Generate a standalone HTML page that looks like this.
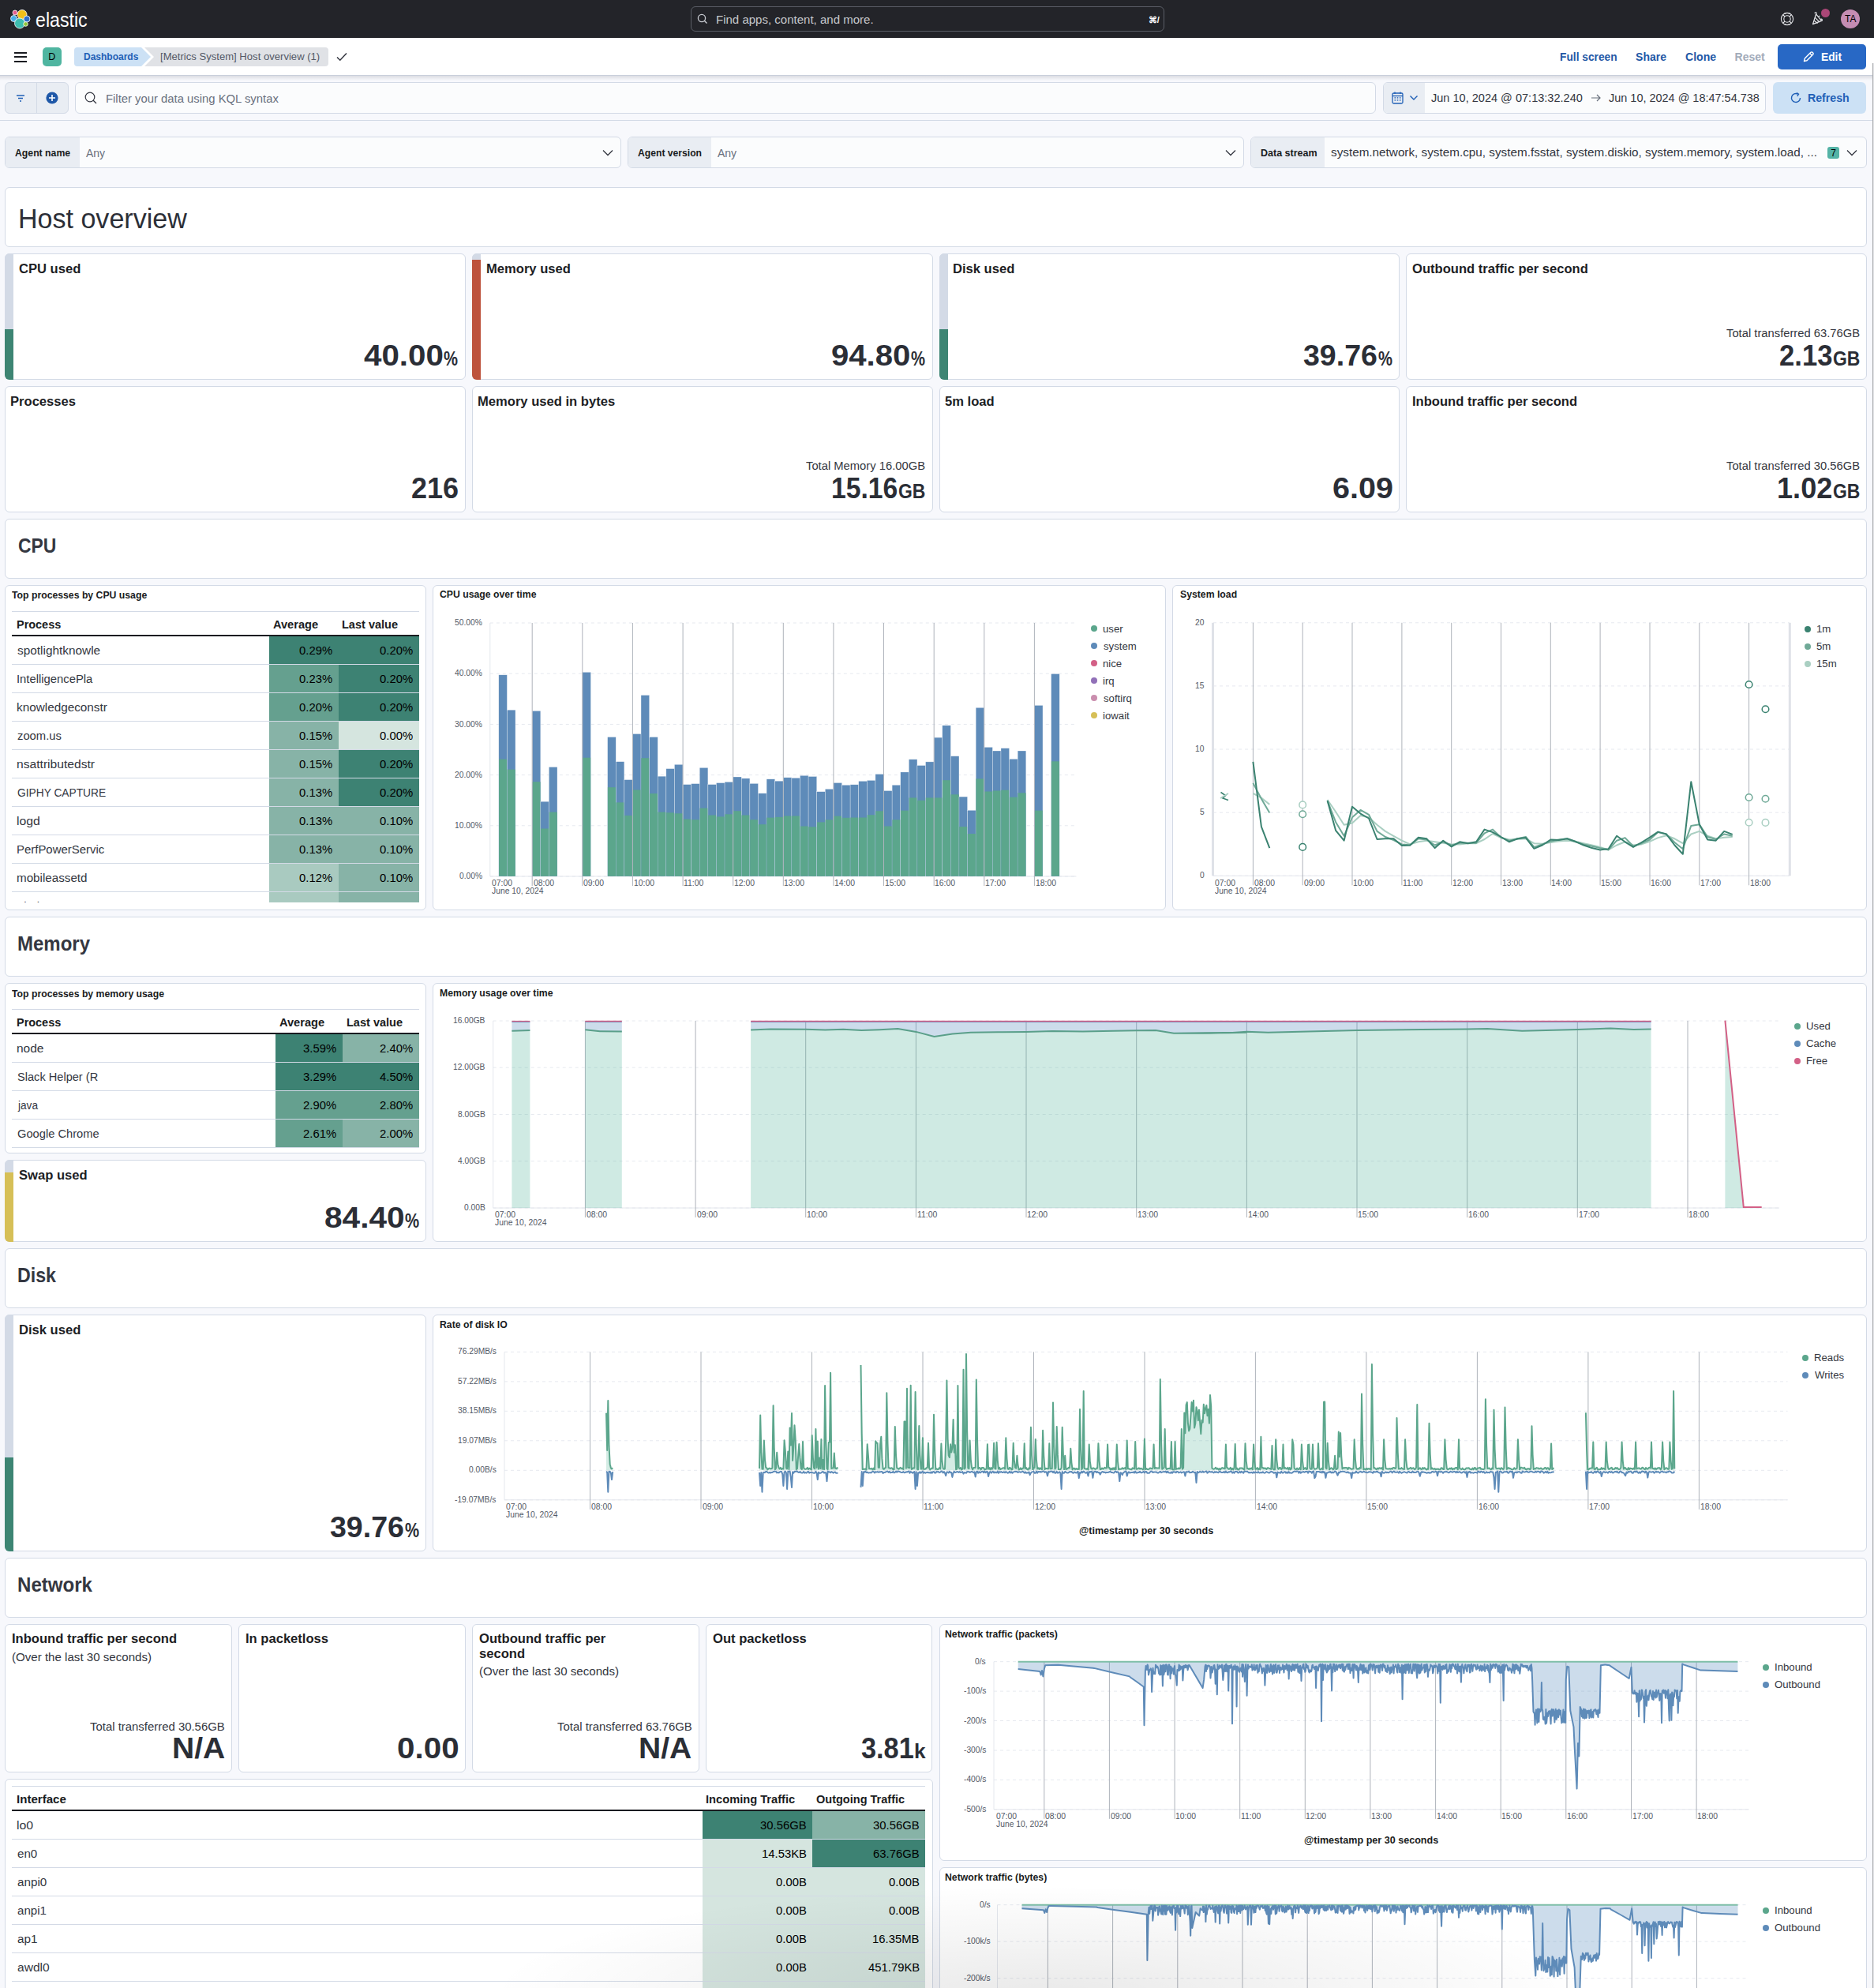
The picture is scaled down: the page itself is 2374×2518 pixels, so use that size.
<!DOCTYPE html><html><head><meta charset="utf-8"><style>
*{margin:0;padding:0}
html,body{width:2374px;height:2518px;overflow:hidden;background:#f7f8fc;font-family:"Liberation Sans",sans-serif;}
.a{position:absolute}
.t{position:absolute;white-space:nowrap;line-height:1;}
svg{overflow:visible}
</style></head><body><div class="a" style="left:0.00px;top:0.00px;width:2374.00px;height:48.00px;background:#232429;"></div>
<svg class="a" style="left:13px;top:11px" width="26" height="26" viewBox="0 0 26 26">
<circle cx="15" cy="7.5" r="6" fill="#f0bf1a" stroke="#fff" stroke-width="0.8"/>
<circle cx="6" cy="5" r="3" fill="#e45e8d" stroke="#fff" stroke-width="0.8"/>
<circle cx="4.5" cy="12.5" r="4" fill="#48b0ea" stroke="#fff" stroke-width="0.8"/>
<circle cx="21" cy="13" r="4" fill="#2e6ec9" stroke="#fff" stroke-width="0.8"/>
<circle cx="12" cy="18.5" r="6.5" fill="#3ebeb0" stroke="#fff" stroke-width="0.8"/>
<circle cx="19.5" cy="19.5" r="2.8" fill="#90c43c" stroke="#fff" stroke-width="0.8"/>
</svg>
<div class="t" style="left:44.98px;top:12.75px;font-size:25px;color:#ffffff;transform:scaleX(0.9262);transform-origin:0 0;">elastic</div>
<div class="a" style="left:875.00px;top:8.00px;width:600.00px;height:32.00px;border:1px solid #5a5d66;border-radius:6px;background:#232429;box-sizing:border-box;"></div>
<svg class="a" style="left:883px;top:17px" width="14" height="14" viewBox="0 0 14 14"><circle cx="6" cy="6" r="4.6" fill="none" stroke="#c9ccd2" stroke-width="1.3"/><path d="M9.3 9.3 L12.5 12.5" stroke="#c9ccd2" stroke-width="1.4"/></svg>
<div class="t" style="left:907.22px;top:18.10px;font-size:14px;color:#c6c8cc;transform:scaleX(1.0730);transform-origin:0 0;">Find apps, content, and more.</div>
<div class="t" style="left:1454.80px;top:19.65px;font-size:11px;font-weight:700;color:#ffffff;">⌘/</div>
<svg class="a" style="left:2255px;top:15px" width="18" height="18" viewBox="0 0 18 18"><g fill="none" stroke="#e8e9ec" stroke-width="1.1"><circle cx="9" cy="9" r="7.6"/><circle cx="9" cy="9" r="4.2"/><path d="M3.6 3.6 L6 6 M14.4 3.6 L12 6 M3.6 14.4 L6 12 M14.4 14.4 L12 12"/><path d="M5.6 2.3 A7.6 7.6 0 0 1 12.4 2.3 M5.6 15.7 A7.6 7.6 0 0 0 12.4 15.7"/></g></svg>
<svg class="a" style="left:2294px;top:14px" width="20" height="20" viewBox="0 0 20 20"><g fill="none" stroke="#e8e9ec" stroke-width="1.2" stroke-linejoin="round"><path d="M2.5 16.6 L6.6 3.8 L13.6 12.4 Z"/><path d="M5.2 8.2 L11 14 M4 12 L8.6 15.5"/><path d="M4.6 2.6 Q6.5 1 7.6 3.2"/><path d="M12.6 10.2 Q15 9.8 14.2 12.6"/><path d="M9.6 7.4 L11.2 5.8"/></g></svg>
<div class="a" style="left:2307px;top:10.5px;width:11px;height:11px;border-radius:50%;background:#ab4777;"></div>
<div class="a" style="left:2331.8px;top:11.8px;width:24.4px;height:24.4px;border-radius:50%;background:#c58db3;"></div>
<div class="t" style="left:2336.71px;top:18.18px;font-size:12.5px;color:#000000;transform:scaleX(0.9524);transform-origin:0 0;">TA</div>
<div class="a" style="left:0.00px;top:48.00px;width:2374.00px;height:48.00px;background:#fff;border-bottom:1px solid #c9cfdb;box-sizing:border-box;"></div>
<div class="a" style="left:18.00px;top:65.50px;width:16.00px;height:2.00px;background:#1a1c21;"></div>
<div class="a" style="left:18.00px;top:71.00px;width:16.00px;height:2.00px;background:#1a1c21;"></div>
<div class="a" style="left:18.00px;top:76.50px;width:16.00px;height:2.00px;background:#1a1c21;"></div>
<div class="a" style="left:54.00px;top:60.00px;width:24.00px;height:24.00px;background:#4fb5a0;border-radius:5px;"></div>
<div class="t" style="left:61.30px;top:66.38px;font-size:12.5px;color:#000;">D</div>
<svg class="a" style="left:94px;top:60px" width="330" height="24" viewBox="0 0 330 24">
<path d="M4 0 H85 L97 12 L85 24 H4 A4 4 0 0 1 0 20 V4 A4 4 0 0 1 4 0Z" fill="#cce1f5"/>
<path d="M89 0 H318 A4 4 0 0 1 322 4 V20 A4 4 0 0 1 318 24 H89 L101 12 Z" fill="#e0e2e6"/>
</svg>
<div class="t" style="left:105.67px;top:65.45px;font-size:13px;font-weight:700;color:#1f5fb6;transform:scaleX(0.9227);transform-origin:0 0;">Dashboards</div>
<div class="t" style="left:202.59px;top:65.45px;font-size:13px;color:#535966;transform:scaleX(1.0070);transform-origin:0 0;">[Metrics System] Host overview (1)</div>
<svg class="a" style="left:426px;top:66px" width="14" height="12" viewBox="0 0 14 12"><path d="M1 6.5 L4.8 10.2 L13 1.5" fill="none" stroke="#343741" stroke-width="1.5"/></svg>
<div class="t" style="left:1975.61px;top:65.10px;font-size:14px;font-weight:700;color:#1f58a6;transform:scaleX(0.9834);transform-origin:0 0;">Full screen</div>
<div class="t" style="left:2072.10px;top:65.10px;font-size:14px;font-weight:700;color:#1f58a6;">Share</div>
<div class="t" style="left:2134.90px;top:65.10px;font-size:14px;font-weight:700;color:#1f58a6;transform:scaleX(1.0053);transform-origin:0 0;">Clone</div>
<div class="t" style="left:2197.60px;top:65.10px;font-size:14px;font-weight:700;color:#a2abba;">Reset</div>
<div class="a" style="left:2252.00px;top:56.00px;width:112.00px;height:32.00px;background:#2868c5;border-radius:5px;"></div>
<svg class="a" style="left:2283px;top:64px" width="16" height="16" viewBox="0 0 16 16"><path d="M2.5 13.5 L3.3 10 L11 2.3 A1.4 1.4 0 0 1 13 2.3 L13.7 3 A1.4 1.4 0 0 1 13.7 5 L6 12.7 Z M9.8 3.5 L12.5 6.2" fill="none" stroke="#fff" stroke-width="1.4" stroke-linejoin="round"/></svg>
<div class="t" style="left:2306.61px;top:65.10px;font-size:14px;font-weight:700;color:#ffffff;transform:scaleX(0.9843);transform-origin:0 0;">Edit</div>
<div class="a" style="left:0.00px;top:96.00px;width:2374.00px;height:57.00px;background:#f7f8fc;border-bottom:1px solid #d3dae6;box-sizing:border-box;"></div>
<div class="a" style="left:0.00px;top:96.00px;width:2374.00px;height:6.00px;background:linear-gradient(rgba(40,45,60,0.13),rgba(40,45,60,0.0));"></div>
<div class="a" style="left:6.00px;top:104.00px;width:81.00px;height:40.00px;background:#e9edf3;border:1px solid #d3dae6;border-radius:6px;box-sizing:border-box;"></div>
<div class="a" style="left:46.00px;top:104.00px;width:1.00px;height:40.00px;background:#d3dae6;"></div>
<svg class="a" style="left:20px;top:119px" width="12" height="11" viewBox="0 0 12 11"><path d="M1 2 H11 M3 5.5 H9 M5 9 H7" stroke="#1f5fb6" stroke-width="1.3"/></svg>
<svg class="a" style="left:58px;top:116px" width="16" height="16" viewBox="0 0 16 16"><circle cx="8" cy="8" r="7.6" fill="#1f58a8"/><path d="M8 4 V12 M4 8 H12" stroke="#fff" stroke-width="1.6"/></svg>
<div class="a" style="left:95.00px;top:104.00px;width:1648.00px;height:40.00px;background:#fbfcfd;border:1px solid #d3dae6;border-radius:6px;box-sizing:border-box;"></div>
<svg class="a" style="left:107px;top:116px" width="17" height="17" viewBox="0 0 17 17"><circle cx="7" cy="7" r="5.8" fill="none" stroke="#343741" stroke-width="1.2"/><path d="M11 11 L15 15" stroke="#343741" stroke-width="1.3"/></svg>
<div class="t" style="left:134.33px;top:117.70px;font-size:14px;color:#69707d;transform:scaleX(1.0599);transform-origin:0 0;">Filter your data using KQL syntax</div>
<div class="a" style="left:1752.00px;top:104.00px;width:485.00px;height:40.00px;background:#fbfcfd;border:1px solid #d3dae6;border-radius:6px;box-sizing:border-box;"></div>
<div class="a" style="left:1753.00px;top:105.00px;width:52.00px;height:38.00px;background:#e9edf3;border-radius:5px 0 0 5px;"></div>
<svg class="a" style="left:1762px;top:115px" width="18" height="18" viewBox="0 0 18 18"><rect x="2" y="3" width="13" height="13" rx="1.5" fill="none" stroke="#1f5fb6" stroke-width="1.3"/><path d="M2 6.5 H15" stroke="#1f5fb6" stroke-width="1.3"/><path d="M5 1.5 V4 M12 1.5 V4" stroke="#1f5fb6" stroke-width="1.3"/><g fill="#1f5fb6"><rect x="4.5" y="8.2" width="1.6" height="1.4"/><rect x="7.7" y="8.2" width="1.6" height="1.4"/><rect x="10.9" y="8.2" width="1.6" height="1.4"/><rect x="4.5" y="11.2" width="1.6" height="1.4"/><rect x="7.7" y="11.2" width="1.6" height="1.4"/><rect x="10.9" y="11.2" width="1.6" height="1.4"/></g></svg>
<svg class="a" style="left:1785px;top:120px" width="12" height="8" viewBox="0 0 12 8"><path d="M1.5 1.5 L6 6 L10.5 1.5" fill="none" stroke="#1f5fb6" stroke-width="1.4"/></svg>
<div class="t" style="left:1813.29px;top:117.10px;font-size:14px;color:#343741;transform:scaleX(1.0386);transform-origin:0 0;">Jun 10, 2024 @ 07:13:32.240</div>
<svg class="a" style="left:2015px;top:117px" width="14" height="14" viewBox="0 0 14 14"><path d="M1 7 H12 M8 3 L12 7 L8 11" fill="none" stroke="#69707d" stroke-width="1.2"/></svg>
<div class="t" style="left:2037.79px;top:117.10px;font-size:14px;color:#343741;transform:scaleX(1.0332);transform-origin:0 0;">Jun 10, 2024 @ 18:47:54.738</div>
<div class="a" style="left:2246.00px;top:104.00px;width:118.00px;height:40.00px;background:#cce1f5;border-radius:6px;"></div>
<svg class="a" style="left:2267px;top:116px" width="16" height="16" viewBox="0 0 16 16"><path d="M13.5 8 A5.5 5.5 0 1 1 10.5 3.1" fill="none" stroke="#1f5fb6" stroke-width="1.4"/><path d="M9 1.5 L11.5 3.2 L9.8 5.8" fill="none" stroke="#1f5fb6" stroke-width="1.4"/></svg>
<div class="t" style="left:2289.59px;top:117.10px;font-size:14px;font-weight:700;color:#1f5fb6;transform:scaleX(1.0119);transform-origin:0 0;">Refresh</div>
<div class="a" style="left:6.00px;top:173.00px;width:781.00px;height:40.00px;background:#fbfcfd;border:1px solid #d3dae6;border-radius:6px;box-sizing:border-box;"></div>
<div class="a" style="left:7.00px;top:174.00px;width:94.00px;height:38.00px;background:#e9edf3;border-radius:5px 0 0 5px;"></div>
<div class="t" style="left:19.19px;top:188.30px;font-size:12px;font-weight:700;color:#1a1c21;transform:scaleX(1.0206);transform-origin:0 0;">Agent name</div>
<div class="t" style="left:109.00px;top:187.10px;font-size:14px;color:#69707d;">Any</div>
<svg class="a" style="left:763.0px;top:189px" width="14" height="9" viewBox="0 0 14 9"><path d="M1 1.5 L7 7.5 L13 1.5" fill="none" stroke="#343741" stroke-width="1.3"/></svg>
<div class="a" style="left:795.00px;top:173.00px;width:781.00px;height:40.00px;background:#fbfcfd;border:1px solid #d3dae6;border-radius:6px;box-sizing:border-box;"></div>
<div class="a" style="left:796.00px;top:174.00px;width:105.00px;height:38.00px;background:#e9edf3;border-radius:5px 0 0 5px;"></div>
<div class="t" style="left:808.20px;top:188.30px;font-size:12px;font-weight:700;color:#1a1c21;transform:scaleX(1.0127);transform-origin:0 0;">Agent version</div>
<div class="t" style="left:909.00px;top:187.10px;font-size:14px;color:#69707d;">Any</div>
<svg class="a" style="left:1552.0px;top:189px" width="14" height="9" viewBox="0 0 14 9"><path d="M1 1.5 L7 7.5 L13 1.5" fill="none" stroke="#343741" stroke-width="1.3"/></svg>
<div class="a" style="left:1584.00px;top:173.00px;width:781.00px;height:40.00px;background:#fbfcfd;border:1px solid #d3dae6;border-radius:6px;box-sizing:border-box;"></div>
<div class="a" style="left:1585.00px;top:174.00px;width:93.00px;height:38.00px;background:#e9edf3;border-radius:5px 0 0 5px;"></div>
<div class="t" style="left:1596.67px;top:188.30px;font-size:12px;font-weight:700;color:#1a1c21;transform:scaleX(1.0432);transform-origin:0 0;">Data stream</div>
<div class="t" style="left:1685.56px;top:186.10px;font-size:14px;color:#343741;transform:scaleX(1.0910);transform-origin:0 0;">system.network, system.cpu, system.fsstat, system.diskio, system.memory, system.load, ...</div>
<div class="a" style="left:2315.00px;top:186.00px;width:15.00px;height:15.00px;background:#54b3a6;border-radius:3px;"></div>
<div class="t" style="left:2319.15px;top:187.80px;font-size:12px;color:#000;">7</div>
<svg class="a" style="left:2339px;top:189px" width="14" height="9" viewBox="0 0 14 9"><path d="M1 1.5 L7 7.5 L13 1.5" fill="none" stroke="#343741" stroke-width="1.3"/></svg>
<div class="a" style="left:6.00px;top:237.00px;width:2359.00px;height:76.00px;background:#fff;border:1px solid #d3dae6;border-radius:6px;box-sizing:border-box;"></div>
<div class="t" style="left:22.72px;top:260.32px;font-size:35.5px;color:#2c2f37;transform:scaleX(0.9587);transform-origin:0 0;">Host overview</div>
<div class="a" style="left:6.00px;top:321.00px;width:583.75px;height:160.00px;background:#fff;border:1px solid #d3dae6;border-radius:6px;box-sizing:border-box;"></div>
<div class="a" style="left:6.00px;top:321.00px;width:11px;height:160.00px;border-radius:6px 0 0 6px;overflow:hidden;background:#d3dae6;"><div style="position:absolute;left:0;right:0;bottom:0;height:64.00px;background:#3d8573;"></div></div>
<div class="t" style="left:24.38px;top:333.20px;font-size:16px;font-weight:700;color:#1d1e24;transform:scaleX(1.0360);transform-origin:0 0;">CPU used</div>
<div class="t" style="left:562.26px;top:441.75px;font-size:25px;font-weight:700;color:#2b2e36;transform:scaleX(0.8095);transform-origin:0 0;">%</div>
<div class="t" style="left:461.01px;top:431.55px;font-size:37px;font-weight:700;color:#2b2e36;transform:scaleX(1.0894);transform-origin:0 0;">40.00</div>
<div class="a" style="left:597.75px;top:321.00px;width:583.75px;height:160.00px;background:#fff;border:1px solid #d3dae6;border-radius:6px;box-sizing:border-box;"></div>
<div class="a" style="left:597.75px;top:321.00px;width:11px;height:160.00px;border-radius:6px 0 0 6px;overflow:hidden;background:#d3dae6;"><div style="position:absolute;left:0;right:0;bottom:0;height:151.68px;background:#bd533c;"></div></div>
<div class="t" style="left:615.61px;top:333.20px;font-size:16px;font-weight:700;color:#1d1e24;transform:scaleX(1.0360);transform-origin:0 0;">Memory used</div>
<div class="t" style="left:1154.01px;top:441.75px;font-size:25px;font-weight:700;color:#2b2e36;transform:scaleX(0.8095);transform-origin:0 0;">%</div>
<div class="t" style="left:1053.29px;top:431.55px;font-size:37px;font-weight:700;color:#2b2e36;transform:scaleX(1.0835);transform-origin:0 0;">94.80</div>
<div class="a" style="left:1189.50px;top:321.00px;width:583.75px;height:160.00px;background:#fff;border:1px solid #d3dae6;border-radius:6px;box-sizing:border-box;"></div>
<div class="a" style="left:1189.50px;top:321.00px;width:11px;height:160.00px;border-radius:6px 0 0 6px;overflow:hidden;background:#d3dae6;"><div style="position:absolute;left:0;right:0;bottom:0;height:63.62px;background:#3d8573;"></div></div>
<div class="t" style="left:1207.36px;top:333.20px;font-size:16px;font-weight:700;color:#1d1e24;transform:scaleX(1.0360);transform-origin:0 0;">Disk used</div>
<div class="t" style="left:1745.76px;top:441.75px;font-size:25px;font-weight:700;color:#2b2e36;transform:scaleX(0.8095);transform-origin:0 0;">%</div>
<div class="t" style="left:1651.14px;top:431.55px;font-size:37px;font-weight:700;color:#2b2e36;transform:scaleX(1.0144);transform-origin:0 0;">39.76</div>
<div class="a" style="left:1781.25px;top:321.00px;width:583.75px;height:160.00px;background:#fff;border:1px solid #d3dae6;border-radius:6px;box-sizing:border-box;"></div>
<div class="t" style="left:1789.13px;top:333.20px;font-size:16px;font-weight:700;color:#1d1e24;transform:scaleX(1.0360);transform-origin:0 0;">Outbound traffic per second</div>
<div class="t" style="left:2321.68px;top:441.75px;font-size:25px;font-weight:700;color:#2b2e36;transform:scaleX(0.9178);transform-origin:0 0;">GB</div>
<div class="t" style="left:2253.88px;top:431.55px;font-size:37px;font-weight:700;color:#2b2e36;transform:scaleX(0.9366);transform-origin:0 0;">2.13</div>
<div class="t" style="left:2186.62px;top:415.10px;font-size:14px;color:#343741;transform:scaleX(1.0550);transform-origin:0 0;">Total transferred 63.76GB</div>
<div class="a" style="left:6.00px;top:489.00px;width:583.75px;height:160.00px;background:#fff;border:1px solid #d3dae6;border-radius:6px;box-sizing:border-box;"></div>
<div class="t" style="left:13.36px;top:501.20px;font-size:16px;font-weight:700;color:#1d1e24;transform:scaleX(1.0360);transform-origin:0 0;">Processes</div>
<div class="t" style="left:520.89px;top:599.55px;font-size:37px;font-weight:700;color:#2b2e36;transform:scaleX(0.9730);transform-origin:0 0;">216</div>
<div class="a" style="left:597.75px;top:489.00px;width:583.75px;height:160.00px;background:#fff;border:1px solid #d3dae6;border-radius:6px;box-sizing:border-box;"></div>
<div class="t" style="left:605.11px;top:501.20px;font-size:16px;font-weight:700;color:#1d1e24;transform:scaleX(1.0360);transform-origin:0 0;">Memory used in bytes</div>
<div class="t" style="left:1138.18px;top:609.75px;font-size:25px;font-weight:700;color:#2b2e36;transform:scaleX(0.9178);transform-origin:0 0;">GB</div>
<div class="t" style="left:1053.40px;top:599.55px;font-size:37px;font-weight:700;color:#2b2e36;transform:scaleX(0.9112);transform-origin:0 0;">15.16</div>
<div class="t" style="left:1021.27px;top:583.10px;font-size:14px;color:#343741;transform:scaleX(1.0550);transform-origin:0 0;">Total Memory 16.00GB</div>
<div class="a" style="left:1189.50px;top:489.00px;width:583.75px;height:160.00px;background:#fff;border:1px solid #d3dae6;border-radius:6px;box-sizing:border-box;"></div>
<div class="t" style="left:1197.48px;top:501.20px;font-size:16px;font-weight:700;color:#1d1e24;transform:scaleX(1.0360);transform-origin:0 0;">5m load</div>
<div class="t" style="left:1687.86px;top:599.55px;font-size:37px;font-weight:700;color:#2b2e36;transform:scaleX(1.0678);transform-origin:0 0;">6.09</div>
<div class="a" style="left:1781.25px;top:489.00px;width:583.75px;height:160.00px;background:#fff;border:1px solid #d3dae6;border-radius:6px;box-sizing:border-box;"></div>
<div class="t" style="left:1788.61px;top:501.20px;font-size:16px;font-weight:700;color:#1d1e24;transform:scaleX(1.0360);transform-origin:0 0;">Inbound traffic per second</div>
<div class="t" style="left:2321.68px;top:609.75px;font-size:25px;font-weight:700;color:#2b2e36;transform:scaleX(0.9178);transform-origin:0 0;">GB</div>
<div class="t" style="left:2251.25px;top:599.55px;font-size:37px;font-weight:700;color:#2b2e36;transform:scaleX(0.9765);transform-origin:0 0;">1.02</div>
<div class="t" style="left:2186.62px;top:583.10px;font-size:14px;color:#343741;transform:scaleX(1.0550);transform-origin:0 0;">Total transferred 30.56GB</div>
<div class="a" style="left:6.00px;top:657.00px;width:2359.00px;height:76.00px;background:#fff;border:1px solid #d3dae6;border-radius:6px;box-sizing:border-box;"></div><div class="t" style="left:22.58px;top:679.25px;font-size:25px;font-weight:700;color:#343741;transform:scaleX(0.9163);transform-origin:0 0;">CPU</div>
<div class="a" style="left:6.00px;top:1161.00px;width:2359.00px;height:76.00px;background:#fff;border:1px solid #d3dae6;border-radius:6px;box-sizing:border-box;"></div><div class="t" style="left:21.87px;top:1183.25px;font-size:25px;font-weight:700;color:#343741;transform:scaleX(0.9596);transform-origin:0 0;">Memory</div>
<div class="a" style="left:6.00px;top:1581.00px;width:2359.00px;height:76.00px;background:#fff;border:1px solid #d3dae6;border-radius:6px;box-sizing:border-box;"></div><div class="t" style="left:21.92px;top:1603.25px;font-size:25px;font-weight:700;color:#343741;transform:scaleX(0.9276);transform-origin:0 0;">Disk</div>
<div class="a" style="left:6.00px;top:1973.00px;width:2359.00px;height:76.00px;background:#fff;border:1px solid #d3dae6;border-radius:6px;box-sizing:border-box;"></div><div class="t" style="left:21.86px;top:1995.25px;font-size:25px;font-weight:700;color:#343741;transform:scaleX(0.9628);transform-origin:0 0;">Network</div>
<div class="a" style="left:6.00px;top:741.00px;width:534.44px;height:412.00px;background:#fff;border:1px solid #d3dae6;border-radius:6px;box-sizing:border-box;"></div>
<div class="t" style="left:15.40px;top:747.80px;font-size:12px;font-weight:700;color:#1a1c21;transform:scaleX(1.0200);transform-origin:0 0;">Top processes by CPU usage</div>
<div class="a" style="left:15.00px;top:774.00px;width:516.00px;height:1.00px;background:#d3dae6;"></div>
<div class="t" style="left:20.57px;top:783.60px;font-size:14px;font-weight:700;color:#1a1c21;transform:scaleX(1.0321);transform-origin:0 0;">Process</div>
<div class="t" style="left:346.28px;top:783.60px;font-size:14px;font-weight:700;color:#1a1c21;transform:scaleX(1.0427);transform-origin:0 0;">Average</div>
<div class="t" style="left:433.27px;top:783.60px;font-size:14px;font-weight:700;color:#1a1c21;transform:scaleX(1.0373);transform-origin:0 0;">Last value</div>
<div class="a" style="left:15.00px;top:804.00px;width:516.00px;height:2.00px;background:#1a1c21;"></div>
<div class="a" style="left:0;top:0;width:2374px;height:1143px;overflow:hidden;"><div class="a" style="left:341.00px;top:806.00px;width:87.80px;height:35.00px;background:#3d8273;"></div>
<div class="t" style="left:379.25px;top:817.10px;font-size:14px;color:#000;transform:scaleX(1.0600);transform-origin:0 0;">0.29%</div>
<div class="a" style="left:428.80px;top:806.00px;width:102.20px;height:35.00px;background:#3d8273;"></div>
<div class="t" style="left:481.45px;top:817.10px;font-size:14px;color:#000;transform:scaleX(1.0600);transform-origin:0 0;">0.20%</div>
<div class="a" style="left:15.00px;top:841.00px;width:516.00px;height:1.00px;background:#d3dae6;"></div>
<div class="t" style="left:21.96px;top:817.10px;font-size:14px;color:#343741;transform:scaleX(1.0982);transform-origin:0 0;">spotlightknowle</div>
<div class="a" style="left:341.00px;top:842.00px;width:87.80px;height:35.00px;background:#65a08f;"></div>
<div class="t" style="left:379.25px;top:853.10px;font-size:14px;color:#000;transform:scaleX(1.0600);transform-origin:0 0;">0.23%</div>
<div class="a" style="left:428.80px;top:842.00px;width:102.20px;height:35.00px;background:#3d8273;"></div>
<div class="t" style="left:481.45px;top:853.10px;font-size:14px;color:#000;transform:scaleX(1.0600);transform-origin:0 0;">0.20%</div>
<div class="a" style="left:15.00px;top:877.00px;width:516.00px;height:1.00px;background:#d3dae6;"></div>
<div class="t" style="left:21.02px;top:853.10px;font-size:14px;color:#343741;transform:scaleX(1.0579);transform-origin:0 0;">IntelligencePla</div>
<div class="a" style="left:341.00px;top:878.00px;width:87.80px;height:35.00px;background:#65a08f;"></div>
<div class="t" style="left:379.25px;top:889.10px;font-size:14px;color:#000;transform:scaleX(1.0600);transform-origin:0 0;">0.20%</div>
<div class="a" style="left:428.80px;top:878.00px;width:102.20px;height:35.00px;background:#3d8273;"></div>
<div class="t" style="left:481.45px;top:889.10px;font-size:14px;color:#000;transform:scaleX(1.0600);transform-origin:0 0;">0.20%</div>
<div class="a" style="left:15.00px;top:913.00px;width:516.00px;height:1.00px;background:#d3dae6;"></div>
<div class="t" style="left:21.42px;top:889.10px;font-size:14px;color:#343741;transform:scaleX(1.0934);transform-origin:0 0;">knowledgeconstr</div>
<div class="a" style="left:341.00px;top:914.00px;width:87.80px;height:35.00px;background:#87b3a7;"></div>
<div class="t" style="left:379.25px;top:925.10px;font-size:14px;color:#000;transform:scaleX(1.0600);transform-origin:0 0;">0.15%</div>
<div class="a" style="left:428.80px;top:914.00px;width:102.20px;height:35.00px;background:#d5e5df;"></div>
<div class="t" style="left:481.45px;top:925.10px;font-size:14px;color:#000;transform:scaleX(1.0600);transform-origin:0 0;">0.00%</div>
<div class="a" style="left:15.00px;top:949.00px;width:516.00px;height:1.00px;background:#d3dae6;"></div>
<div class="t" style="left:21.77px;top:925.10px;font-size:14px;color:#343741;transform:scaleX(1.0560);transform-origin:0 0;">zoom.us</div>
<div class="a" style="left:341.00px;top:950.00px;width:87.80px;height:35.00px;background:#87b3a7;"></div>
<div class="t" style="left:379.25px;top:961.10px;font-size:14px;color:#000;transform:scaleX(1.0600);transform-origin:0 0;">0.15%</div>
<div class="a" style="left:428.80px;top:950.00px;width:102.20px;height:35.00px;background:#3d8273;"></div>
<div class="t" style="left:481.45px;top:961.10px;font-size:14px;color:#000;transform:scaleX(1.0600);transform-origin:0 0;">0.20%</div>
<div class="a" style="left:15.00px;top:985.00px;width:516.00px;height:1.00px;background:#d3dae6;"></div>
<div class="t" style="left:21.40px;top:961.10px;font-size:14px;color:#343741;transform:scaleX(1.1166);transform-origin:0 0;">nsattributedstr</div>
<div class="a" style="left:341.00px;top:986.00px;width:87.80px;height:35.00px;background:#87b3a7;"></div>
<div class="t" style="left:379.25px;top:997.10px;font-size:14px;color:#000;transform:scaleX(1.0600);transform-origin:0 0;">0.13%</div>
<div class="a" style="left:428.80px;top:986.00px;width:102.20px;height:35.00px;background:#3d8273;"></div>
<div class="t" style="left:481.45px;top:997.10px;font-size:14px;color:#000;transform:scaleX(1.0600);transform-origin:0 0;">0.20%</div>
<div class="a" style="left:15.00px;top:1021.00px;width:516.00px;height:1.00px;background:#d3dae6;"></div>
<div class="t" style="left:21.71px;top:997.10px;font-size:14px;color:#343741;transform:scaleX(0.9832);transform-origin:0 0;">GIPHY CAPTURE</div>
<div class="a" style="left:341.00px;top:1022.00px;width:87.80px;height:35.00px;background:#87b3a7;"></div>
<div class="t" style="left:379.25px;top:1033.10px;font-size:14px;color:#000;transform:scaleX(1.0600);transform-origin:0 0;">0.13%</div>
<div class="a" style="left:428.80px;top:1022.00px;width:102.20px;height:35.00px;background:#87b3a7;"></div>
<div class="t" style="left:481.45px;top:1033.10px;font-size:14px;color:#000;transform:scaleX(1.0600);transform-origin:0 0;">0.10%</div>
<div class="a" style="left:15.00px;top:1057.00px;width:516.00px;height:1.00px;background:#d3dae6;"></div>
<div class="t" style="left:21.39px;top:1033.10px;font-size:14px;color:#343741;transform:scaleX(1.1255);transform-origin:0 0;">logd</div>
<div class="a" style="left:341.00px;top:1058.00px;width:87.80px;height:35.00px;background:#87b3a7;"></div>
<div class="t" style="left:379.25px;top:1069.10px;font-size:14px;color:#000;transform:scaleX(1.0600);transform-origin:0 0;">0.13%</div>
<div class="a" style="left:428.80px;top:1058.00px;width:102.20px;height:35.00px;background:#87b3a7;"></div>
<div class="t" style="left:481.45px;top:1069.10px;font-size:14px;color:#000;transform:scaleX(1.0600);transform-origin:0 0;">0.10%</div>
<div class="a" style="left:15.00px;top:1093.00px;width:516.00px;height:1.00px;background:#d3dae6;"></div>
<div class="t" style="left:21.23px;top:1069.10px;font-size:14px;color:#343741;transform:scaleX(1.0671);transform-origin:0 0;">PerfPowerServic</div>
<div class="a" style="left:341.00px;top:1094.00px;width:87.80px;height:35.00px;background:#a9cac0;"></div>
<div class="t" style="left:379.25px;top:1105.10px;font-size:14px;color:#000;transform:scaleX(1.0600);transform-origin:0 0;">0.12%</div>
<div class="a" style="left:428.80px;top:1094.00px;width:102.20px;height:35.00px;background:#87b3a7;"></div>
<div class="t" style="left:481.45px;top:1105.10px;font-size:14px;color:#000;transform:scaleX(1.0600);transform-origin:0 0;">0.10%</div>
<div class="a" style="left:15.00px;top:1129.00px;width:516.00px;height:1.00px;background:#d3dae6;"></div>
<div class="t" style="left:21.42px;top:1105.10px;font-size:14px;color:#343741;transform:scaleX(1.0855);transform-origin:0 0;">mobileassetd</div>
<div class="a" style="left:341.00px;top:1130.00px;width:87.80px;height:35.00px;background:#a9cac0;"></div>
<div class="t" style="left:380.31px;top:1141.10px;font-size:14px;color:#000;transform:scaleX(1.0600);transform-origin:0 0;">0.11%</div>
<div class="a" style="left:428.80px;top:1130.00px;width:102.20px;height:35.00px;background:#87b3a7;"></div>
<div class="t" style="left:481.45px;top:1141.10px;font-size:14px;color:#000;transform:scaleX(1.0600);transform-origin:0 0;">0.10%</div>
<div class="a" style="left:15.00px;top:1165.00px;width:516.00px;height:1.00px;background:#d3dae6;"></div>
<div class="t" style="left:21.22px;top:1141.10px;font-size:14px;color:#343741;transform:scaleX(1.0700);transform-origin:0 0;">Finder</div></div>
<div class="a" style="left:6.00px;top:1245.00px;width:534.44px;height:216.00px;background:#fff;border:1px solid #d3dae6;border-radius:6px;box-sizing:border-box;"></div>
<div class="t" style="left:15.40px;top:1252.80px;font-size:12px;font-weight:700;color:#1a1c21;transform:scaleX(1.0200);transform-origin:0 0;">Top processes by memory usage</div>
<div class="a" style="left:15.00px;top:1278.00px;width:516.00px;height:1.00px;background:#d3dae6;"></div>
<div class="t" style="left:20.57px;top:1287.60px;font-size:14px;font-weight:700;color:#1a1c21;transform:scaleX(1.0321);transform-origin:0 0;">Process</div>
<div class="t" style="left:354.38px;top:1287.60px;font-size:14px;font-weight:700;color:#1a1c21;transform:scaleX(1.0427);transform-origin:0 0;">Average</div>
<div class="t" style="left:438.67px;top:1287.60px;font-size:14px;font-weight:700;color:#1a1c21;transform:scaleX(1.0373);transform-origin:0 0;">Last value</div>
<div class="a" style="left:15.00px;top:1308.00px;width:516.00px;height:2.00px;background:#1a1c21;"></div>
<div class="a" style="left:349.00px;top:1310.00px;width:84.60px;height:35.00px;background:#3d8273;"></div>
<div class="t" style="left:384.05px;top:1321.10px;font-size:14px;color:#000;transform:scaleX(1.0600);transform-origin:0 0;">3.59%</div>
<div class="a" style="left:433.60px;top:1310.00px;width:97.40px;height:35.00px;background:#87b3a7;"></div>
<div class="t" style="left:481.45px;top:1321.10px;font-size:14px;color:#000;transform:scaleX(1.0600);transform-origin:0 0;">2.40%</div>
<div class="a" style="left:15.00px;top:1345.00px;width:516.00px;height:1.00px;background:#d3dae6;"></div>
<div class="t" style="left:21.40px;top:1321.10px;font-size:14px;color:#343741;transform:scaleX(1.1077);transform-origin:0 0;">node</div>
<div class="a" style="left:349.00px;top:1346.00px;width:84.60px;height:35.00px;background:#3d8273;"></div>
<div class="t" style="left:384.05px;top:1357.10px;font-size:14px;color:#000;transform:scaleX(1.0600);transform-origin:0 0;">3.29%</div>
<div class="a" style="left:433.60px;top:1346.00px;width:97.40px;height:35.00px;background:#3d8273;"></div>
<div class="t" style="left:481.45px;top:1357.10px;font-size:14px;color:#000;transform:scaleX(1.0600);transform-origin:0 0;">4.50%</div>
<div class="a" style="left:15.00px;top:1381.00px;width:516.00px;height:1.00px;background:#d3dae6;"></div>
<div class="t" style="left:21.67px;top:1357.10px;font-size:14px;color:#343741;transform:scaleX(1.0424);transform-origin:0 0;">Slack Helper (R</div>
<div class="a" style="left:349.00px;top:1382.00px;width:84.60px;height:35.00px;background:#65a08f;"></div>
<div class="t" style="left:384.05px;top:1393.10px;font-size:14px;color:#000;transform:scaleX(1.0600);transform-origin:0 0;">2.90%</div>
<div class="a" style="left:433.60px;top:1382.00px;width:97.40px;height:35.00px;background:#65a08f;"></div>
<div class="t" style="left:481.45px;top:1393.10px;font-size:14px;color:#000;transform:scaleX(1.0600);transform-origin:0 0;">2.80%</div>
<div class="a" style="left:15.00px;top:1417.00px;width:516.00px;height:1.00px;background:#d3dae6;"></div>
<div class="t" style="left:22.79px;top:1393.10px;font-size:14px;color:#343741;transform:scaleX(0.9732);transform-origin:0 0;">java</div>
<div class="a" style="left:349.00px;top:1418.00px;width:84.60px;height:35.00px;background:#65a08f;"></div>
<div class="t" style="left:384.05px;top:1429.10px;font-size:14px;color:#000;transform:scaleX(1.0600);transform-origin:0 0;">2.61%</div>
<div class="a" style="left:433.60px;top:1418.00px;width:97.40px;height:35.00px;background:#87b3a7;"></div>
<div class="t" style="left:481.45px;top:1429.10px;font-size:14px;color:#000;transform:scaleX(1.0600);transform-origin:0 0;">2.00%</div>
<div class="a" style="left:15.00px;top:1453.00px;width:516.00px;height:1.00px;background:#d3dae6;"></div>
<div class="t" style="left:21.67px;top:1429.10px;font-size:14px;color:#343741;transform:scaleX(1.0482);transform-origin:0 0;">Google Chrome</div>
<div class="a" style="left:6.00px;top:1469.00px;width:534.44px;height:104.00px;background:#fff;border:1px solid #d3dae6;border-radius:6px;box-sizing:border-box;"></div>
<div class="a" style="left:6.00px;top:1469.00px;width:11px;height:104.00px;border-radius:6px 0 0 6px;overflow:hidden;background:#d3dae6;"><div style="position:absolute;left:0;right:0;bottom:0;height:87.78px;background:#d6bf57;"></div></div>
<div class="t" style="left:24.48px;top:1481.10px;font-size:16px;font-weight:700;color:#1d1e24;transform:scaleX(1.0360);transform-origin:0 0;">Swap used</div>
<div class="t" style="left:512.85px;top:1533.75px;font-size:25px;font-weight:700;color:#2b2e36;transform:scaleX(0.8143);transform-origin:0 0;">%</div>
<div class="t" style="left:410.92px;top:1523.55px;font-size:37px;font-weight:700;color:#2b2e36;transform:scaleX(1.0968);transform-origin:0 0;">84.40</div>
<div class="a" style="left:6.00px;top:1665.00px;width:534.44px;height:300.00px;background:#fff;border:1px solid #d3dae6;border-radius:6px;box-sizing:border-box;"></div>
<div class="a" style="left:6.00px;top:1665.00px;width:11px;height:300.00px;border-radius:6px 0 0 6px;overflow:hidden;background:#d3dae6;"><div style="position:absolute;left:0;right:0;bottom:0;height:119.28px;background:#3d8573;"></div></div>
<div class="t" style="left:23.86px;top:1676.90px;font-size:16px;font-weight:700;color:#1d1e24;transform:scaleX(1.0360);transform-origin:0 0;">Disk used</div>
<div class="t" style="left:512.85px;top:1925.75px;font-size:25px;font-weight:700;color:#2b2e36;transform:scaleX(0.8143);transform-origin:0 0;">%</div>
<div class="t" style="left:418.22px;top:1915.55px;font-size:37px;font-weight:700;color:#2b2e36;transform:scaleX(1.0144);transform-origin:0 0;">39.76</div>
<div class="a" style="left:6.00px;top:2057.00px;width:287.88px;height:188.00px;background:#fff;border:1px solid #d3dae6;border-radius:6px;box-sizing:border-box;"></div>
<div class="t" style="left:14.66px;top:2067.90px;font-size:16px;font-weight:700;color:#1d1e24;transform:scaleX(1.0360);transform-origin:0 0;">Inbound traffic per second</div>
<div class="t" style="left:14.83px;top:2091.60px;font-size:14px;color:#343741;transform:scaleX(1.0780);transform-origin:0 0;">(Over the last 30 seconds)</div>
<div class="t" style="left:114.40px;top:2179.60px;font-size:14px;color:#343741;transform:scaleX(1.0650);transform-origin:0 0;">Total transferred 30.56GB</div>
<div class="t" style="left:217.74px;top:2195.55px;font-size:37px;font-weight:700;color:#2b2e36;transform:scaleX(1.0548);transform-origin:0 0;">N/A</div>
<div class="a" style="left:301.88px;top:2057.00px;width:287.88px;height:188.00px;background:#fff;border:1px solid #d3dae6;border-radius:6px;box-sizing:border-box;"></div>
<div class="t" style="left:310.54px;top:2067.90px;font-size:16px;font-weight:700;color:#1d1e24;transform:scaleX(1.0360);transform-origin:0 0;">In packetloss</div>
<div class="t" style="left:502.81px;top:2195.55px;font-size:37px;font-weight:700;color:#2b2e36;transform:scaleX(1.0913);transform-origin:0 0;">0.00</div>
<div class="a" style="left:597.75px;top:2057.00px;width:287.88px;height:188.00px;background:#fff;border:1px solid #d3dae6;border-radius:6px;box-sizing:border-box;"></div>
<div class="t" style="left:606.93px;top:2067.90px;font-size:16px;font-weight:700;color:#1d1e24;transform:scaleX(1.0360);transform-origin:0 0;">Outbound traffic per</div>
<div class="t" style="left:606.93px;top:2086.90px;font-size:16px;font-weight:700;color:#1d1e24;transform:scaleX(1.0360);transform-origin:0 0;">second</div>
<div class="t" style="left:606.58px;top:2109.60px;font-size:14px;color:#343741;transform:scaleX(1.0780);transform-origin:0 0;">(Over the last 30 seconds)</div>
<div class="t" style="left:706.15px;top:2179.60px;font-size:14px;color:#343741;transform:scaleX(1.0650);transform-origin:0 0;">Total transferred 63.76GB</div>
<div class="t" style="left:809.49px;top:2195.55px;font-size:37px;font-weight:700;color:#2b2e36;transform:scaleX(1.0548);transform-origin:0 0;">N/A</div>
<div class="a" style="left:893.62px;top:2057.00px;width:287.88px;height:188.00px;background:#fff;border:1px solid #d3dae6;border-radius:6px;box-sizing:border-box;"></div>
<div class="t" style="left:902.80px;top:2067.90px;font-size:16px;font-weight:700;color:#1d1e24;transform:scaleX(1.0360);transform-origin:0 0;">Out packetloss</div>
<div class="t" style="left:1157.92px;top:2205.75px;font-size:25px;font-weight:700;color:#2b2e36;transform:scaleX(1.0492);transform-origin:0 0;">k</div>
<div class="t" style="left:1091.37px;top:2195.55px;font-size:37px;font-weight:700;color:#2b2e36;transform:scaleX(0.9272);transform-origin:0 0;">3.81</div>
<div class="a" style="left:6.00px;top:2253.00px;width:1175.50px;height:328.00px;background:#fff;border:1px solid #d3dae6;border-radius:6px;box-sizing:border-box;"></div>
<div class="a" style="left:15.00px;top:2262.00px;width:1157.00px;height:1.00px;background:#d3dae6;"></div>
<div class="t" style="left:20.63px;top:2271.60px;font-size:14px;font-weight:700;color:#1a1c21;transform:scaleX(1.0754);transform-origin:0 0;">Interface</div>
<div class="t" style="left:894.36px;top:2271.60px;font-size:14px;font-weight:700;color:#1a1c21;transform:scaleX(1.0468);transform-origin:0 0;">Incoming Traffic</div>
<div class="t" style="left:1034.38px;top:2271.60px;font-size:14px;font-weight:700;color:#1a1c21;transform:scaleX(1.0373);transform-origin:0 0;">Outgoing Traffic</div>
<div class="a" style="left:15.00px;top:2292.00px;width:1157.00px;height:2.00px;background:#1a1c21;"></div>
<div class="a" style="left:890.30px;top:2294.00px;width:138.40px;height:35.00px;background:#3d8273;"></div>
<div class="t" style="left:962.93px;top:2305.10px;font-size:14px;color:#000;transform:scaleX(1.0600);transform-origin:0 0;">30.56GB</div>
<div class="a" style="left:1028.70px;top:2294.00px;width:143.30px;height:35.00px;background:#87b3a7;"></div>
<div class="t" style="left:1106.23px;top:2305.10px;font-size:14px;color:#000;transform:scaleX(1.0600);transform-origin:0 0;">30.56GB</div>
<div class="a" style="left:15.00px;top:2329.00px;width:1157.00px;height:1.00px;background:#d3dae6;"></div>
<div class="t" style="left:21.38px;top:2305.10px;font-size:14px;color:#343741;transform:scaleX(1.1337);transform-origin:0 0;">lo0</div>
<div class="a" style="left:890.30px;top:2330.00px;width:138.40px;height:35.00px;background:#d5e5df;"></div>
<div class="t" style="left:964.52px;top:2341.10px;font-size:14px;color:#000;transform:scaleX(1.0600);transform-origin:0 0;">14.53KB</div>
<div class="a" style="left:1028.70px;top:2330.00px;width:143.30px;height:35.00px;background:#3d8273;"></div>
<div class="t" style="left:1106.23px;top:2341.10px;font-size:14px;color:#000;transform:scaleX(1.0600);transform-origin:0 0;">63.76GB</div>
<div class="a" style="left:15.00px;top:2365.00px;width:1157.00px;height:1.00px;background:#d3dae6;"></div>
<div class="t" style="left:21.75px;top:2341.10px;font-size:14px;color:#343741;transform:scaleX(1.0811);transform-origin:0 0;">en0</div>
<div class="a" style="left:890.30px;top:2366.00px;width:138.40px;height:35.00px;background:#d5e5df;"></div>
<div class="t" style="left:982.75px;top:2377.10px;font-size:14px;color:#000;transform:scaleX(1.0600);transform-origin:0 0;">0.00B</div>
<div class="a" style="left:1028.70px;top:2366.00px;width:143.30px;height:35.00px;background:#d5e5df;"></div>
<div class="t" style="left:1126.05px;top:2377.10px;font-size:14px;color:#000;transform:scaleX(1.0600);transform-origin:0 0;">0.00B</div>
<div class="a" style="left:15.00px;top:2401.00px;width:1157.00px;height:1.00px;background:#d3dae6;"></div>
<div class="t" style="left:21.75px;top:2377.10px;font-size:14px;color:#343741;transform:scaleX(1.0876);transform-origin:0 0;">anpi0</div>
<div class="a" style="left:890.30px;top:2402.00px;width:138.40px;height:35.00px;background:#d5e5df;"></div>
<div class="t" style="left:982.75px;top:2413.10px;font-size:14px;color:#000;transform:scaleX(1.0600);transform-origin:0 0;">0.00B</div>
<div class="a" style="left:1028.70px;top:2402.00px;width:143.30px;height:35.00px;background:#d5e5df;"></div>
<div class="t" style="left:1126.05px;top:2413.10px;font-size:14px;color:#000;transform:scaleX(1.0600);transform-origin:0 0;">0.00B</div>
<div class="a" style="left:15.00px;top:2437.00px;width:1157.00px;height:1.00px;background:#d3dae6;"></div>
<div class="t" style="left:21.75px;top:2413.10px;font-size:14px;color:#343741;transform:scaleX(1.0788);transform-origin:0 0;">anpi1</div>
<div class="a" style="left:890.30px;top:2438.00px;width:138.40px;height:35.00px;background:#d5e5df;"></div>
<div class="t" style="left:982.75px;top:2449.10px;font-size:14px;color:#000;transform:scaleX(1.0600);transform-origin:0 0;">0.00B</div>
<div class="a" style="left:1028.70px;top:2438.00px;width:143.30px;height:35.00px;background:#d5e5df;"></div>
<div class="t" style="left:1105.38px;top:2449.10px;font-size:14px;color:#000;transform:scaleX(1.0600);transform-origin:0 0;">16.35MB</div>
<div class="a" style="left:15.00px;top:2473.00px;width:1157.00px;height:1.00px;background:#d3dae6;"></div>
<div class="t" style="left:21.75px;top:2449.10px;font-size:14px;color:#343741;transform:scaleX(1.0905);transform-origin:0 0;">ap1</div>
<div class="a" style="left:890.30px;top:2474.00px;width:138.40px;height:35.00px;background:#d5e5df;"></div>
<div class="t" style="left:982.75px;top:2485.10px;font-size:14px;color:#000;transform:scaleX(1.0600);transform-origin:0 0;">0.00B</div>
<div class="a" style="left:1028.70px;top:2474.00px;width:143.30px;height:35.00px;background:#d5e5df;"></div>
<div class="t" style="left:1099.55px;top:2485.10px;font-size:14px;color:#000;transform:scaleX(1.0600);transform-origin:0 0;">451.79KB</div>
<div class="a" style="left:15.00px;top:2509.00px;width:1157.00px;height:1.00px;background:#d3dae6;"></div>
<div class="t" style="left:21.73px;top:2485.10px;font-size:14px;color:#343741;transform:scaleX(1.1130);transform-origin:0 0;">awdl0</div>
<div class="a" style="left:890.30px;top:2510.00px;width:138.40px;height:35.00px;background:#d5e5df;"></div>
<div class="t" style="left:982.75px;top:2521.10px;font-size:14px;color:#000;transform:scaleX(1.0600);transform-origin:0 0;">0.00B</div>
<div class="a" style="left:1028.70px;top:2510.00px;width:143.30px;height:35.00px;background:#d5e5df;"></div>
<div class="t" style="left:1126.05px;top:2521.10px;font-size:14px;color:#000;transform:scaleX(1.0600);transform-origin:0 0;">0.00B</div>
<div class="a" style="left:15.00px;top:2545.00px;width:1157.00px;height:1.00px;background:#d3dae6;"></div>
<div class="t" style="left:21.76px;top:2521.10px;font-size:14px;color:#343741;transform:scaleX(1.0700);transform-origin:0 0;">awdl1</div>
<div class="a" style="left:548.44px;top:741.00px;width:928.94px;height:412.00px;background:#fff;border:1px solid #d3dae6;border-radius:6px;box-sizing:border-box;"></div>
<div class="a" style="left:1485.38px;top:741.00px;width:879.62px;height:412.00px;background:#fff;border:1px solid #d3dae6;border-radius:6px;box-sizing:border-box;"></div>
<div class="a" style="left:548.44px;top:1245.00px;width:1816.56px;height:328.00px;background:#fff;border:1px solid #d3dae6;border-radius:6px;box-sizing:border-box;"></div>
<div class="a" style="left:548.44px;top:1665.00px;width:1816.56px;height:300.00px;background:#fff;border:1px solid #d3dae6;border-radius:6px;box-sizing:border-box;"></div>
<div class="a" style="left:1189.50px;top:2057.00px;width:1175.50px;height:300.00px;background:#fff;border:1px solid #d3dae6;border-radius:6px;box-sizing:border-box;"></div>
<div class="a" style="left:1189.50px;top:2365.00px;width:1175.50px;height:160.00px;background:#fff;border:1px solid #d3dae6;border-radius:6px;box-sizing:border-box;"></div><svg class="a" style="left:0;top:0" width="2374" height="2518" viewBox="0 0 2374 2518"><line x1="620.8" y1="1110.0" x2="1363.5" y2="1110.0" stroke="#e6e9ef" stroke-width="1" stroke-dasharray="4 4"/>
<line x1="620.8" y1="1045.8" x2="1363.5" y2="1045.8" stroke="#e6e9ef" stroke-width="1" stroke-dasharray="4 4"/>
<line x1="620.8" y1="981.6" x2="1363.5" y2="981.6" stroke="#e6e9ef" stroke-width="1" stroke-dasharray="4 4"/>
<line x1="620.8" y1="917.4" x2="1363.5" y2="917.4" stroke="#e6e9ef" stroke-width="1" stroke-dasharray="4 4"/>
<line x1="620.8" y1="853.2" x2="1363.5" y2="853.2" stroke="#e6e9ef" stroke-width="1" stroke-dasharray="4 4"/>
<line x1="620.8" y1="789.0" x2="1363.5" y2="789.0" stroke="#e6e9ef" stroke-width="1" stroke-dasharray="4 4"/>
<line x1="620.8" y1="789" x2="620.8" y2="1110" stroke="#e4e7ed" stroke-width="1"/>
<line x1="620.8" y1="1110" x2="1363.5" y2="1110" stroke="#e4e7ed" stroke-width="1"/>
<rect x="631.79" y="854.8" width="10.6" height="255.2" fill="#5e8bb9" stroke="rgba(255,255,255,0.6)" stroke-width="0.5"/>
<rect x="632.04" y="961.6" width="10.1" height="148.1" fill="#5ba68c"/>
<rect x="642.39" y="899.2" width="10.6" height="210.8" fill="#5e8bb9" stroke="rgba(255,255,255,0.6)" stroke-width="0.5"/>
<rect x="642.64" y="974.6" width="10.1" height="135.2" fill="#5ba68c"/>
<rect x="674.20" y="900.4" width="10.6" height="209.6" fill="#5e8bb9" stroke="rgba(255,255,255,0.6)" stroke-width="0.5"/>
<rect x="674.45" y="990.2" width="10.1" height="119.6" fill="#5ba68c"/>
<rect x="684.80" y="1015.2" width="10.6" height="94.8" fill="#5e8bb9" stroke="rgba(255,255,255,0.6)" stroke-width="0.5"/>
<rect x="685.05" y="1049.5" width="10.1" height="60.3" fill="#5ba68c"/>
<rect x="695.41" y="971.5" width="10.6" height="138.5" fill="#5e8bb9" stroke="rgba(255,255,255,0.6)" stroke-width="0.5"/>
<rect x="695.66" y="1028.6" width="10.1" height="81.1" fill="#5ba68c"/>
<rect x="737.82" y="851.4" width="10.6" height="258.6" fill="#5e8bb9" stroke="rgba(255,255,255,0.6)" stroke-width="0.5"/>
<rect x="738.07" y="959.7" width="10.1" height="150.0" fill="#5ba68c"/>
<rect x="769.63" y="933.5" width="10.6" height="176.5" fill="#5e8bb9" stroke="rgba(255,255,255,0.6)" stroke-width="0.5"/>
<rect x="769.88" y="997.2" width="10.1" height="112.6" fill="#5ba68c"/>
<rect x="780.23" y="964.7" width="10.6" height="145.3" fill="#5e8bb9" stroke="rgba(255,255,255,0.6)" stroke-width="0.5"/>
<rect x="780.48" y="1016.4" width="10.1" height="93.4" fill="#5ba68c"/>
<rect x="790.84" y="987.6" width="10.6" height="122.4" fill="#5e8bb9" stroke="rgba(255,255,255,0.6)" stroke-width="0.5"/>
<rect x="791.09" y="1032.9" width="10.1" height="76.8" fill="#5ba68c"/>
<rect x="801.44" y="929.5" width="10.6" height="180.5" fill="#5e8bb9" stroke="rgba(255,255,255,0.6)" stroke-width="0.5"/>
<rect x="801.69" y="1000.5" width="10.1" height="109.2" fill="#5ba68c"/>
<rect x="812.04" y="880.5" width="10.6" height="229.5" fill="#5e8bb9" stroke="rgba(255,255,255,0.6)" stroke-width="0.5"/>
<rect x="812.29" y="960.2" width="10.1" height="149.6" fill="#5ba68c"/>
<rect x="822.65" y="933.5" width="10.6" height="176.5" fill="#5e8bb9" stroke="rgba(255,255,255,0.6)" stroke-width="0.5"/>
<rect x="822.90" y="1005.1" width="10.1" height="104.7" fill="#5ba68c"/>
<rect x="833.25" y="983.2" width="10.6" height="126.8" fill="#5e8bb9" stroke="rgba(255,255,255,0.6)" stroke-width="0.5"/>
<rect x="833.50" y="1028.6" width="10.1" height="81.1" fill="#5ba68c"/>
<rect x="843.85" y="973.6" width="10.6" height="136.4" fill="#5e8bb9" stroke="rgba(255,255,255,0.6)" stroke-width="0.5"/>
<rect x="844.10" y="1029.3" width="10.1" height="80.4" fill="#5ba68c"/>
<rect x="854.46" y="968.3" width="10.6" height="141.7" fill="#5e8bb9" stroke="rgba(255,255,255,0.6)" stroke-width="0.5"/>
<rect x="854.71" y="1030.3" width="10.1" height="79.5" fill="#5ba68c"/>
<rect x="865.06" y="993.6" width="10.6" height="116.4" fill="#5e8bb9" stroke="rgba(255,255,255,0.6)" stroke-width="0.5"/>
<rect x="865.31" y="1037.5" width="10.1" height="72.3" fill="#5ba68c"/>
<rect x="875.66" y="992.6" width="10.6" height="117.4" fill="#5e8bb9" stroke="rgba(255,255,255,0.6)" stroke-width="0.5"/>
<rect x="875.91" y="1038.2" width="10.1" height="71.5" fill="#5ba68c"/>
<rect x="886.27" y="972.4" width="10.6" height="137.6" fill="#5e8bb9" stroke="rgba(255,255,255,0.6)" stroke-width="0.5"/>
<rect x="886.52" y="1023.6" width="10.1" height="86.2" fill="#5ba68c"/>
<rect x="896.87" y="993.6" width="10.6" height="116.4" fill="#5e8bb9" stroke="rgba(255,255,255,0.6)" stroke-width="0.5"/>
<rect x="897.12" y="1032.5" width="10.1" height="77.3" fill="#5ba68c"/>
<rect x="907.47" y="991.6" width="10.6" height="118.4" fill="#5e8bb9" stroke="rgba(255,255,255,0.6)" stroke-width="0.5"/>
<rect x="907.72" y="1034.4" width="10.1" height="75.4" fill="#5ba68c"/>
<rect x="918.08" y="990.4" width="10.6" height="119.6" fill="#5e8bb9" stroke="rgba(255,255,255,0.6)" stroke-width="0.5"/>
<rect x="918.33" y="1031.3" width="10.1" height="78.5" fill="#5ba68c"/>
<rect x="928.68" y="984.0" width="10.6" height="126.0" fill="#5e8bb9" stroke="rgba(255,255,255,0.6)" stroke-width="0.5"/>
<rect x="928.93" y="1027.2" width="10.1" height="82.6" fill="#5ba68c"/>
<rect x="939.28" y="985.9" width="10.6" height="124.1" fill="#5e8bb9" stroke="rgba(255,255,255,0.6)" stroke-width="0.5"/>
<rect x="939.53" y="1032.5" width="10.1" height="77.3" fill="#5ba68c"/>
<rect x="949.89" y="992.4" width="10.6" height="117.6" fill="#5e8bb9" stroke="rgba(255,255,255,0.6)" stroke-width="0.5"/>
<rect x="950.14" y="1038.2" width="10.1" height="71.5" fill="#5ba68c"/>
<rect x="960.49" y="1004.8" width="10.6" height="105.2" fill="#5e8bb9" stroke="rgba(255,255,255,0.6)" stroke-width="0.5"/>
<rect x="960.74" y="1044.2" width="10.1" height="65.5" fill="#5ba68c"/>
<rect x="971.09" y="986.8" width="10.6" height="123.2" fill="#5e8bb9" stroke="rgba(255,255,255,0.6)" stroke-width="0.5"/>
<rect x="971.34" y="1035.6" width="10.1" height="74.2" fill="#5ba68c"/>
<rect x="981.70" y="989.2" width="10.6" height="120.8" fill="#5e8bb9" stroke="rgba(255,255,255,0.6)" stroke-width="0.5"/>
<rect x="981.95" y="1034.9" width="10.1" height="74.9" fill="#5ba68c"/>
<rect x="992.30" y="984.8" width="10.6" height="125.2" fill="#5e8bb9" stroke="rgba(255,255,255,0.6)" stroke-width="0.5"/>
<rect x="992.55" y="1033.5" width="10.1" height="76.3" fill="#5ba68c"/>
<rect x="1002.90" y="985.3" width="10.6" height="124.7" fill="#5e8bb9" stroke="rgba(255,255,255,0.6)" stroke-width="0.5"/>
<rect x="1003.15" y="1033.5" width="10.1" height="76.3" fill="#5ba68c"/>
<rect x="1013.51" y="982.3" width="10.6" height="127.7" fill="#5e8bb9" stroke="rgba(255,255,255,0.6)" stroke-width="0.5"/>
<rect x="1013.76" y="1046.5" width="10.1" height="63.2" fill="#5ba68c"/>
<rect x="1024.11" y="983.5" width="10.6" height="126.5" fill="#5e8bb9" stroke="rgba(255,255,255,0.6)" stroke-width="0.5"/>
<rect x="1024.36" y="1047.3" width="10.1" height="62.5" fill="#5ba68c"/>
<rect x="1034.71" y="1002.7" width="10.6" height="107.3" fill="#5e8bb9" stroke="rgba(255,255,255,0.6)" stroke-width="0.5"/>
<rect x="1034.96" y="1041.4" width="10.1" height="68.4" fill="#5ba68c"/>
<rect x="1045.32" y="999.4" width="10.6" height="110.6" fill="#5e8bb9" stroke="rgba(255,255,255,0.6)" stroke-width="0.5"/>
<rect x="1045.57" y="1038.3" width="10.1" height="71.4" fill="#5ba68c"/>
<rect x="1055.92" y="991.5" width="10.6" height="118.5" fill="#5e8bb9" stroke="rgba(255,255,255,0.6)" stroke-width="0.5"/>
<rect x="1056.17" y="1033.7" width="10.1" height="76.0" fill="#5ba68c"/>
<rect x="1066.52" y="994.3" width="10.6" height="115.7" fill="#5e8bb9" stroke="rgba(255,255,255,0.6)" stroke-width="0.5"/>
<rect x="1066.77" y="1035.8" width="10.1" height="74.0" fill="#5ba68c"/>
<rect x="1077.13" y="993.8" width="10.6" height="116.2" fill="#5e8bb9" stroke="rgba(255,255,255,0.6)" stroke-width="0.5"/>
<rect x="1077.38" y="1035.5" width="10.1" height="74.2" fill="#5ba68c"/>
<rect x="1087.73" y="989.4" width="10.6" height="120.6" fill="#5e8bb9" stroke="rgba(255,255,255,0.6)" stroke-width="0.5"/>
<rect x="1087.98" y="1035.5" width="10.1" height="74.2" fill="#5ba68c"/>
<rect x="1098.33" y="988.4" width="10.6" height="121.6" fill="#5e8bb9" stroke="rgba(255,255,255,0.6)" stroke-width="0.5"/>
<rect x="1098.58" y="1032.2" width="10.1" height="77.6" fill="#5ba68c"/>
<rect x="1108.94" y="980.5" width="10.6" height="129.5" fill="#5e8bb9" stroke="rgba(255,255,255,0.6)" stroke-width="0.5"/>
<rect x="1109.19" y="1027.3" width="10.1" height="82.4" fill="#5ba68c"/>
<rect x="1119.54" y="1001.5" width="10.6" height="108.5" fill="#5e8bb9" stroke="rgba(255,255,255,0.6)" stroke-width="0.5"/>
<rect x="1119.79" y="1046.5" width="10.1" height="63.2" fill="#5ba68c"/>
<rect x="1130.14" y="994.3" width="10.6" height="115.7" fill="#5e8bb9" stroke="rgba(255,255,255,0.6)" stroke-width="0.5"/>
<rect x="1130.39" y="1038.3" width="10.1" height="71.4" fill="#5ba68c"/>
<rect x="1140.75" y="977.9" width="10.6" height="132.1" fill="#5e8bb9" stroke="rgba(255,255,255,0.6)" stroke-width="0.5"/>
<rect x="1141.00" y="1026.6" width="10.1" height="83.2" fill="#5ba68c"/>
<rect x="1151.35" y="961.8" width="10.6" height="148.2" fill="#5e8bb9" stroke="rgba(255,255,255,0.6)" stroke-width="0.5"/>
<rect x="1151.60" y="1010.4" width="10.1" height="99.3" fill="#5ba68c"/>
<rect x="1161.95" y="969.5" width="10.6" height="140.5" fill="#5e8bb9" stroke="rgba(255,255,255,0.6)" stroke-width="0.5"/>
<rect x="1162.20" y="1013.8" width="10.1" height="96.0" fill="#5ba68c"/>
<rect x="1172.56" y="964.9" width="10.6" height="145.1" fill="#5e8bb9" stroke="rgba(255,255,255,0.6)" stroke-width="0.5"/>
<rect x="1172.81" y="1010.4" width="10.1" height="99.3" fill="#5ba68c"/>
<rect x="1183.16" y="934.1" width="10.6" height="175.9" fill="#5e8bb9" stroke="rgba(255,255,255,0.6)" stroke-width="0.5"/>
<rect x="1183.41" y="1010.4" width="10.1" height="99.3" fill="#5ba68c"/>
<rect x="1193.76" y="918.8" width="10.6" height="191.2" fill="#5e8bb9" stroke="rgba(255,255,255,0.6)" stroke-width="0.5"/>
<rect x="1194.01" y="988.2" width="10.1" height="121.6" fill="#5ba68c"/>
<rect x="1204.37" y="957.7" width="10.6" height="152.3" fill="#5e8bb9" stroke="rgba(255,255,255,0.6)" stroke-width="0.5"/>
<rect x="1204.62" y="1006.3" width="10.1" height="103.4" fill="#5ba68c"/>
<rect x="1214.97" y="1009.1" width="10.6" height="100.9" fill="#5e8bb9" stroke="rgba(255,255,255,0.6)" stroke-width="0.5"/>
<rect x="1215.22" y="1047.0" width="10.1" height="62.7" fill="#5ba68c"/>
<rect x="1225.57" y="1026.3" width="10.6" height="83.7" fill="#5e8bb9" stroke="rgba(255,255,255,0.6)" stroke-width="0.5"/>
<rect x="1225.82" y="1056.0" width="10.1" height="53.8" fill="#5ba68c"/>
<rect x="1236.18" y="896.3" width="10.6" height="213.7" fill="#5e8bb9" stroke="rgba(255,255,255,0.6)" stroke-width="0.5"/>
<rect x="1236.43" y="986.4" width="10.1" height="123.4" fill="#5ba68c"/>
<rect x="1246.78" y="946.4" width="10.6" height="163.6" fill="#5e8bb9" stroke="rgba(255,255,255,0.6)" stroke-width="0.5"/>
<rect x="1247.03" y="1002.5" width="10.1" height="107.3" fill="#5ba68c"/>
<rect x="1257.38" y="951.0" width="10.6" height="159.0" fill="#5e8bb9" stroke="rgba(255,255,255,0.6)" stroke-width="0.5"/>
<rect x="1257.63" y="1001.5" width="10.1" height="108.3" fill="#5ba68c"/>
<rect x="1267.99" y="947.7" width="10.6" height="162.3" fill="#5e8bb9" stroke="rgba(255,255,255,0.6)" stroke-width="0.5"/>
<rect x="1268.24" y="1000.7" width="10.1" height="109.1" fill="#5ba68c"/>
<rect x="1278.59" y="961.3" width="10.6" height="148.7" fill="#5e8bb9" stroke="rgba(255,255,255,0.6)" stroke-width="0.5"/>
<rect x="1278.84" y="1009.7" width="10.1" height="100.1" fill="#5ba68c"/>
<rect x="1289.19" y="951.0" width="10.6" height="159.0" fill="#5e8bb9" stroke="rgba(255,255,255,0.6)" stroke-width="0.5"/>
<rect x="1289.44" y="1004.3" width="10.1" height="105.5" fill="#5ba68c"/>
<rect x="1310.40" y="893.4" width="10.6" height="216.6" fill="#5e8bb9" stroke="rgba(255,255,255,0.6)" stroke-width="0.5"/>
<rect x="1310.65" y="1026.6" width="10.1" height="83.2" fill="#5ba68c"/>
<rect x="1331.61" y="853.5" width="10.6" height="256.5" fill="#5e8bb9" stroke="rgba(255,255,255,0.6)" stroke-width="0.5"/>
<rect x="1331.86" y="964.3" width="10.1" height="145.4" fill="#5ba68c"/>
<line x1="674.2" y1="789.0" x2="674.2" y2="1122.0" stroke="#aeb3bb" stroke-width="1"/>
<line x1="737.8" y1="789.0" x2="737.8" y2="1122.0" stroke="#aeb3bb" stroke-width="1"/>
<line x1="801.4" y1="789.0" x2="801.4" y2="1122.0" stroke="#aeb3bb" stroke-width="1"/>
<line x1="865.1" y1="789.0" x2="865.1" y2="1122.0" stroke="#aeb3bb" stroke-width="1"/>
<line x1="928.7" y1="789.0" x2="928.7" y2="1122.0" stroke="#aeb3bb" stroke-width="1"/>
<line x1="992.3" y1="789.0" x2="992.3" y2="1122.0" stroke="#aeb3bb" stroke-width="1"/>
<line x1="1055.9" y1="789.0" x2="1055.9" y2="1122.0" stroke="#aeb3bb" stroke-width="1"/>
<line x1="1119.5" y1="789.0" x2="1119.5" y2="1122.0" stroke="#aeb3bb" stroke-width="1"/>
<line x1="1183.2" y1="789.0" x2="1183.2" y2="1122.0" stroke="#aeb3bb" stroke-width="1"/>
<line x1="1246.8" y1="789.0" x2="1246.8" y2="1122.0" stroke="#aeb3bb" stroke-width="1"/>
<line x1="1310.4" y1="789.0" x2="1310.4" y2="1122.0" stroke="#aeb3bb" stroke-width="1"/>
<line x1="1537.0" y1="1109.3" x2="2266.8" y2="1109.3" stroke="#e6e9ef" stroke-width="1" stroke-dasharray="4 4"/>
<line x1="1537.0" y1="1029.2" x2="2266.8" y2="1029.2" stroke="#e6e9ef" stroke-width="1" stroke-dasharray="4 4"/>
<line x1="1537.0" y1="949.0" x2="2266.8" y2="949.0" stroke="#e6e9ef" stroke-width="1" stroke-dasharray="4 4"/>
<line x1="1537.0" y1="868.9" x2="2266.8" y2="868.9" stroke="#e6e9ef" stroke-width="1" stroke-dasharray="4 4"/>
<line x1="1537.0" y1="788.8" x2="2266.8" y2="788.8" stroke="#e6e9ef" stroke-width="1" stroke-dasharray="4 4"/>
<rect x="1535" y="788.8" width="3" height="320.5" fill="#dfe2e8"/>
<rect x="2265.8" y="788.8" width="3" height="320.5" fill="#dfe2e8"/>
<line x1="1537" y1="1109.3" x2="2266.8" y2="1109.3" stroke="#e4e7ed" stroke-width="1"/>
<line x1="1587.4" y1="788.8" x2="1587.4" y2="1121.3" stroke="#aeb3bb" stroke-width="1"/>
<line x1="1650.2" y1="788.8" x2="1650.2" y2="1121.3" stroke="#aeb3bb" stroke-width="1"/>
<line x1="1713.0" y1="788.8" x2="1713.0" y2="1121.3" stroke="#aeb3bb" stroke-width="1"/>
<line x1="1775.9" y1="788.8" x2="1775.9" y2="1121.3" stroke="#aeb3bb" stroke-width="1"/>
<line x1="1838.7" y1="788.8" x2="1838.7" y2="1121.3" stroke="#aeb3bb" stroke-width="1"/>
<line x1="1901.5" y1="788.8" x2="1901.5" y2="1121.3" stroke="#aeb3bb" stroke-width="1"/>
<line x1="1964.3" y1="788.8" x2="1964.3" y2="1121.3" stroke="#aeb3bb" stroke-width="1"/>
<line x1="2027.1" y1="788.8" x2="2027.1" y2="1121.3" stroke="#aeb3bb" stroke-width="1"/>
<line x1="2090.0" y1="788.8" x2="2090.0" y2="1121.3" stroke="#aeb3bb" stroke-width="1"/>
<line x1="2152.8" y1="788.8" x2="2152.8" y2="1121.3" stroke="#aeb3bb" stroke-width="1"/>
<line x1="2215.6" y1="788.8" x2="2215.6" y2="1121.3" stroke="#aeb3bb" stroke-width="1"/>
<path d="M1681.6 1013.0 L1692.1 1028.3 L1702.6 1044.7 L1713.0 1042.4 L1723.5 1033.0 L1734.0 1035.3 L1744.5 1044.7 L1754.9 1052.9 L1765.4 1058.8 L1775.9 1064.7 L1786.3 1069.4 L1796.8 1066.3 L1807.3 1064.7 L1817.7 1066.3 L1828.2 1067.7 L1838.7 1069.4 L1849.2 1069.4 L1859.6 1068.2 L1870.1 1068.2 L1880.6 1063.0 L1891.0 1056.0 L1901.5 1061.1 L1912.0 1063.5 L1922.4 1063.0 L1932.9 1062.3 L1943.4 1068.2 L1953.8 1068.7 L1964.3 1067.0 L1974.8 1065.4 L1985.3 1064.7 L1995.7 1065.8 L2006.2 1068.2 L2016.7 1070.5 L2027.1 1072.9 L2037.6 1076.4 L2048.1 1070.5 L2058.6 1066.3 L2069.0 1070.5 L2079.5 1069.4 L2090.0 1065.8 L2100.4 1061.1 L2110.9 1058.3 L2121.4 1062.3 L2131.8 1068.2 L2142.3 1056.5 L2152.8 1052.9 L2163.2 1058.8 L2173.7 1062.3 L2184.2 1060.7 L2194.7 1060.0" fill="none" stroke="#aacfc2" stroke-width="2" stroke-linejoin="round"/>
<path d="M1681.6 1014.2 L1692.1 1041.2 L1702.6 1058.8 L1713.0 1035.3 L1723.5 1025.9 L1734.0 1031.8 L1744.5 1052.9 L1754.9 1060.0 L1765.4 1064.0 L1775.9 1069.4 L1786.3 1070.5 L1796.8 1062.3 L1807.3 1063.5 L1817.7 1070.5 L1828.2 1066.3 L1838.7 1070.5 L1849.2 1067.7 L1859.6 1067.7 L1870.1 1067.7 L1880.6 1055.3 L1891.0 1050.6 L1901.5 1060.7 L1912.0 1064.7 L1922.4 1062.3 L1932.9 1060.0 L1943.4 1072.9 L1953.8 1069.4 L1964.3 1065.8 L1974.8 1063.5 L1985.3 1062.3 L1995.7 1066.3 L2006.2 1069.4 L2016.7 1071.7 L2027.1 1074.1 L2037.6 1076.4 L2048.1 1064.7 L2058.6 1061.1 L2069.0 1071.7 L2079.5 1068.2 L2090.0 1063.5 L2100.4 1054.1 L2110.9 1056.5 L2121.4 1067.0 L2131.8 1075.2 L2142.3 1045.9 L2152.8 1044.2 L2163.2 1060.0 L2173.7 1063.0 L2184.2 1056.5 L2194.7 1058.8" fill="none" stroke="#6fa997" stroke-width="2" stroke-linejoin="round"/>
<path d="M1681.6 1014.2 L1692.1 1051.8 L1702.6 1064.7 L1713.0 1021.7 L1723.5 1030.6 L1734.0 1036.5 L1744.5 1063.0 L1754.9 1062.3 L1765.4 1062.3 L1775.9 1071.0 L1786.3 1070.5 L1796.8 1060.7 L1807.3 1062.3 L1817.7 1074.1 L1828.2 1064.7 L1838.7 1072.4 L1849.2 1066.3 L1859.6 1068.2 L1870.1 1066.3 L1880.6 1050.6 L1891.0 1054.1 L1901.5 1060.0 L1912.0 1066.3 L1922.4 1062.3 L1932.9 1061.1 L1943.4 1074.8 L1953.8 1070.5 L1964.3 1063.5 L1974.8 1064.0 L1985.3 1062.3 L1995.7 1065.8 L2006.2 1070.5 L2016.7 1074.1 L2027.1 1076.4 L2037.6 1075.2 L2048.1 1058.8 L2058.6 1066.3 L2069.0 1072.9 L2079.5 1067.0 L2090.0 1060.7 L2100.4 1053.6 L2110.9 1056.5 L2121.4 1070.5 L2131.8 1081.8 L2142.3 990.2 L2152.8 1044.2 L2163.2 1063.5 L2173.7 1064.7 L2184.2 1052.9 L2194.7 1056.9" fill="none" stroke="#3a8270" stroke-width="2" stroke-linejoin="round"/>
<path d="M1587.4 1004.8 L1597.9 1010.7 L1608.3 1018.9" fill="none" stroke="#aacfc2" stroke-width="2"/>
<path d="M1587.4 991.9 L1597.9 1011.8 L1608.3 1029.5" fill="none" stroke="#6fa997" stroke-width="2"/>
<path d="M1587.4 964.9 L1597.9 1047.1 L1608.3 1074.1" fill="none" stroke="#3a8270" stroke-width="2"/>
<path d="M1546.5 1003.5 L1552.5 1007.5 L1549 1011 L1556 1013.5" fill="none" stroke="#3a8270" stroke-width="1.6"/>
<path d="M1546 1011 L1556 1005" fill="none" stroke="#aacfc2" stroke-width="1.6"/>
<circle cx="1650.2" cy="1019.4" r="4.3" fill="#fff" stroke="#aacfc2" stroke-width="1.5"/>
<circle cx="1650.2" cy="1031.3" r="4.3" fill="#fff" stroke="#6fa997" stroke-width="1.5"/>
<circle cx="1650.2" cy="1072.9" r="4.3" fill="#fff" stroke="#3a8270" stroke-width="1.5"/>
<circle cx="2215.6" cy="867.0" r="4.3" fill="#fff" stroke="#3a8270" stroke-width="1.5"/>
<circle cx="2215.6" cy="1010.0" r="4.3" fill="#fff" stroke="#6fa997" stroke-width="1.5"/>
<circle cx="2215.6" cy="1041.7" r="4.3" fill="#fff" stroke="#aacfc2" stroke-width="1.5"/>
<circle cx="2236.5" cy="898.2" r="4.3" fill="#fff" stroke="#3a8270" stroke-width="1.5"/>
<circle cx="2236.5" cy="1011.8" r="4.3" fill="#fff" stroke="#6fa997" stroke-width="1.5"/>
<circle cx="2236.5" cy="1041.9" r="4.3" fill="#fff" stroke="#aacfc2" stroke-width="1.5"/>
<line x1="624.7" y1="1530.0" x2="2254.0" y2="1530.0" stroke="#e6e9ef" stroke-width="1" stroke-dasharray="4 4"/>
<line x1="624.7" y1="1470.8" x2="2254.0" y2="1470.8" stroke="#e6e9ef" stroke-width="1" stroke-dasharray="4 4"/>
<line x1="624.7" y1="1411.5" x2="2254.0" y2="1411.5" stroke="#e6e9ef" stroke-width="1" stroke-dasharray="4 4"/>
<line x1="624.7" y1="1352.2" x2="2254.0" y2="1352.2" stroke="#e6e9ef" stroke-width="1" stroke-dasharray="4 4"/>
<line x1="624.7" y1="1293.0" x2="2254.0" y2="1293.0" stroke="#e6e9ef" stroke-width="1" stroke-dasharray="4 4"/>
<line x1="624.7" y1="1293" x2="624.7" y2="1530" stroke="#e4e7ed"/>
<line x1="624.7" y1="1530" x2="2254" y2="1530" stroke="#e4e7ed"/>
<line x1="741.4" y1="1293.0" x2="741.4" y2="1542.0" stroke="#aeb3bb" stroke-width="1"/>
<line x1="881.1" y1="1293.0" x2="881.1" y2="1542.0" stroke="#aeb3bb" stroke-width="1"/>
<line x1="1020.7" y1="1293.0" x2="1020.7" y2="1542.0" stroke="#aeb3bb" stroke-width="1"/>
<line x1="1160.4" y1="1293.0" x2="1160.4" y2="1542.0" stroke="#aeb3bb" stroke-width="1"/>
<line x1="1300.0" y1="1293.0" x2="1300.0" y2="1542.0" stroke="#aeb3bb" stroke-width="1"/>
<line x1="1439.7" y1="1293.0" x2="1439.7" y2="1542.0" stroke="#aeb3bb" stroke-width="1"/>
<line x1="1579.4" y1="1293.0" x2="1579.4" y2="1542.0" stroke="#aeb3bb" stroke-width="1"/>
<line x1="1719.0" y1="1293.0" x2="1719.0" y2="1542.0" stroke="#aeb3bb" stroke-width="1"/>
<line x1="1858.7" y1="1293.0" x2="1858.7" y2="1542.0" stroke="#aeb3bb" stroke-width="1"/>
<line x1="1998.3" y1="1293.0" x2="1998.3" y2="1542.0" stroke="#aeb3bb" stroke-width="1"/>
<line x1="2138.0" y1="1293.0" x2="2138.0" y2="1542.0" stroke="#aeb3bb" stroke-width="1"/>
<path d="M648.4 1293.5 L671.4 1293.5 L671.4 1305.0 L671.4 1305.0 L648.4 1305.8 Z" fill="rgba(96,146,192,0.32)"/>
<path d="M648.4 1530 L648.4 1305.8 L671.4 1305.0 L671.4 1530 Z" fill="rgba(84,179,153,0.28)"/>
<path d="M648.4 1305.8 L671.4 1305.0" fill="none" stroke="#5a9f8a" stroke-width="2"/>
<line x1="648.4" y1="1294.5" x2="671.4" y2="1294.5" stroke="#6d97c4" stroke-width="1"/>
<line x1="648.4" y1="1293.5" x2="671.4" y2="1293.5" stroke="#d36086" stroke-width="1.3"/>
<path d="M741.4 1293.5 L787.8 1293.5 L787.8 1306.6 L787.8 1306.6 L760.0 1306.3 L741.4 1304.3 Z" fill="rgba(96,146,192,0.32)"/>
<path d="M741.4 1530 L741.4 1304.3 L760.0 1306.3 L787.8 1306.6 L787.8 1530 Z" fill="rgba(84,179,153,0.28)"/>
<path d="M741.4 1304.3 L760.0 1306.3 L787.8 1306.6" fill="none" stroke="#5a9f8a" stroke-width="2"/>
<line x1="741.4" y1="1294.5" x2="787.8" y2="1294.5" stroke="#6d97c4" stroke-width="1"/>
<line x1="741.4" y1="1293.5" x2="787.8" y2="1293.5" stroke="#d36086" stroke-width="1.3"/>
<path d="M951.1 1293.5 L2091.6 1293.5 L2091.6 1303.4 L2091.6 1303.4 L2069.7 1303.9 L2040.4 1302.4 L1998.5 1303.9 L1928.2 1305.8 L1884.3 1302.9 L1859.0 1303.4 L1801.4 1303.9 L1719.0 1304.9 L1606.3 1307.8 L1579.5 1306.8 L1557.5 1308.3 L1486.8 1308.8 L1579.2 1307.7 L1533.1 1308.8 L1487.0 1308.8 L1464.0 1305.0 L1439.8 1305.3 L1410.2 1305.7 L1371.8 1306.5 L1333.4 1306.1 L1299.9 1306.9 L1264.2 1307.3 L1229.6 1307.7 L1206.6 1309.6 L1183.5 1313.0 L1160.5 1306.9 L1137.4 1303.0 L1114.4 1304.2 L1091.3 1305.0 L1068.3 1303.8 L1045.2 1304.6 L1020.6 1303.8 L976.1 1303.4 L951.1 1304.6 Z" fill="rgba(96,146,192,0.32)"/>
<path d="M951.1 1530 L951.1 1304.6 L976.1 1303.4 L1020.6 1303.8 L1045.2 1304.6 L1068.3 1303.8 L1091.3 1305.0 L1114.4 1304.2 L1137.4 1303.0 L1160.5 1306.9 L1183.5 1313.0 L1206.6 1309.6 L1229.6 1307.7 L1264.2 1307.3 L1299.9 1306.9 L1333.4 1306.1 L1371.8 1306.5 L1410.2 1305.7 L1439.8 1305.3 L1464.0 1305.0 L1487.0 1308.8 L1533.1 1308.8 L1579.2 1307.7 L1486.8 1308.8 L1557.5 1308.3 L1579.5 1306.8 L1606.3 1307.8 L1719.0 1304.9 L1801.4 1303.9 L1859.0 1303.4 L1884.3 1302.9 L1928.2 1305.8 L1998.5 1303.9 L2040.4 1302.4 L2069.7 1303.9 L2091.6 1303.4 L2091.6 1530 Z" fill="rgba(84,179,153,0.28)"/>
<path d="M951.1 1304.6 L976.1 1303.4 L1020.6 1303.8 L1045.2 1304.6 L1068.3 1303.8 L1091.3 1305.0 L1114.4 1304.2 L1137.4 1303.0 L1160.5 1306.9 L1183.5 1313.0 L1206.6 1309.6 L1229.6 1307.7 L1264.2 1307.3 L1299.9 1306.9 L1333.4 1306.1 L1371.8 1306.5 L1410.2 1305.7 L1439.8 1305.3 L1464.0 1305.0 L1487.0 1308.8 L1533.1 1308.8 L1579.2 1307.7 L1486.8 1308.8 L1557.5 1308.3 L1579.5 1306.8 L1606.3 1307.8 L1719.0 1304.9 L1801.4 1303.9 L1859.0 1303.4 L1884.3 1302.9 L1928.2 1305.8 L1998.5 1303.9 L2040.4 1302.4 L2069.7 1303.9 L2091.6 1303.4" fill="none" stroke="#5a9f8a" stroke-width="2"/>
<line x1="951.1" y1="1294.5" x2="2091.6" y2="1294.5" stroke="#6d97c4" stroke-width="1"/>
<line x1="951.1" y1="1293.5" x2="2091.6" y2="1293.5" stroke="#d36086" stroke-width="1.3"/>
<path d="M2185.4 1293 L2208.8 1530 L2185.4 1530 Z" fill="rgba(84,179,153,0.28)"/>
<path d="M2185.4 1292.7 L2208.8 1529 L2231.7 1529" fill="none" stroke="#d36086" stroke-width="2"/>
<line x1="639.0" y1="1712.4" x2="2264.5" y2="1712.4" stroke="#e6e9ef" stroke-width="1" stroke-dasharray="4 4"/>
<line x1="639.0" y1="1749.9" x2="2264.5" y2="1749.9" stroke="#e6e9ef" stroke-width="1" stroke-dasharray="4 4"/>
<line x1="639.0" y1="1787.3" x2="2264.5" y2="1787.3" stroke="#e6e9ef" stroke-width="1" stroke-dasharray="4 4"/>
<line x1="639.0" y1="1824.8" x2="2264.5" y2="1824.8" stroke="#e6e9ef" stroke-width="1" stroke-dasharray="4 4"/>
<line x1="639.0" y1="1862.3" x2="2264.5" y2="1862.3" stroke="#e6e9ef" stroke-width="1" stroke-dasharray="4 4"/>
<line x1="639.0" y1="1899.8" x2="2264.5" y2="1899.8" stroke="#e6e9ef" stroke-width="1" stroke-dasharray="4 4"/>
<line x1="639" y1="1712.39015" x2="639" y2="1899.77255" stroke="#e4e7ed"/>
<line x1="639" y1="1899.77255" x2="2264.5" y2="1899.77255" stroke="#e4e7ed"/>
<line x1="747.5" y1="1712.4" x2="747.5" y2="1911.8" stroke="#aeb3bb" stroke-width="1"/>
<line x1="888.0" y1="1712.4" x2="888.0" y2="1911.8" stroke="#aeb3bb" stroke-width="1"/>
<line x1="1028.5" y1="1712.4" x2="1028.5" y2="1911.8" stroke="#aeb3bb" stroke-width="1"/>
<line x1="1169.0" y1="1712.4" x2="1169.0" y2="1911.8" stroke="#aeb3bb" stroke-width="1"/>
<line x1="1309.5" y1="1712.4" x2="1309.5" y2="1911.8" stroke="#aeb3bb" stroke-width="1"/>
<line x1="1450.0" y1="1712.4" x2="1450.0" y2="1911.8" stroke="#aeb3bb" stroke-width="1"/>
<line x1="1590.4" y1="1712.4" x2="1590.4" y2="1911.8" stroke="#aeb3bb" stroke-width="1"/>
<line x1="1730.9" y1="1712.4" x2="1730.9" y2="1911.8" stroke="#aeb3bb" stroke-width="1"/>
<line x1="1871.4" y1="1712.4" x2="1871.4" y2="1911.8" stroke="#aeb3bb" stroke-width="1"/>
<line x1="2011.9" y1="1712.4" x2="2011.9" y2="1911.8" stroke="#aeb3bb" stroke-width="1"/>
<line x1="2152.4" y1="1712.4" x2="2152.4" y2="1911.8" stroke="#aeb3bb" stroke-width="1"/>
<path d="M768.0 1862.3 L768.0 1789.6 L769.2 1836.9 L770.3 1773.9 L771.5 1831.4 L772.7 1854.4 L773.9 1859.5 L775.0 1860.4 L776.2 1859.2 L776.2 1862.3 Z" fill="rgba(84,179,153,0.25)"/>
<path d="M962.0 1862.3 L962.0 1859.9 L963.2 1792.5 L964.3 1837.9 L965.5 1860.6 L966.7 1860.7 L967.9 1824.5 L969.0 1849.1 L970.2 1858.8 L971.4 1859.4 L972.5 1861.4 L973.7 1859.9 L974.9 1859.6 L976.0 1860.3 L977.2 1860.2 L978.4 1859.6 L979.6 1780.3 L980.7 1833.6 L981.9 1861.1 L983.1 1859.4 L984.2 1839.8 L985.4 1854.4 L986.6 1859.3 L987.8 1860.4 L988.9 1858.9 L990.1 1860.9 L991.3 1859.9 L992.4 1860.5 L993.6 1824.3 L994.8 1837.1 L996.0 1859.4 L997.1 1860.4 L998.3 1838.6 L999.5 1860.9 L1000.6 1808.5 L1001.8 1830.6 L1003.0 1789.9 L1004.1 1850.0 L1005.3 1833.3 L1006.5 1805.3 L1007.7 1823.4 L1008.8 1861.1 L1010.0 1860.1 L1011.2 1843.2 L1012.3 1829.1 L1013.5 1846.9 L1014.7 1860.0 L1015.9 1860.9 L1017.0 1826.1 L1018.2 1859.5 L1019.4 1860.5 L1020.5 1860.8 L1021.7 1860.3 L1022.9 1858.9 L1024.0 1860.9 L1025.2 1859.8 L1026.4 1860.2 L1027.6 1861.3 L1028.7 1818.1 L1029.9 1846.8 L1031.1 1859.3 L1032.2 1860.4 L1033.4 1810.1 L1034.6 1859.0 L1035.8 1825.4 L1036.9 1860.6 L1038.1 1846.4 L1039.3 1860.1 L1040.4 1822.9 L1041.6 1860.8 L1042.8 1848.9 L1044.0 1861.2 L1045.1 1755.0 L1046.3 1824.7 L1047.5 1860.1 L1048.6 1861.0 L1049.8 1827.0 L1051.0 1826.8 L1052.1 1738.7 L1053.3 1860.0 L1054.5 1859.4 L1055.7 1859.4 L1056.8 1840.5 L1058.0 1859.6 L1059.2 1860.2 L1060.3 1859.1 L1061.5 1860.0 L1061.5 1862.3 Z" fill="rgba(84,179,153,0.25)"/>
<path d="M1090.5 1862.3 L1090.5 1729.1 L1091.7 1815.7 L1092.8 1861.1 L1094.0 1860.7 L1095.2 1860.7 L1096.4 1860.6 L1097.5 1861.5 L1098.7 1829.3 L1099.9 1843.7 L1101.0 1860.2 L1102.2 1860.1 L1103.4 1860.6 L1104.5 1859.8 L1105.7 1861.4 L1106.9 1859.5 L1108.1 1861.3 L1109.2 1825.2 L1110.4 1827.7 L1111.6 1827.7 L1112.7 1858.8 L1113.9 1858.9 L1115.1 1829.2 L1116.3 1819.7 L1117.4 1847.4 L1118.6 1860.4 L1119.8 1860.9 L1120.9 1859.4 L1122.1 1859.1 L1123.3 1764.3 L1124.5 1828.0 L1125.6 1859.1 L1126.8 1859.3 L1128.0 1860.1 L1129.1 1859.2 L1130.3 1859.6 L1131.5 1861.4 L1132.6 1861.2 L1133.8 1806.9 L1135.0 1842.9 L1136.2 1859.5 L1137.3 1859.7 L1138.5 1860.8 L1139.7 1859.5 L1140.8 1858.8 L1142.0 1860.2 L1143.2 1859.8 L1144.4 1861.1 L1145.5 1800.5 L1146.7 1800.5 L1147.9 1859.7 L1149.0 1758.8 L1150.2 1859.1 L1151.4 1858.9 L1152.5 1859.3 L1153.7 1754.7 L1154.9 1860.9 L1156.1 1860.1 L1157.2 1859.3 L1158.4 1859.6 L1159.6 1763.0 L1160.7 1827.5 L1161.9 1860.6 L1163.1 1861.5 L1164.3 1805.9 L1165.4 1842.6 L1166.6 1860.4 L1167.8 1860.5 L1168.9 1821.3 L1170.1 1860.7 L1171.3 1860.8 L1172.5 1860.5 L1173.6 1859.3 L1174.8 1858.9 L1176.0 1827.7 L1177.1 1859.4 L1178.3 1861.4 L1179.5 1860.2 L1180.6 1859.5 L1181.8 1859.7 L1183.0 1791.8 L1184.2 1837.6 L1185.3 1860.9 L1186.5 1860.3 L1187.7 1861.3 L1188.8 1860.9 L1190.0 1859.1 L1191.2 1860.4 L1192.4 1828.6 L1193.5 1850.5 L1194.7 1859.8 L1195.9 1860.8 L1197.0 1860.3 L1198.2 1826.6 L1199.4 1748.6 L1200.6 1822.5 L1201.7 1843.4 L1202.9 1846.0 L1204.1 1829.3 L1205.2 1839.5 L1206.4 1833.9 L1207.6 1797.9 L1208.7 1839.8 L1209.9 1830.3 L1211.1 1861.3 L1212.3 1860.4 L1213.4 1755.0 L1214.6 1858.9 L1215.8 1860.2 L1216.9 1858.9 L1218.1 1861.5 L1219.3 1860.4 L1220.5 1734.8 L1221.6 1860.4 L1222.8 1859.3 L1224.0 1715.0 L1225.1 1810.7 L1226.3 1859.4 L1227.5 1860.2 L1228.6 1824.5 L1229.8 1849.1 L1231.0 1858.8 L1232.2 1861.3 L1233.3 1859.1 L1234.5 1859.0 L1235.7 1858.9 L1236.8 1747.6 L1238.0 1822.2 L1239.2 1860.5 L1240.4 1858.9 L1241.5 1859.3 L1242.7 1861.4 L1243.9 1859.0 L1245.0 1859.0 L1246.2 1859.3 L1247.4 1861.4 L1248.6 1860.8 L1249.7 1860.6 L1250.9 1829.3 L1252.1 1860.6 L1253.2 1859.0 L1254.4 1861.4 L1255.6 1858.9 L1256.7 1860.8 L1257.9 1859.0 L1259.1 1827.7 L1260.3 1859.8 L1261.4 1860.5 L1262.6 1826.7 L1263.8 1849.8 L1264.9 1860.6 L1266.1 1858.8 L1267.3 1861.2 L1268.5 1860.3 L1269.6 1859.8 L1270.8 1859.2 L1272.0 1859.2 L1273.1 1860.5 L1274.3 1821.3 L1275.5 1847.9 L1276.6 1860.4 L1277.8 1860.9 L1279.0 1858.8 L1280.2 1859.3 L1281.3 1861.4 L1282.5 1861.0 L1283.7 1827.7 L1284.8 1850.2 L1286.0 1858.9 L1287.2 1859.8 L1288.4 1843.7 L1289.5 1855.8 L1290.7 1861.5 L1291.9 1861.0 L1293.0 1859.3 L1294.2 1861.2 L1295.4 1859.8 L1296.6 1859.6 L1297.7 1828.3 L1298.9 1860.0 L1300.1 1859.1 L1301.2 1861.0 L1302.4 1861.5 L1303.6 1859.3 L1304.7 1860.2 L1305.9 1807.8 L1307.1 1843.2 L1308.3 1861.1 L1309.4 1859.0 L1310.6 1859.3 L1311.8 1822.9 L1312.9 1848.5 L1314.1 1860.4 L1315.3 1859.2 L1316.5 1860.9 L1317.6 1859.2 L1318.8 1860.4 L1320.0 1861.2 L1321.1 1811.7 L1322.3 1844.6 L1323.5 1861.2 L1324.6 1859.8 L1325.8 1859.9 L1327.0 1860.3 L1328.2 1860.2 L1329.3 1828.3 L1330.5 1860.2 L1331.7 1860.3 L1332.8 1860.1 L1334.0 1776.4 L1335.2 1832.3 L1336.4 1860.5 L1337.5 1859.2 L1338.7 1806.9 L1339.9 1842.9 L1341.0 1861.1 L1342.2 1861.3 L1343.4 1861.1 L1344.6 1859.3 L1345.7 1807.8 L1346.9 1843.2 L1348.1 1861.1 L1349.2 1843.7 L1350.4 1861.2 L1351.6 1860.5 L1352.7 1859.9 L1353.9 1858.8 L1355.1 1859.3 L1356.3 1834.7 L1357.4 1852.6 L1358.6 1861.4 L1359.8 1859.8 L1360.9 1859.7 L1362.1 1861.1 L1363.3 1860.1 L1364.5 1860.9 L1365.6 1860.5 L1366.8 1860.9 L1368.0 1785.1 L1369.1 1835.3 L1370.3 1861.1 L1371.5 1859.1 L1372.7 1762.0 L1373.8 1860.0 L1375.0 1860.3 L1376.2 1860.8 L1377.3 1860.1 L1378.5 1861.4 L1379.7 1829.6 L1380.8 1850.9 L1382.0 1859.3 L1383.2 1860.7 L1384.4 1859.4 L1385.5 1859.5 L1386.7 1860.3 L1387.9 1860.9 L1389.0 1859.5 L1390.2 1859.6 L1391.4 1828.3 L1392.6 1850.4 L1393.7 1860.9 L1394.9 1860.9 L1396.1 1859.5 L1397.2 1860.6 L1398.4 1859.8 L1399.6 1858.8 L1400.7 1859.6 L1401.9 1859.5 L1403.1 1829.6 L1404.3 1859.0 L1405.4 1859.0 L1406.6 1861.4 L1407.8 1859.8 L1408.9 1861.3 L1410.1 1859.3 L1411.3 1861.3 L1412.5 1858.9 L1413.6 1861.2 L1414.8 1829.6 L1416.0 1850.9 L1417.1 1861.2 L1418.3 1860.6 L1419.5 1860.7 L1420.7 1860.6 L1421.8 1859.2 L1423.0 1860.3 L1424.2 1859.6 L1425.3 1859.1 L1426.5 1861.0 L1427.7 1824.5 L1428.8 1860.2 L1430.0 1860.2 L1431.2 1860.8 L1432.4 1860.9 L1433.5 1861.2 L1434.7 1859.3 L1435.9 1859.8 L1437.0 1860.4 L1438.2 1826.1 L1439.4 1860.8 L1440.6 1860.5 L1441.7 1860.2 L1442.9 1859.4 L1444.1 1860.6 L1445.2 1859.7 L1446.4 1860.3 L1447.6 1861.2 L1448.7 1860.9 L1449.9 1822.6 L1451.1 1861.1 L1452.3 1860.1 L1453.4 1861.0 L1454.6 1861.2 L1455.8 1860.5 L1456.9 1859.5 L1458.1 1859.8 L1459.3 1860.4 L1460.5 1859.3 L1461.6 1829.6 L1462.8 1859.9 L1464.0 1859.0 L1465.1 1859.5 L1466.3 1859.5 L1467.5 1859.6 L1468.7 1859.7 L1469.8 1747.0 L1471.0 1821.9 L1472.2 1860.8 L1473.3 1859.8 L1474.5 1859.0 L1475.7 1810.1 L1476.8 1858.8 L1478.0 1861.1 L1479.2 1860.1 L1480.4 1860.0 L1481.5 1859.8 L1482.7 1860.4 L1483.9 1826.1 L1485.0 1861.2 L1486.2 1861.4 L1487.4 1861.5 L1488.6 1826.1 L1489.7 1860.9 L1490.9 1860.1 L1492.1 1860.4 L1493.2 1859.4 L1494.4 1860.2 L1495.6 1858.9 L1496.8 1810.1 L1497.9 1860.7 L1499.1 1859.2 L1500.3 1789.5 L1501.4 1815.2 L1502.6 1779.3 L1503.8 1776.1 L1504.9 1802.3 L1506.1 1812.4 L1507.3 1809.8 L1508.5 1792.7 L1509.6 1776.1 L1510.8 1787.6 L1512.0 1773.7 L1513.1 1808.6 L1514.3 1803.0 L1515.5 1782.3 L1516.7 1787.2 L1517.8 1799.2 L1519.0 1785.7 L1520.2 1802.5 L1521.3 1816.2 L1522.5 1798.7 L1523.7 1801.6 L1524.8 1778.7 L1526.0 1790.2 L1527.2 1783.9 L1528.4 1779.9 L1529.5 1793.2 L1530.7 1785.1 L1531.9 1802.8 L1533.0 1767.0 L1534.2 1781.2 L1535.4 1859.4 L1536.6 1860.4 L1537.7 1860.7 L1538.9 1860.1 L1540.1 1858.8 L1541.2 1860.6 L1542.4 1859.9 L1543.6 1861.4 L1544.8 1860.0 L1545.9 1861.5 L1547.1 1859.8 L1548.3 1859.0 L1549.4 1859.8 L1550.6 1859.6 L1551.8 1860.3 L1552.9 1829.6 L1554.1 1859.0 L1555.3 1859.3 L1556.5 1860.8 L1557.6 1860.6 L1558.8 1858.9 L1560.0 1861.4 L1561.1 1859.9 L1562.3 1861.5 L1563.5 1858.9 L1564.7 1829.0 L1565.8 1860.9 L1567.0 1859.6 L1568.2 1861.3 L1569.3 1861.5 L1570.5 1859.5 L1571.7 1859.4 L1572.8 1859.5 L1574.0 1859.6 L1575.2 1860.8 L1576.4 1861.5 L1577.5 1828.3 L1578.7 1850.4 L1579.9 1860.2 L1581.0 1859.9 L1582.2 1861.1 L1583.4 1859.7 L1584.6 1860.5 L1585.7 1859.4 L1586.9 1861.3 L1588.1 1829.6 L1589.2 1850.9 L1590.4 1860.7 L1591.6 1860.5 L1592.8 1859.0 L1593.9 1861.5 L1595.1 1859.9 L1596.3 1861.4 L1597.4 1819.7 L1598.6 1859.2 L1599.8 1859.0 L1600.9 1860.0 L1602.1 1859.5 L1603.3 1859.8 L1604.5 1860.9 L1605.6 1859.3 L1606.8 1859.3 L1608.0 1859.9 L1609.1 1860.1 L1610.3 1861.0 L1611.5 1830.9 L1612.7 1860.4 L1613.8 1861.4 L1615.0 1861.2 L1616.2 1823.2 L1617.3 1848.6 L1618.5 1859.1 L1619.7 1860.8 L1620.8 1858.9 L1622.0 1858.9 L1623.2 1861.0 L1624.4 1860.0 L1625.5 1829.6 L1626.7 1859.9 L1627.9 1858.9 L1629.0 1859.8 L1630.2 1860.4 L1631.4 1858.9 L1632.6 1861.4 L1633.7 1859.0 L1634.9 1861.4 L1636.1 1859.7 L1637.2 1823.2 L1638.4 1829.6 L1639.6 1859.4 L1640.8 1860.8 L1641.9 1861.1 L1643.1 1859.6 L1644.3 1861.0 L1645.4 1860.9 L1646.6 1859.1 L1647.8 1861.2 L1648.9 1829.6 L1650.1 1850.9 L1651.3 1861.1 L1652.5 1859.6 L1653.6 1859.1 L1654.8 1861.1 L1656.0 1860.6 L1657.1 1830.0 L1658.3 1829.6 L1659.5 1859.7 L1660.7 1860.7 L1661.8 1860.5 L1663.0 1829.6 L1664.2 1859.0 L1665.3 1860.7 L1666.5 1860.6 L1667.7 1860.1 L1668.9 1859.0 L1670.0 1828.3 L1671.2 1859.6 L1672.4 1861.3 L1673.5 1860.8 L1674.7 1859.6 L1675.9 1861.0 L1677.0 1775.8 L1678.2 1775.6 L1679.4 1859.1 L1680.6 1860.2 L1681.7 1827.7 L1682.9 1850.2 L1684.1 1861.5 L1685.2 1860.1 L1686.4 1859.3 L1687.6 1859.6 L1688.8 1861.3 L1689.9 1860.2 L1691.1 1843.7 L1692.3 1860.9 L1693.4 1860.8 L1694.6 1859.6 L1695.8 1813.6 L1696.9 1845.3 L1698.1 1815.0 L1699.3 1845.7 L1700.5 1860.4 L1701.6 1859.1 L1702.8 1859.5 L1704.0 1858.9 L1705.1 1859.2 L1706.3 1858.9 L1707.5 1860.9 L1708.7 1858.8 L1709.8 1859.3 L1711.0 1860.1 L1712.2 1860.8 L1713.3 1860.5 L1714.5 1860.3 L1715.7 1823.2 L1716.9 1848.6 L1718.0 1859.1 L1719.2 1860.8 L1720.4 1860.0 L1721.5 1860.8 L1722.7 1858.9 L1723.9 1859.7 L1725.0 1765.4 L1726.2 1828.4 L1727.4 1861.2 L1728.6 1860.4 L1729.7 1861.3 L1730.9 1859.8 L1732.1 1861.0 L1733.2 1860.0 L1734.4 1860.7 L1735.6 1860.1 L1736.8 1861.5 L1737.9 1728.0 L1739.1 1815.3 L1740.3 1859.4 L1741.4 1859.1 L1742.6 1860.4 L1743.8 1861.2 L1744.9 1859.5 L1746.1 1860.5 L1747.3 1859.2 L1748.5 1859.5 L1749.6 1860.2 L1750.8 1859.0 L1752.0 1861.5 L1753.1 1823.2 L1754.3 1848.6 L1755.5 1859.8 L1756.7 1860.3 L1757.8 1860.4 L1759.0 1860.6 L1760.2 1860.1 L1761.3 1860.7 L1762.5 1859.9 L1763.7 1860.6 L1764.9 1858.9 L1766.0 1859.0 L1767.2 1860.0 L1768.4 1859.4 L1769.5 1796.0 L1770.7 1839.1 L1771.9 1860.5 L1773.0 1860.1 L1774.2 1860.4 L1775.4 1859.1 L1776.6 1860.3 L1777.7 1860.6 L1778.9 1861.0 L1780.1 1823.2 L1781.2 1848.6 L1782.4 1858.8 L1783.6 1861.1 L1784.8 1860.1 L1785.9 1859.8 L1787.1 1858.8 L1788.3 1860.4 L1789.4 1859.6 L1790.6 1859.2 L1791.8 1861.0 L1792.9 1860.8 L1794.1 1858.8 L1795.3 1779.0 L1796.5 1861.2 L1797.6 1860.1 L1798.8 1859.3 L1800.0 1860.6 L1801.1 1861.0 L1802.3 1859.0 L1803.5 1860.3 L1804.7 1859.1 L1805.8 1860.3 L1807.0 1861.4 L1808.2 1860.6 L1809.3 1860.7 L1810.5 1802.8 L1811.7 1841.5 L1812.9 1860.7 L1814.0 1859.3 L1815.2 1860.5 L1816.4 1860.7 L1817.5 1860.0 L1818.7 1861.3 L1819.9 1860.5 L1821.0 1860.7 L1822.2 1860.6 L1823.4 1861.3 L1824.6 1861.2 L1825.7 1859.3 L1826.9 1859.5 L1828.1 1860.9 L1829.2 1860.9 L1830.4 1823.2 L1831.6 1848.6 L1832.8 1859.8 L1833.9 1861.2 L1835.1 1860.8 L1836.3 1859.7 L1837.4 1860.4 L1838.6 1859.2 L1839.8 1861.2 L1841.0 1860.1 L1842.1 1860.7 L1843.3 1859.5 L1844.5 1859.0 L1845.6 1859.1 L1846.8 1861.4 L1848.0 1823.2 L1849.1 1859.6 L1850.3 1860.5 L1851.5 1861.2 L1852.7 1859.6 L1853.8 1861.0 L1855.0 1861.4 L1856.2 1861.0 L1857.3 1859.5 L1858.5 1859.6 L1859.7 1859.4 L1860.9 1859.2 L1862.0 1860.8 L1863.2 1860.9 L1864.4 1861.3 L1865.5 1859.5 L1866.7 1861.3 L1867.9 1859.0 L1869.0 1859.2 L1870.2 1861.4 L1871.4 1860.1 L1872.6 1859.4 L1873.7 1859.3 L1874.9 1858.8 L1876.1 1860.8 L1877.2 1860.4 L1878.4 1861.1 L1879.6 1860.9 L1880.8 1860.3 L1881.9 1772.2 L1883.1 1830.8 L1884.3 1860.0 L1885.4 1859.7 L1886.6 1859.4 L1887.8 1860.7 L1889.0 1861.3 L1890.1 1859.6 L1891.3 1860.6 L1892.5 1785.8 L1893.6 1835.5 L1894.8 1858.8 L1896.0 1860.2 L1897.1 1860.0 L1898.3 1859.7 L1899.5 1859.7 L1900.7 1861.1 L1901.8 1859.2 L1903.0 1859.8 L1904.2 1861.1 L1905.3 1859.5 L1906.5 1782.4 L1907.7 1834.3 L1908.9 1860.9 L1910.0 1859.8 L1911.2 1859.0 L1912.4 1860.1 L1913.5 1859.9 L1914.7 1861.1 L1915.9 1861.3 L1917.0 1861.0 L1918.2 1859.2 L1919.4 1860.7 L1920.6 1860.4 L1921.7 1859.7 L1922.9 1823.2 L1924.1 1848.6 L1925.2 1861.3 L1926.4 1858.8 L1927.6 1858.8 L1928.8 1859.3 L1929.9 1859.8 L1931.1 1858.9 L1932.3 1860.7 L1933.4 1861.4 L1934.6 1860.3 L1935.8 1860.5 L1937.0 1860.1 L1938.1 1861.2 L1939.3 1860.0 L1940.5 1806.2 L1941.6 1842.7 L1942.8 1860.9 L1944.0 1860.1 L1945.1 1860.4 L1946.3 1859.1 L1947.5 1859.4 L1948.7 1859.5 L1949.8 1860.4 L1951.0 1860.0 L1952.2 1859.4 L1953.3 1860.5 L1954.5 1860.9 L1955.7 1860.3 L1956.9 1859.1 L1958.0 1859.1 L1959.2 1860.6 L1960.4 1859.2 L1961.5 1859.5 L1962.7 1861.4 L1963.9 1860.0 L1965.1 1828.6 L1966.2 1861.0 L1967.4 1859.9 L1968.6 1859.3 L1968.6 1862.3 Z" fill="rgba(84,179,153,0.25)"/>
<path d="M2008.9 1862.3 L2008.9 1789.2 L2010.1 1836.7 L2011.2 1861.1 L2012.4 1861.3 L2013.6 1860.0 L2014.8 1859.7 L2015.9 1859.5 L2017.1 1859.4 L2018.3 1826.6 L2019.4 1860.7 L2020.6 1861.2 L2021.8 1859.7 L2022.9 1858.8 L2024.1 1861.3 L2025.3 1861.3 L2026.5 1861.0 L2027.6 1861.1 L2028.8 1859.0 L2030.0 1860.8 L2031.1 1859.8 L2032.3 1860.2 L2033.5 1861.2 L2034.7 1826.6 L2035.8 1849.8 L2037.0 1859.0 L2038.2 1860.9 L2039.3 1860.3 L2040.5 1859.4 L2041.7 1858.8 L2042.9 1861.1 L2044.0 1860.8 L2045.2 1860.7 L2046.4 1859.1 L2047.5 1859.9 L2048.7 1859.1 L2049.9 1860.5 L2051.0 1861.0 L2052.2 1860.7 L2053.4 1858.8 L2054.6 1826.6 L2055.7 1849.8 L2056.9 1860.6 L2058.1 1859.1 L2059.2 1859.3 L2060.4 1860.9 L2061.6 1861.5 L2062.8 1859.1 L2063.9 1861.1 L2065.1 1859.6 L2066.3 1860.1 L2067.4 1860.1 L2068.6 1860.9 L2069.8 1859.5 L2070.9 1860.8 L2072.1 1826.6 L2073.3 1860.5 L2074.5 1859.7 L2075.6 1859.6 L2076.8 1859.5 L2078.0 1860.4 L2079.1 1860.5 L2080.3 1858.8 L2081.5 1859.0 L2082.7 1860.5 L2083.8 1861.2 L2085.0 1859.0 L2086.2 1860.6 L2087.3 1860.6 L2088.5 1859.2 L2089.7 1858.8 L2090.9 1859.5 L2092.0 1826.6 L2093.2 1859.7 L2094.4 1860.0 L2095.5 1860.8 L2096.7 1859.5 L2097.9 1860.9 L2099.0 1860.1 L2100.2 1859.3 L2101.4 1859.3 L2102.6 1859.2 L2103.7 1861.4 L2104.9 1859.3 L2106.1 1826.6 L2107.2 1849.8 L2108.4 1861.3 L2109.6 1859.6 L2110.8 1859.3 L2111.9 1859.6 L2113.1 1860.9 L2114.3 1860.5 L2115.4 1826.6 L2116.6 1849.8 L2117.8 1860.8 L2119.0 1859.8 L2120.1 1762.0 L2121.3 1860.5 L2121.3 1862.3 Z" fill="rgba(84,179,153,0.25)"/>
<path d="M768.0 1863.8 L769.2 1864.7 L770.3 1889.8 L771.5 1863.7 L772.7 1863.8 L773.9 1865.7 L775.0 1874.1 L776.2 1864.2" fill="none" stroke="#5e8bb9" stroke-width="2" stroke-linejoin="round"/>
<path d="M962.0 1865.0 L963.2 1882.0 L964.3 1865.1 L965.5 1889.8 L966.7 1865.4 L967.9 1864.8 L969.0 1865.2 L970.2 1863.8 L971.4 1863.8 L972.5 1865.1 L973.7 1865.5 L974.9 1864.9 L976.0 1865.5 L977.2 1865.0 L978.4 1865.0 L979.6 1864.2 L980.7 1863.5 L981.9 1863.8 L983.1 1863.8 L984.2 1865.5 L985.4 1864.8 L986.6 1865.5 L987.8 1864.3 L988.9 1863.8 L990.1 1864.0 L991.3 1867.4 L992.4 1882.0 L993.6 1864.7 L994.8 1863.6 L996.0 1865.5 L997.1 1885.9 L998.3 1863.6 L999.5 1863.9 L1000.6 1863.5 L1001.8 1871.2 L1003.0 1883.9 L1004.1 1864.3 L1005.3 1865.8 L1006.5 1863.7 L1007.7 1864.1 L1008.8 1863.5 L1010.0 1863.8 L1011.2 1864.7 L1012.3 1865.1 L1013.5 1863.9 L1014.7 1865.3 L1015.9 1865.4 L1017.0 1865.4 L1018.2 1864.0 L1019.4 1865.7 L1020.5 1865.1 L1021.7 1865.7 L1022.9 1864.3 L1024.0 1863.9 L1025.2 1865.6 L1026.4 1865.0 L1027.6 1865.0 L1028.7 1865.2 L1029.9 1865.3 L1031.1 1865.8 L1032.2 1865.7 L1033.4 1863.8 L1034.6 1865.4 L1035.8 1874.1 L1036.9 1864.8 L1038.1 1865.8 L1039.3 1865.7 L1040.4 1865.4 L1041.6 1864.2 L1042.8 1864.1 L1044.0 1865.6 L1045.1 1864.9 L1046.3 1865.6 L1047.5 1876.1 L1048.6 1863.5 L1049.8 1864.6 L1051.0 1864.2 L1052.1 1865.3 L1053.3 1864.1 L1054.5 1864.7 L1055.7 1865.6 L1056.8 1864.7 L1058.0 1864.5 L1059.2 1865.7 L1060.3 1865.7 L1061.5 1865.7" fill="none" stroke="#5e8bb9" stroke-width="2" stroke-linejoin="round"/>
<path d="M1090.5 1883.9 L1091.7 1864.0 L1092.8 1882.0 L1094.0 1864.2 L1095.2 1864.7 L1096.4 1863.5 L1097.5 1865.2 L1098.7 1864.6 L1099.9 1865.4 L1101.0 1865.4 L1102.2 1865.1 L1103.4 1865.4 L1104.5 1864.4 L1105.7 1863.8 L1106.9 1864.1 L1108.1 1865.5 L1109.2 1864.1 L1110.4 1864.6 L1111.6 1864.1 L1112.7 1864.8 L1113.9 1864.2 L1115.1 1864.4 L1116.3 1864.0 L1117.4 1864.1 L1118.6 1866.0 L1119.8 1864.9 L1120.9 1865.0 L1122.1 1864.4 L1123.3 1863.8 L1124.5 1863.6 L1125.6 1865.0 L1126.8 1863.8 L1128.0 1865.4 L1129.1 1864.9 L1130.3 1865.1 L1131.5 1863.8 L1132.6 1865.4 L1133.8 1865.0 L1135.0 1863.5 L1136.2 1864.7 L1137.3 1863.6 L1138.5 1863.7 L1139.7 1864.0 L1140.8 1864.6 L1142.0 1865.1 L1143.2 1865.0 L1144.4 1864.1 L1145.5 1865.3 L1146.7 1865.1 L1147.9 1864.2 L1149.0 1864.6 L1150.2 1863.9 L1151.4 1863.5 L1152.5 1865.8 L1153.7 1864.0 L1154.9 1864.9 L1156.1 1865.7 L1157.2 1864.7 L1158.4 1864.0 L1159.6 1885.9 L1160.7 1864.2 L1161.9 1882.0 L1163.1 1865.2 L1164.3 1865.7 L1165.4 1864.2 L1166.6 1865.8 L1167.8 1864.5 L1168.9 1863.7 L1170.1 1865.7 L1171.3 1864.7 L1172.5 1865.7 L1173.6 1865.0 L1174.8 1864.8 L1176.0 1865.2 L1177.1 1865.0 L1178.3 1865.7 L1179.5 1864.3 L1180.6 1865.8 L1181.8 1864.2 L1183.0 1863.9 L1184.2 1865.6 L1185.3 1865.6 L1186.5 1863.8 L1187.7 1864.3 L1188.8 1864.1 L1190.0 1865.2 L1191.2 1864.7 L1192.4 1863.6 L1193.5 1863.8 L1194.7 1865.5 L1195.9 1864.1 L1197.0 1865.7 L1198.2 1869.1 L1199.4 1864.6 L1200.6 1864.4 L1201.7 1865.5 L1202.9 1863.7 L1204.1 1865.1 L1205.2 1865.0 L1206.4 1870.9 L1207.6 1865.6 L1208.7 1863.8 L1209.9 1865.1 L1211.1 1864.7 L1212.3 1864.0 L1213.4 1864.2 L1214.6 1865.0 L1215.8 1864.0 L1216.9 1865.1 L1218.1 1864.7 L1219.3 1864.1 L1220.5 1866.7 L1221.6 1865.1 L1222.8 1865.2 L1224.0 1865.8 L1225.1 1864.0 L1226.3 1864.2 L1227.5 1863.9 L1228.6 1865.0 L1229.8 1864.4 L1231.0 1863.8 L1232.2 1864.4 L1233.3 1865.2 L1234.5 1864.3 L1235.7 1870.5 L1236.8 1864.4 L1238.0 1863.5 L1239.2 1865.7 L1240.4 1864.0 L1241.5 1865.4 L1242.7 1864.6 L1243.9 1863.9 L1245.0 1863.6 L1246.2 1865.3 L1247.4 1863.6 L1248.6 1865.2 L1249.7 1864.1 L1250.9 1864.1 L1252.1 1870.1 L1253.2 1865.0 L1254.4 1864.0 L1255.6 1865.7 L1256.7 1864.5 L1257.9 1863.9 L1259.1 1865.4 L1260.3 1864.3 L1261.4 1865.3 L1262.6 1865.3 L1263.8 1863.6 L1264.9 1865.8 L1266.1 1864.1 L1267.3 1864.7 L1268.5 1864.0 L1269.6 1865.1 L1270.8 1865.0 L1272.0 1864.2 L1273.1 1865.2 L1274.3 1864.1 L1275.5 1864.8 L1276.6 1865.8 L1277.8 1865.4 L1279.0 1863.7 L1280.2 1865.5 L1281.3 1864.2 L1282.5 1865.8 L1283.7 1864.4 L1284.8 1864.1 L1286.0 1863.7 L1287.2 1864.0 L1288.4 1864.0 L1289.5 1865.0 L1290.7 1864.3 L1291.9 1864.2 L1293.0 1864.8 L1294.2 1864.4 L1295.4 1863.7 L1296.6 1864.4 L1297.7 1865.7 L1298.9 1864.3 L1300.1 1865.8 L1301.2 1865.2 L1302.4 1865.6 L1303.6 1864.4 L1304.7 1868.2 L1305.9 1865.6 L1307.1 1864.4 L1308.3 1864.1 L1309.4 1863.7 L1310.6 1865.8 L1311.8 1865.7 L1312.9 1863.6 L1314.1 1865.6 L1315.3 1863.9 L1316.5 1864.4 L1317.6 1863.9 L1318.8 1864.7 L1320.0 1864.1 L1321.1 1863.6 L1322.3 1863.6 L1323.5 1864.9 L1324.6 1864.2 L1325.8 1864.5 L1327.0 1869.4 L1328.2 1864.0 L1329.3 1864.6 L1330.5 1863.7 L1331.7 1863.7 L1332.8 1863.6 L1334.0 1865.2 L1335.2 1863.6 L1336.4 1865.7 L1337.5 1865.8 L1338.7 1863.9 L1339.9 1865.7 L1341.0 1865.3 L1342.2 1864.3 L1343.4 1865.6 L1344.6 1885.9 L1345.7 1864.0 L1346.9 1865.7 L1348.1 1865.7 L1349.2 1863.9 L1350.4 1864.7 L1351.6 1865.5 L1352.7 1865.6 L1353.9 1865.0 L1355.1 1864.1 L1356.3 1864.3 L1357.4 1863.9 L1358.6 1865.4 L1359.8 1865.8 L1360.9 1864.5 L1362.1 1864.9 L1363.3 1865.6 L1364.5 1865.0 L1365.6 1863.7 L1366.8 1872.1 L1368.0 1865.0 L1369.1 1865.7 L1370.3 1863.7 L1371.5 1865.3 L1372.7 1863.5 L1373.8 1864.3 L1375.0 1865.7 L1376.2 1865.6 L1377.3 1864.4 L1378.5 1869.6 L1379.7 1863.8 L1380.8 1864.7 L1382.0 1863.9 L1383.2 1863.6 L1384.4 1871.8 L1385.5 1864.6 L1386.7 1864.0 L1387.9 1863.6 L1389.0 1865.1 L1390.2 1864.1 L1391.4 1865.3 L1392.6 1865.0 L1393.7 1867.6 L1394.9 1865.2 L1396.1 1864.2 L1397.2 1864.0 L1398.4 1865.1 L1399.6 1864.6 L1400.7 1865.5 L1401.9 1864.8 L1403.1 1864.9 L1404.3 1864.7 L1405.4 1864.3 L1406.6 1863.6 L1407.8 1865.1 L1408.9 1864.9 L1410.1 1865.4 L1411.3 1865.5 L1412.5 1863.7 L1413.6 1863.6 L1414.8 1865.0 L1416.0 1864.2 L1417.1 1865.3 L1418.3 1876.1 L1419.5 1865.2 L1420.7 1865.8 L1421.8 1868.2 L1423.0 1865.3 L1424.2 1864.7 L1425.3 1863.7 L1426.5 1863.5 L1427.7 1869.6 L1428.8 1865.4 L1430.0 1864.3 L1431.2 1865.7 L1432.4 1865.1 L1433.5 1865.0 L1434.7 1865.1 L1435.9 1864.3 L1437.0 1865.6 L1438.2 1863.5 L1439.4 1865.6 L1440.6 1865.6 L1441.7 1864.7 L1442.9 1865.0 L1444.1 1863.8 L1445.2 1865.2 L1446.4 1865.3 L1447.6 1864.6 L1448.7 1863.9 L1449.9 1865.5 L1451.1 1864.1 L1452.3 1863.9 L1453.4 1865.8 L1454.6 1865.7 L1455.8 1865.8 L1456.9 1864.5 L1458.1 1863.7 L1459.3 1863.6 L1460.5 1865.1 L1461.6 1864.6 L1462.8 1864.4 L1464.0 1864.5 L1465.1 1864.5 L1466.3 1865.6 L1467.5 1865.5 L1468.7 1864.5 L1469.8 1863.7 L1471.0 1865.2 L1472.2 1864.5 L1473.3 1864.4 L1474.5 1863.9 L1475.7 1864.4 L1476.8 1863.6 L1478.0 1865.3 L1479.2 1863.7 L1480.4 1865.2 L1481.5 1865.4 L1482.7 1865.7 L1483.9 1864.4 L1485.0 1865.8 L1486.2 1864.1 L1487.4 1864.5 L1488.6 1864.3 L1489.7 1865.2 L1490.9 1864.0 L1492.1 1864.0 L1493.2 1865.4 L1494.4 1864.8 L1495.6 1864.3 L1496.8 1865.4 L1497.9 1864.8 L1499.1 1864.3 L1500.3 1864.4 L1501.4 1869.6 L1502.6 1864.1 L1503.8 1864.5 L1504.9 1864.3 L1506.1 1863.6 L1507.3 1865.3 L1508.5 1865.1 L1509.6 1865.0 L1510.8 1863.8 L1512.0 1864.3 L1513.1 1865.3 L1514.3 1864.9 L1515.5 1878.0 L1516.7 1863.9 L1517.8 1865.2 L1519.0 1864.8 L1520.2 1863.8 L1521.3 1864.6 L1522.5 1864.7 L1523.7 1863.5 L1524.8 1864.8 L1526.0 1864.4 L1527.2 1863.7 L1528.4 1863.5 L1529.5 1865.7 L1530.7 1864.7 L1531.9 1863.6 L1533.0 1864.3 L1534.2 1864.6 L1535.4 1864.0 L1536.6 1864.8 L1537.7 1865.4 L1538.9 1864.1 L1540.1 1865.0 L1541.2 1864.2 L1542.4 1865.0 L1543.6 1865.2 L1544.8 1863.6 L1545.9 1863.9 L1547.1 1865.0 L1548.3 1864.9 L1549.4 1865.1 L1550.6 1864.0 L1551.8 1865.3 L1552.9 1863.6 L1554.1 1865.0 L1555.3 1865.3 L1556.5 1864.2 L1557.6 1864.5 L1558.8 1863.6 L1560.0 1863.8 L1561.1 1865.6 L1562.3 1864.4 L1563.5 1865.8 L1564.7 1863.7 L1565.8 1863.9 L1567.0 1863.8 L1568.2 1865.5 L1569.3 1865.2 L1570.5 1863.9 L1571.7 1865.2 L1572.8 1863.7 L1574.0 1864.6 L1575.2 1865.8 L1576.4 1863.5 L1577.5 1863.7 L1578.7 1863.9 L1579.9 1863.6 L1581.0 1864.5 L1582.2 1865.4 L1583.4 1865.0 L1584.6 1865.3 L1585.7 1864.8 L1586.9 1865.8 L1588.1 1864.3 L1589.2 1865.4 L1590.4 1864.5 L1591.6 1865.1 L1592.8 1865.4 L1593.9 1864.1 L1595.1 1865.4 L1596.3 1865.4 L1597.4 1864.8 L1598.6 1865.4 L1599.8 1864.3 L1600.9 1865.4 L1602.1 1865.7 L1603.3 1865.1 L1604.5 1864.1 L1605.6 1864.6 L1606.8 1865.3 L1608.0 1865.6 L1609.1 1864.6 L1610.3 1863.9 L1611.5 1864.3 L1612.7 1864.7 L1613.8 1865.8 L1615.0 1865.0 L1616.2 1864.9 L1617.3 1871.3 L1618.5 1864.6 L1619.7 1865.3 L1620.8 1865.3 L1622.0 1865.7 L1623.2 1863.7 L1624.4 1865.5 L1625.5 1865.6 L1626.7 1864.4 L1627.9 1864.1 L1629.0 1865.7 L1630.2 1864.5 L1631.4 1865.8 L1632.6 1864.1 L1633.7 1865.6 L1634.9 1865.3 L1636.1 1865.8 L1637.2 1865.3 L1638.4 1864.2 L1639.6 1863.7 L1640.8 1863.8 L1641.9 1864.0 L1643.1 1863.5 L1644.3 1863.6 L1645.4 1865.7 L1646.6 1863.8 L1647.8 1865.7 L1648.9 1864.5 L1650.1 1864.6 L1651.3 1864.0 L1652.5 1864.8 L1653.6 1864.1 L1654.8 1864.1 L1656.0 1863.9 L1657.1 1865.6 L1658.3 1863.6 L1659.5 1864.0 L1660.7 1864.1 L1661.8 1865.8 L1663.0 1863.7 L1664.2 1863.6 L1665.3 1872.1 L1666.5 1870.4 L1667.7 1863.9 L1668.9 1864.0 L1670.0 1863.9 L1671.2 1863.9 L1672.4 1864.9 L1673.5 1864.0 L1674.7 1865.4 L1675.9 1863.6 L1677.0 1865.2 L1678.2 1864.3 L1679.4 1871.8 L1680.6 1865.5 L1681.7 1865.4 L1682.9 1864.4 L1684.1 1864.7 L1685.2 1863.8 L1686.4 1865.5 L1687.6 1864.4 L1688.8 1865.5 L1689.9 1864.7 L1691.1 1863.5 L1692.3 1863.9 L1693.4 1866.2 L1694.6 1868.7 L1695.8 1864.7 L1696.9 1865.5 L1698.1 1863.8 L1699.3 1864.1 L1700.5 1863.8 L1701.6 1863.8 L1702.8 1863.9 L1704.0 1864.4 L1705.1 1864.7 L1706.3 1865.3 L1707.5 1864.3 L1708.7 1865.4 L1709.8 1865.5 L1711.0 1865.7 L1712.2 1872.1 L1713.3 1864.7 L1714.5 1865.8 L1715.7 1865.3 L1716.9 1865.4 L1718.0 1863.6 L1719.2 1865.1 L1720.4 1865.7 L1721.5 1864.7 L1722.7 1864.2 L1723.9 1863.8 L1725.0 1864.7 L1726.2 1864.7 L1727.4 1863.8 L1728.6 1864.2 L1729.7 1864.8 L1730.9 1864.8 L1732.1 1865.2 L1733.2 1864.9 L1734.4 1864.1 L1735.6 1864.4 L1736.8 1864.3 L1737.9 1864.8 L1739.1 1865.8 L1740.3 1863.9 L1741.4 1864.5 L1742.6 1864.5 L1743.8 1864.0 L1744.9 1863.8 L1746.1 1865.1 L1747.3 1865.4 L1748.5 1865.2 L1749.6 1870.2 L1750.8 1863.8 L1752.0 1865.3 L1753.1 1865.7 L1754.3 1865.3 L1755.5 1864.4 L1756.7 1865.2 L1757.8 1864.8 L1759.0 1865.3 L1760.2 1864.5 L1761.3 1863.8 L1762.5 1863.7 L1763.7 1865.5 L1764.9 1864.0 L1766.0 1863.5 L1767.2 1864.7 L1768.4 1864.7 L1769.5 1864.7 L1770.7 1864.3 L1771.9 1865.7 L1773.0 1863.7 L1774.2 1864.8 L1775.4 1865.8 L1776.6 1865.0 L1777.7 1864.7 L1778.9 1864.2 L1780.1 1864.7 L1781.2 1865.1 L1782.4 1865.6 L1783.6 1864.2 L1784.8 1863.9 L1785.9 1864.9 L1787.1 1865.0 L1788.3 1865.3 L1789.4 1863.5 L1790.6 1864.9 L1791.8 1864.7 L1792.9 1865.0 L1794.1 1864.8 L1795.3 1863.8 L1796.5 1863.7 L1797.6 1865.4 L1798.8 1869.7 L1800.0 1865.2 L1801.1 1864.1 L1802.3 1864.9 L1803.5 1864.4 L1804.7 1864.9 L1805.8 1864.9 L1807.0 1865.7 L1808.2 1865.6 L1809.3 1864.9 L1810.5 1865.7 L1811.7 1865.2 L1812.9 1865.5 L1814.0 1864.1 L1815.2 1863.9 L1816.4 1864.8 L1817.5 1864.4 L1818.7 1863.8 L1819.9 1864.1 L1821.0 1869.3 L1822.2 1863.8 L1823.4 1864.1 L1824.6 1864.5 L1825.7 1863.9 L1826.9 1864.4 L1828.1 1865.7 L1829.2 1864.5 L1830.4 1864.1 L1831.6 1864.3 L1832.8 1864.0 L1833.9 1864.7 L1835.1 1865.3 L1836.3 1864.8 L1837.4 1863.7 L1838.6 1864.2 L1839.8 1864.8 L1841.0 1864.2 L1842.1 1864.0 L1843.3 1864.1 L1844.5 1865.3 L1845.6 1863.8 L1846.8 1865.1 L1848.0 1864.5 L1849.1 1864.1 L1850.3 1865.0 L1851.5 1865.6 L1852.7 1864.8 L1853.8 1864.2 L1855.0 1864.2 L1856.2 1865.5 L1857.3 1864.1 L1858.5 1870.9 L1859.7 1864.2 L1860.9 1864.9 L1862.0 1863.7 L1863.2 1865.6 L1864.4 1865.1 L1865.5 1865.4 L1866.7 1865.7 L1867.9 1865.1 L1869.0 1865.0 L1870.2 1865.1 L1871.4 1865.7 L1872.6 1863.6 L1873.7 1864.1 L1874.9 1865.0 L1876.1 1863.6 L1877.2 1864.0 L1878.4 1865.1 L1879.6 1864.0 L1880.8 1865.7 L1881.9 1865.6 L1883.1 1864.3 L1884.3 1865.3 L1885.4 1864.9 L1886.6 1865.4 L1887.8 1864.3 L1889.0 1864.1 L1890.1 1864.5 L1891.3 1864.6 L1892.5 1871.4 L1893.6 1885.9 L1894.8 1864.8 L1896.0 1864.5 L1897.1 1863.5 L1898.3 1889.8 L1899.5 1864.1 L1900.7 1863.5 L1901.8 1864.2 L1903.0 1865.5 L1904.2 1865.3 L1905.3 1864.2 L1906.5 1864.2 L1907.7 1864.3 L1908.9 1863.6 L1910.0 1865.4 L1911.2 1865.7 L1912.4 1863.9 L1913.5 1863.7 L1914.7 1864.5 L1915.9 1863.6 L1917.0 1871.8 L1918.2 1865.3 L1919.4 1865.0 L1920.6 1864.3 L1921.7 1865.4 L1922.9 1864.2 L1924.1 1864.3 L1925.2 1864.2 L1926.4 1865.6 L1927.6 1865.7 L1928.8 1863.6 L1929.9 1864.2 L1931.1 1864.6 L1932.3 1864.3 L1933.4 1863.9 L1934.6 1863.7 L1935.8 1864.8 L1937.0 1864.8 L1938.1 1863.9 L1939.3 1863.7 L1940.5 1863.7 L1941.6 1864.6 L1942.8 1864.8 L1944.0 1864.9 L1945.1 1863.7 L1946.3 1864.8 L1947.5 1863.7 L1948.7 1863.7 L1949.8 1863.9 L1951.0 1865.3 L1952.2 1863.6 L1953.3 1863.5 L1954.5 1864.2 L1955.7 1865.6 L1956.9 1864.8 L1958.0 1863.9 L1959.2 1865.3 L1960.4 1863.8 L1961.5 1865.7 L1962.7 1864.9 L1963.9 1865.4 L1965.1 1865.1 L1966.2 1864.5 L1967.4 1864.6 L1968.6 1863.9" fill="none" stroke="#5e8bb9" stroke-width="2" stroke-linejoin="round"/>
<path d="M2008.9 1863.6 L2010.1 1885.9 L2011.2 1863.8 L2012.4 1865.4 L2013.6 1864.9 L2014.8 1864.9 L2015.9 1864.1 L2017.1 1865.3 L2018.3 1865.8 L2019.4 1864.7 L2020.6 1863.5 L2021.8 1865.3 L2022.9 1864.0 L2024.1 1863.5 L2025.3 1864.7 L2026.5 1865.7 L2027.6 1863.9 L2028.8 1870.0 L2030.0 1865.8 L2031.1 1864.3 L2032.3 1864.2 L2033.5 1865.2 L2034.7 1864.4 L2035.8 1864.8 L2037.0 1865.7 L2038.2 1864.1 L2039.3 1864.0 L2040.5 1865.0 L2041.7 1864.0 L2042.9 1865.5 L2044.0 1865.3 L2045.2 1864.3 L2046.4 1863.9 L2047.5 1864.5 L2048.7 1864.0 L2049.9 1865.3 L2051.0 1865.5 L2052.2 1863.5 L2053.4 1863.5 L2054.6 1865.2 L2055.7 1865.1 L2056.9 1865.6 L2058.1 1867.6 L2059.2 1869.1 L2060.4 1864.5 L2061.6 1865.8 L2062.8 1863.8 L2063.9 1864.5 L2065.1 1863.8 L2066.3 1863.7 L2067.4 1865.6 L2068.6 1865.8 L2069.8 1864.1 L2070.9 1863.6 L2072.1 1864.4 L2073.3 1863.5 L2074.5 1864.8 L2075.6 1865.8 L2076.8 1864.4 L2078.0 1865.8 L2079.1 1864.4 L2080.3 1863.5 L2081.5 1864.1 L2082.7 1864.0 L2083.8 1865.5 L2085.0 1863.6 L2086.2 1865.0 L2087.3 1871.6 L2088.5 1864.7 L2089.7 1864.0 L2090.9 1864.4 L2092.0 1864.7 L2093.2 1864.2 L2094.4 1864.0 L2095.5 1865.6 L2096.7 1864.7 L2097.9 1863.8 L2099.0 1864.7 L2100.2 1864.0 L2101.4 1864.6 L2102.6 1865.6 L2103.7 1864.4 L2104.9 1863.8 L2106.1 1863.7 L2107.2 1864.7 L2108.4 1864.4 L2109.6 1864.5 L2110.8 1865.3 L2111.9 1864.3 L2113.1 1864.4 L2114.3 1863.5 L2115.4 1863.6 L2116.6 1864.1 L2117.8 1865.4 L2119.0 1865.5 L2120.1 1865.3 L2121.3 1863.6" fill="none" stroke="#5e8bb9" stroke-width="2" stroke-linejoin="round"/>
<path d="M768.0 1789.6 L769.2 1836.9 L770.3 1773.9 L771.5 1831.4 L772.7 1854.4 L773.9 1859.5 L775.0 1860.4 L776.2 1859.2" fill="none" stroke="#5ba68c" stroke-width="2" stroke-linejoin="round"/>
<path d="M962.0 1859.9 L963.2 1792.5 L964.3 1837.9 L965.5 1860.6 L966.7 1860.7 L967.9 1824.5 L969.0 1849.1 L970.2 1858.8 L971.4 1859.4 L972.5 1861.4 L973.7 1859.9 L974.9 1859.6 L976.0 1860.3 L977.2 1860.2 L978.4 1859.6 L979.6 1780.3 L980.7 1833.6 L981.9 1861.1 L983.1 1859.4 L984.2 1839.8 L985.4 1854.4 L986.6 1859.3 L987.8 1860.4 L988.9 1858.9 L990.1 1860.9 L991.3 1859.9 L992.4 1860.5 L993.6 1824.3 L994.8 1837.1 L996.0 1859.4 L997.1 1860.4 L998.3 1838.6 L999.5 1860.9 L1000.6 1808.5 L1001.8 1830.6 L1003.0 1789.9 L1004.1 1850.0 L1005.3 1833.3 L1006.5 1805.3 L1007.7 1823.4 L1008.8 1861.1 L1010.0 1860.1 L1011.2 1843.2 L1012.3 1829.1 L1013.5 1846.9 L1014.7 1860.0 L1015.9 1860.9 L1017.0 1826.1 L1018.2 1859.5 L1019.4 1860.5 L1020.5 1860.8 L1021.7 1860.3 L1022.9 1858.9 L1024.0 1860.9 L1025.2 1859.8 L1026.4 1860.2 L1027.6 1861.3 L1028.7 1818.1 L1029.9 1846.8 L1031.1 1859.3 L1032.2 1860.4 L1033.4 1810.1 L1034.6 1859.0 L1035.8 1825.4 L1036.9 1860.6 L1038.1 1846.4 L1039.3 1860.1 L1040.4 1822.9 L1041.6 1860.8 L1042.8 1848.9 L1044.0 1861.2 L1045.1 1755.0 L1046.3 1824.7 L1047.5 1860.1 L1048.6 1861.0 L1049.8 1827.0 L1051.0 1826.8 L1052.1 1738.7 L1053.3 1860.0 L1054.5 1859.4 L1055.7 1859.4 L1056.8 1840.5 L1058.0 1859.6 L1059.2 1860.2 L1060.3 1859.1 L1061.5 1860.0" fill="none" stroke="#5ba68c" stroke-width="2" stroke-linejoin="round"/>
<path d="M1090.5 1729.1 L1091.7 1815.7 L1092.8 1861.1 L1094.0 1860.7 L1095.2 1860.7 L1096.4 1860.6 L1097.5 1861.5 L1098.7 1829.3 L1099.9 1843.7 L1101.0 1860.2 L1102.2 1860.1 L1103.4 1860.6 L1104.5 1859.8 L1105.7 1861.4 L1106.9 1859.5 L1108.1 1861.3 L1109.2 1825.2 L1110.4 1827.7 L1111.6 1827.7 L1112.7 1858.8 L1113.9 1858.9 L1115.1 1829.2 L1116.3 1819.7 L1117.4 1847.4 L1118.6 1860.4 L1119.8 1860.9 L1120.9 1859.4 L1122.1 1859.1 L1123.3 1764.3 L1124.5 1828.0 L1125.6 1859.1 L1126.8 1859.3 L1128.0 1860.1 L1129.1 1859.2 L1130.3 1859.6 L1131.5 1861.4 L1132.6 1861.2 L1133.8 1806.9 L1135.0 1842.9 L1136.2 1859.5 L1137.3 1859.7 L1138.5 1860.8 L1139.7 1859.5 L1140.8 1858.8 L1142.0 1860.2 L1143.2 1859.8 L1144.4 1861.1 L1145.5 1800.5 L1146.7 1800.5 L1147.9 1859.7 L1149.0 1758.8 L1150.2 1859.1 L1151.4 1858.9 L1152.5 1859.3 L1153.7 1754.7 L1154.9 1860.9 L1156.1 1860.1 L1157.2 1859.3 L1158.4 1859.6 L1159.6 1763.0 L1160.7 1827.5 L1161.9 1860.6 L1163.1 1861.5 L1164.3 1805.9 L1165.4 1842.6 L1166.6 1860.4 L1167.8 1860.5 L1168.9 1821.3 L1170.1 1860.7 L1171.3 1860.8 L1172.5 1860.5 L1173.6 1859.3 L1174.8 1858.9 L1176.0 1827.7 L1177.1 1859.4 L1178.3 1861.4 L1179.5 1860.2 L1180.6 1859.5 L1181.8 1859.7 L1183.0 1791.8 L1184.2 1837.6 L1185.3 1860.9 L1186.5 1860.3 L1187.7 1861.3 L1188.8 1860.9 L1190.0 1859.1 L1191.2 1860.4 L1192.4 1828.6 L1193.5 1850.5 L1194.7 1859.8 L1195.9 1860.8 L1197.0 1860.3 L1198.2 1826.6 L1199.4 1748.6 L1200.6 1822.5 L1201.7 1843.4 L1202.9 1846.0 L1204.1 1829.3 L1205.2 1839.5 L1206.4 1833.9 L1207.6 1797.9 L1208.7 1839.8 L1209.9 1830.3 L1211.1 1861.3 L1212.3 1860.4 L1213.4 1755.0 L1214.6 1858.9 L1215.8 1860.2 L1216.9 1858.9 L1218.1 1861.5 L1219.3 1860.4 L1220.5 1734.8 L1221.6 1860.4 L1222.8 1859.3 L1224.0 1715.0 L1225.1 1810.7 L1226.3 1859.4 L1227.5 1860.2 L1228.6 1824.5 L1229.8 1849.1 L1231.0 1858.8 L1232.2 1861.3 L1233.3 1859.1 L1234.5 1859.0 L1235.7 1858.9 L1236.8 1747.6 L1238.0 1822.2 L1239.2 1860.5 L1240.4 1858.9 L1241.5 1859.3 L1242.7 1861.4 L1243.9 1859.0 L1245.0 1859.0 L1246.2 1859.3 L1247.4 1861.4 L1248.6 1860.8 L1249.7 1860.6 L1250.9 1829.3 L1252.1 1860.6 L1253.2 1859.0 L1254.4 1861.4 L1255.6 1858.9 L1256.7 1860.8 L1257.9 1859.0 L1259.1 1827.7 L1260.3 1859.8 L1261.4 1860.5 L1262.6 1826.7 L1263.8 1849.8 L1264.9 1860.6 L1266.1 1858.8 L1267.3 1861.2 L1268.5 1860.3 L1269.6 1859.8 L1270.8 1859.2 L1272.0 1859.2 L1273.1 1860.5 L1274.3 1821.3 L1275.5 1847.9 L1276.6 1860.4 L1277.8 1860.9 L1279.0 1858.8 L1280.2 1859.3 L1281.3 1861.4 L1282.5 1861.0 L1283.7 1827.7 L1284.8 1850.2 L1286.0 1858.9 L1287.2 1859.8 L1288.4 1843.7 L1289.5 1855.8 L1290.7 1861.5 L1291.9 1861.0 L1293.0 1859.3 L1294.2 1861.2 L1295.4 1859.8 L1296.6 1859.6 L1297.7 1828.3 L1298.9 1860.0 L1300.1 1859.1 L1301.2 1861.0 L1302.4 1861.5 L1303.6 1859.3 L1304.7 1860.2 L1305.9 1807.8 L1307.1 1843.2 L1308.3 1861.1 L1309.4 1859.0 L1310.6 1859.3 L1311.8 1822.9 L1312.9 1848.5 L1314.1 1860.4 L1315.3 1859.2 L1316.5 1860.9 L1317.6 1859.2 L1318.8 1860.4 L1320.0 1861.2 L1321.1 1811.7 L1322.3 1844.6 L1323.5 1861.2 L1324.6 1859.8 L1325.8 1859.9 L1327.0 1860.3 L1328.2 1860.2 L1329.3 1828.3 L1330.5 1860.2 L1331.7 1860.3 L1332.8 1860.1 L1334.0 1776.4 L1335.2 1832.3 L1336.4 1860.5 L1337.5 1859.2 L1338.7 1806.9 L1339.9 1842.9 L1341.0 1861.1 L1342.2 1861.3 L1343.4 1861.1 L1344.6 1859.3 L1345.7 1807.8 L1346.9 1843.2 L1348.1 1861.1 L1349.2 1843.7 L1350.4 1861.2 L1351.6 1860.5 L1352.7 1859.9 L1353.9 1858.8 L1355.1 1859.3 L1356.3 1834.7 L1357.4 1852.6 L1358.6 1861.4 L1359.8 1859.8 L1360.9 1859.7 L1362.1 1861.1 L1363.3 1860.1 L1364.5 1860.9 L1365.6 1860.5 L1366.8 1860.9 L1368.0 1785.1 L1369.1 1835.3 L1370.3 1861.1 L1371.5 1859.1 L1372.7 1762.0 L1373.8 1860.0 L1375.0 1860.3 L1376.2 1860.8 L1377.3 1860.1 L1378.5 1861.4 L1379.7 1829.6 L1380.8 1850.9 L1382.0 1859.3 L1383.2 1860.7 L1384.4 1859.4 L1385.5 1859.5 L1386.7 1860.3 L1387.9 1860.9 L1389.0 1859.5 L1390.2 1859.6 L1391.4 1828.3 L1392.6 1850.4 L1393.7 1860.9 L1394.9 1860.9 L1396.1 1859.5 L1397.2 1860.6 L1398.4 1859.8 L1399.6 1858.8 L1400.7 1859.6 L1401.9 1859.5 L1403.1 1829.6 L1404.3 1859.0 L1405.4 1859.0 L1406.6 1861.4 L1407.8 1859.8 L1408.9 1861.3 L1410.1 1859.3 L1411.3 1861.3 L1412.5 1858.9 L1413.6 1861.2 L1414.8 1829.6 L1416.0 1850.9 L1417.1 1861.2 L1418.3 1860.6 L1419.5 1860.7 L1420.7 1860.6 L1421.8 1859.2 L1423.0 1860.3 L1424.2 1859.6 L1425.3 1859.1 L1426.5 1861.0 L1427.7 1824.5 L1428.8 1860.2 L1430.0 1860.2 L1431.2 1860.8 L1432.4 1860.9 L1433.5 1861.2 L1434.7 1859.3 L1435.9 1859.8 L1437.0 1860.4 L1438.2 1826.1 L1439.4 1860.8 L1440.6 1860.5 L1441.7 1860.2 L1442.9 1859.4 L1444.1 1860.6 L1445.2 1859.7 L1446.4 1860.3 L1447.6 1861.2 L1448.7 1860.9 L1449.9 1822.6 L1451.1 1861.1 L1452.3 1860.1 L1453.4 1861.0 L1454.6 1861.2 L1455.8 1860.5 L1456.9 1859.5 L1458.1 1859.8 L1459.3 1860.4 L1460.5 1859.3 L1461.6 1829.6 L1462.8 1859.9 L1464.0 1859.0 L1465.1 1859.5 L1466.3 1859.5 L1467.5 1859.6 L1468.7 1859.7 L1469.8 1747.0 L1471.0 1821.9 L1472.2 1860.8 L1473.3 1859.8 L1474.5 1859.0 L1475.7 1810.1 L1476.8 1858.8 L1478.0 1861.1 L1479.2 1860.1 L1480.4 1860.0 L1481.5 1859.8 L1482.7 1860.4 L1483.9 1826.1 L1485.0 1861.2 L1486.2 1861.4 L1487.4 1861.5 L1488.6 1826.1 L1489.7 1860.9 L1490.9 1860.1 L1492.1 1860.4 L1493.2 1859.4 L1494.4 1860.2 L1495.6 1858.9 L1496.8 1810.1 L1497.9 1860.7 L1499.1 1859.2 L1500.3 1789.5 L1501.4 1815.2 L1502.6 1779.3 L1503.8 1776.1 L1504.9 1802.3 L1506.1 1812.4 L1507.3 1809.8 L1508.5 1792.7 L1509.6 1776.1 L1510.8 1787.6 L1512.0 1773.7 L1513.1 1808.6 L1514.3 1803.0 L1515.5 1782.3 L1516.7 1787.2 L1517.8 1799.2 L1519.0 1785.7 L1520.2 1802.5 L1521.3 1816.2 L1522.5 1798.7 L1523.7 1801.6 L1524.8 1778.7 L1526.0 1790.2 L1527.2 1783.9 L1528.4 1779.9 L1529.5 1793.2 L1530.7 1785.1 L1531.9 1802.8 L1533.0 1767.0 L1534.2 1781.2 L1535.4 1859.4 L1536.6 1860.4 L1537.7 1860.7 L1538.9 1860.1 L1540.1 1858.8 L1541.2 1860.6 L1542.4 1859.9 L1543.6 1861.4 L1544.8 1860.0 L1545.9 1861.5 L1547.1 1859.8 L1548.3 1859.0 L1549.4 1859.8 L1550.6 1859.6 L1551.8 1860.3 L1552.9 1829.6 L1554.1 1859.0 L1555.3 1859.3 L1556.5 1860.8 L1557.6 1860.6 L1558.8 1858.9 L1560.0 1861.4 L1561.1 1859.9 L1562.3 1861.5 L1563.5 1858.9 L1564.7 1829.0 L1565.8 1860.9 L1567.0 1859.6 L1568.2 1861.3 L1569.3 1861.5 L1570.5 1859.5 L1571.7 1859.4 L1572.8 1859.5 L1574.0 1859.6 L1575.2 1860.8 L1576.4 1861.5 L1577.5 1828.3 L1578.7 1850.4 L1579.9 1860.2 L1581.0 1859.9 L1582.2 1861.1 L1583.4 1859.7 L1584.6 1860.5 L1585.7 1859.4 L1586.9 1861.3 L1588.1 1829.6 L1589.2 1850.9 L1590.4 1860.7 L1591.6 1860.5 L1592.8 1859.0 L1593.9 1861.5 L1595.1 1859.9 L1596.3 1861.4 L1597.4 1819.7 L1598.6 1859.2 L1599.8 1859.0 L1600.9 1860.0 L1602.1 1859.5 L1603.3 1859.8 L1604.5 1860.9 L1605.6 1859.3 L1606.8 1859.3 L1608.0 1859.9 L1609.1 1860.1 L1610.3 1861.0 L1611.5 1830.9 L1612.7 1860.4 L1613.8 1861.4 L1615.0 1861.2 L1616.2 1823.2 L1617.3 1848.6 L1618.5 1859.1 L1619.7 1860.8 L1620.8 1858.9 L1622.0 1858.9 L1623.2 1861.0 L1624.4 1860.0 L1625.5 1829.6 L1626.7 1859.9 L1627.9 1858.9 L1629.0 1859.8 L1630.2 1860.4 L1631.4 1858.9 L1632.6 1861.4 L1633.7 1859.0 L1634.9 1861.4 L1636.1 1859.7 L1637.2 1823.2 L1638.4 1829.6 L1639.6 1859.4 L1640.8 1860.8 L1641.9 1861.1 L1643.1 1859.6 L1644.3 1861.0 L1645.4 1860.9 L1646.6 1859.1 L1647.8 1861.2 L1648.9 1829.6 L1650.1 1850.9 L1651.3 1861.1 L1652.5 1859.6 L1653.6 1859.1 L1654.8 1861.1 L1656.0 1860.6 L1657.1 1830.0 L1658.3 1829.6 L1659.5 1859.7 L1660.7 1860.7 L1661.8 1860.5 L1663.0 1829.6 L1664.2 1859.0 L1665.3 1860.7 L1666.5 1860.6 L1667.7 1860.1 L1668.9 1859.0 L1670.0 1828.3 L1671.2 1859.6 L1672.4 1861.3 L1673.5 1860.8 L1674.7 1859.6 L1675.9 1861.0 L1677.0 1775.8 L1678.2 1775.6 L1679.4 1859.1 L1680.6 1860.2 L1681.7 1827.7 L1682.9 1850.2 L1684.1 1861.5 L1685.2 1860.1 L1686.4 1859.3 L1687.6 1859.6 L1688.8 1861.3 L1689.9 1860.2 L1691.1 1843.7 L1692.3 1860.9 L1693.4 1860.8 L1694.6 1859.6 L1695.8 1813.6 L1696.9 1845.3 L1698.1 1815.0 L1699.3 1845.7 L1700.5 1860.4 L1701.6 1859.1 L1702.8 1859.5 L1704.0 1858.9 L1705.1 1859.2 L1706.3 1858.9 L1707.5 1860.9 L1708.7 1858.8 L1709.8 1859.3 L1711.0 1860.1 L1712.2 1860.8 L1713.3 1860.5 L1714.5 1860.3 L1715.7 1823.2 L1716.9 1848.6 L1718.0 1859.1 L1719.2 1860.8 L1720.4 1860.0 L1721.5 1860.8 L1722.7 1858.9 L1723.9 1859.7 L1725.0 1765.4 L1726.2 1828.4 L1727.4 1861.2 L1728.6 1860.4 L1729.7 1861.3 L1730.9 1859.8 L1732.1 1861.0 L1733.2 1860.0 L1734.4 1860.7 L1735.6 1860.1 L1736.8 1861.5 L1737.9 1728.0 L1739.1 1815.3 L1740.3 1859.4 L1741.4 1859.1 L1742.6 1860.4 L1743.8 1861.2 L1744.9 1859.5 L1746.1 1860.5 L1747.3 1859.2 L1748.5 1859.5 L1749.6 1860.2 L1750.8 1859.0 L1752.0 1861.5 L1753.1 1823.2 L1754.3 1848.6 L1755.5 1859.8 L1756.7 1860.3 L1757.8 1860.4 L1759.0 1860.6 L1760.2 1860.1 L1761.3 1860.7 L1762.5 1859.9 L1763.7 1860.6 L1764.9 1858.9 L1766.0 1859.0 L1767.2 1860.0 L1768.4 1859.4 L1769.5 1796.0 L1770.7 1839.1 L1771.9 1860.5 L1773.0 1860.1 L1774.2 1860.4 L1775.4 1859.1 L1776.6 1860.3 L1777.7 1860.6 L1778.9 1861.0 L1780.1 1823.2 L1781.2 1848.6 L1782.4 1858.8 L1783.6 1861.1 L1784.8 1860.1 L1785.9 1859.8 L1787.1 1858.8 L1788.3 1860.4 L1789.4 1859.6 L1790.6 1859.2 L1791.8 1861.0 L1792.9 1860.8 L1794.1 1858.8 L1795.3 1779.0 L1796.5 1861.2 L1797.6 1860.1 L1798.8 1859.3 L1800.0 1860.6 L1801.1 1861.0 L1802.3 1859.0 L1803.5 1860.3 L1804.7 1859.1 L1805.8 1860.3 L1807.0 1861.4 L1808.2 1860.6 L1809.3 1860.7 L1810.5 1802.8 L1811.7 1841.5 L1812.9 1860.7 L1814.0 1859.3 L1815.2 1860.5 L1816.4 1860.7 L1817.5 1860.0 L1818.7 1861.3 L1819.9 1860.5 L1821.0 1860.7 L1822.2 1860.6 L1823.4 1861.3 L1824.6 1861.2 L1825.7 1859.3 L1826.9 1859.5 L1828.1 1860.9 L1829.2 1860.9 L1830.4 1823.2 L1831.6 1848.6 L1832.8 1859.8 L1833.9 1861.2 L1835.1 1860.8 L1836.3 1859.7 L1837.4 1860.4 L1838.6 1859.2 L1839.8 1861.2 L1841.0 1860.1 L1842.1 1860.7 L1843.3 1859.5 L1844.5 1859.0 L1845.6 1859.1 L1846.8 1861.4 L1848.0 1823.2 L1849.1 1859.6 L1850.3 1860.5 L1851.5 1861.2 L1852.7 1859.6 L1853.8 1861.0 L1855.0 1861.4 L1856.2 1861.0 L1857.3 1859.5 L1858.5 1859.6 L1859.7 1859.4 L1860.9 1859.2 L1862.0 1860.8 L1863.2 1860.9 L1864.4 1861.3 L1865.5 1859.5 L1866.7 1861.3 L1867.9 1859.0 L1869.0 1859.2 L1870.2 1861.4 L1871.4 1860.1 L1872.6 1859.4 L1873.7 1859.3 L1874.9 1858.8 L1876.1 1860.8 L1877.2 1860.4 L1878.4 1861.1 L1879.6 1860.9 L1880.8 1860.3 L1881.9 1772.2 L1883.1 1830.8 L1884.3 1860.0 L1885.4 1859.7 L1886.6 1859.4 L1887.8 1860.7 L1889.0 1861.3 L1890.1 1859.6 L1891.3 1860.6 L1892.5 1785.8 L1893.6 1835.5 L1894.8 1858.8 L1896.0 1860.2 L1897.1 1860.0 L1898.3 1859.7 L1899.5 1859.7 L1900.7 1861.1 L1901.8 1859.2 L1903.0 1859.8 L1904.2 1861.1 L1905.3 1859.5 L1906.5 1782.4 L1907.7 1834.3 L1908.9 1860.9 L1910.0 1859.8 L1911.2 1859.0 L1912.4 1860.1 L1913.5 1859.9 L1914.7 1861.1 L1915.9 1861.3 L1917.0 1861.0 L1918.2 1859.2 L1919.4 1860.7 L1920.6 1860.4 L1921.7 1859.7 L1922.9 1823.2 L1924.1 1848.6 L1925.2 1861.3 L1926.4 1858.8 L1927.6 1858.8 L1928.8 1859.3 L1929.9 1859.8 L1931.1 1858.9 L1932.3 1860.7 L1933.4 1861.4 L1934.6 1860.3 L1935.8 1860.5 L1937.0 1860.1 L1938.1 1861.2 L1939.3 1860.0 L1940.5 1806.2 L1941.6 1842.7 L1942.8 1860.9 L1944.0 1860.1 L1945.1 1860.4 L1946.3 1859.1 L1947.5 1859.4 L1948.7 1859.5 L1949.8 1860.4 L1951.0 1860.0 L1952.2 1859.4 L1953.3 1860.5 L1954.5 1860.9 L1955.7 1860.3 L1956.9 1859.1 L1958.0 1859.1 L1959.2 1860.6 L1960.4 1859.2 L1961.5 1859.5 L1962.7 1861.4 L1963.9 1860.0 L1965.1 1828.6 L1966.2 1861.0 L1967.4 1859.9 L1968.6 1859.3" fill="none" stroke="#5ba68c" stroke-width="2" stroke-linejoin="round"/>
<path d="M2008.9 1789.2 L2010.1 1836.7 L2011.2 1861.1 L2012.4 1861.3 L2013.6 1860.0 L2014.8 1859.7 L2015.9 1859.5 L2017.1 1859.4 L2018.3 1826.6 L2019.4 1860.7 L2020.6 1861.2 L2021.8 1859.7 L2022.9 1858.8 L2024.1 1861.3 L2025.3 1861.3 L2026.5 1861.0 L2027.6 1861.1 L2028.8 1859.0 L2030.0 1860.8 L2031.1 1859.8 L2032.3 1860.2 L2033.5 1861.2 L2034.7 1826.6 L2035.8 1849.8 L2037.0 1859.0 L2038.2 1860.9 L2039.3 1860.3 L2040.5 1859.4 L2041.7 1858.8 L2042.9 1861.1 L2044.0 1860.8 L2045.2 1860.7 L2046.4 1859.1 L2047.5 1859.9 L2048.7 1859.1 L2049.9 1860.5 L2051.0 1861.0 L2052.2 1860.7 L2053.4 1858.8 L2054.6 1826.6 L2055.7 1849.8 L2056.9 1860.6 L2058.1 1859.1 L2059.2 1859.3 L2060.4 1860.9 L2061.6 1861.5 L2062.8 1859.1 L2063.9 1861.1 L2065.1 1859.6 L2066.3 1860.1 L2067.4 1860.1 L2068.6 1860.9 L2069.8 1859.5 L2070.9 1860.8 L2072.1 1826.6 L2073.3 1860.5 L2074.5 1859.7 L2075.6 1859.6 L2076.8 1859.5 L2078.0 1860.4 L2079.1 1860.5 L2080.3 1858.8 L2081.5 1859.0 L2082.7 1860.5 L2083.8 1861.2 L2085.0 1859.0 L2086.2 1860.6 L2087.3 1860.6 L2088.5 1859.2 L2089.7 1858.8 L2090.9 1859.5 L2092.0 1826.6 L2093.2 1859.7 L2094.4 1860.0 L2095.5 1860.8 L2096.7 1859.5 L2097.9 1860.9 L2099.0 1860.1 L2100.2 1859.3 L2101.4 1859.3 L2102.6 1859.2 L2103.7 1861.4 L2104.9 1859.3 L2106.1 1826.6 L2107.2 1849.8 L2108.4 1861.3 L2109.6 1859.6 L2110.8 1859.3 L2111.9 1859.6 L2113.1 1860.9 L2114.3 1860.5 L2115.4 1826.6 L2116.6 1849.8 L2117.8 1860.8 L2119.0 1859.8 L2120.1 1762.0 L2121.3 1860.5" fill="none" stroke="#5ba68c" stroke-width="2" stroke-linejoin="round"/>
<line x1="1259.0" y1="2104.7" x2="2215.5" y2="2104.7" stroke="#e6e9ef" stroke-width="1" stroke-dasharray="4 4"/>
<line x1="1259.0" y1="2142.1" x2="2215.5" y2="2142.1" stroke="#e6e9ef" stroke-width="1" stroke-dasharray="4 4"/>
<line x1="1259.0" y1="2179.5" x2="2215.5" y2="2179.5" stroke="#e6e9ef" stroke-width="1" stroke-dasharray="4 4"/>
<line x1="1259.0" y1="2217.0" x2="2215.5" y2="2217.0" stroke="#e6e9ef" stroke-width="1" stroke-dasharray="4 4"/>
<line x1="1259.0" y1="2254.4" x2="2215.5" y2="2254.4" stroke="#e6e9ef" stroke-width="1" stroke-dasharray="4 4"/>
<line x1="1259.0" y1="2291.8" x2="2215.5" y2="2291.8" stroke="#e6e9ef" stroke-width="1" stroke-dasharray="4 4"/>
<line x1="1259" y1="2104.7" x2="1259" y2="2291.8" stroke="#e4e7ed"/>
<line x1="1259" y1="2291.8" x2="2215.5" y2="2291.8" stroke="#e4e7ed"/>
<line x1="1322.8" y1="2104.7" x2="1322.8" y2="2303.8" stroke="#aeb3bb" stroke-width="1"/>
<line x1="1405.4" y1="2104.7" x2="1405.4" y2="2303.8" stroke="#aeb3bb" stroke-width="1"/>
<line x1="1488.1" y1="2104.7" x2="1488.1" y2="2303.8" stroke="#aeb3bb" stroke-width="1"/>
<line x1="1570.7" y1="2104.7" x2="1570.7" y2="2303.8" stroke="#aeb3bb" stroke-width="1"/>
<line x1="1653.3" y1="2104.7" x2="1653.3" y2="2303.8" stroke="#aeb3bb" stroke-width="1"/>
<line x1="1735.9" y1="2104.7" x2="1735.9" y2="2303.8" stroke="#aeb3bb" stroke-width="1"/>
<line x1="1818.6" y1="2104.7" x2="1818.6" y2="2303.8" stroke="#aeb3bb" stroke-width="1"/>
<line x1="1901.2" y1="2104.7" x2="1901.2" y2="2303.8" stroke="#aeb3bb" stroke-width="1"/>
<line x1="1983.8" y1="2104.7" x2="1983.8" y2="2303.8" stroke="#aeb3bb" stroke-width="1"/>
<line x1="2066.5" y1="2104.7" x2="2066.5" y2="2303.8" stroke="#aeb3bb" stroke-width="1"/>
<line x1="2149.1" y1="2104.7" x2="2149.1" y2="2303.8" stroke="#aeb3bb" stroke-width="1"/>
<path d="M1289.7 2104.7 L1289.7 2114.1 L1303.5 2115.6 L1317.3 2117.0 L1318.7 2121.5 L1320.0 2115.9 L1321.4 2123.4 L1322.8 2114.1 L1324.2 2109.2 L1340.4 2108.8 L1362.6 2110.8 L1384.8 2112.7 L1386.1 2112.9 L1408.5 2118.2 L1430.9 2123.4 L1431.6 2124.2 L1440.2 2130.3 L1448.8 2136.5 L1449.5 2185.2 L1450.9 2115.9 L1451.6 2110.0 L1452.3 2111.4 L1452.9 2114.9 L1453.6 2108.5 L1454.3 2110.2 L1455.0 2121.5 L1455.7 2118.5 L1456.4 2115.1 L1457.1 2115.1 L1457.8 2113.4 L1458.5 2115.6 L1459.1 2142.9 L1459.8 2127.6 L1460.5 2112.7 L1461.2 2119.2 L1461.9 2120.0 L1462.6 2117.8 L1463.3 2120.3 L1464.0 2108.8 L1464.6 2109.8 L1465.3 2112.2 L1466.0 2110.6 L1466.7 2111.6 L1467.4 2114.3 L1468.1 2119.7 L1468.8 2120.2 L1469.5 2121.4 L1470.2 2109.3 L1470.8 2120.9 L1471.5 2114.1 L1472.2 2109.7 L1472.9 2135.4 L1473.6 2108.7 L1474.3 2121.3 L1475.0 2117.8 L1475.7 2109.2 L1476.4 2117.3 L1477.0 2108.6 L1477.7 2108.6 L1478.4 2110.9 L1479.1 2121.2 L1479.8 2121.5 L1480.5 2108.7 L1481.2 2108.5 L1481.9 2111.9 L1482.6 2126.3 L1483.2 2110.7 L1483.9 2119.6 L1484.6 2112.5 L1485.3 2115.2 L1486.0 2113.9 L1486.7 2120.4 L1487.4 2112.2 L1488.1 2110.0 L1488.7 2121.1 L1489.4 2121.9 L1490.1 2126.3 L1490.8 2134.6 L1491.5 2114.9 L1492.2 2115.8 L1492.9 2116.2 L1493.6 2108.5 L1494.3 2115.7 L1494.9 2110.1 L1495.6 2114.4 L1496.3 2111.3 L1497.0 2111.4 L1497.7 2110.6 L1498.4 2128.5 L1499.1 2116.7 L1499.8 2109.8 L1500.5 2110.0 L1501.1 2112.2 L1501.8 2108.9 L1502.5 2111.0 L1503.2 2112.2 L1503.9 2109.4 L1504.6 2115.3 L1505.3 2112.4 L1506.0 2109.0 L1506.7 2109.2 L1515.1 2123.6 L1523.6 2138.0 L1525.2 2127.2 L1526.6 2110.3 L1527.3 2108.7 L1528.0 2116.9 L1528.7 2109.5 L1529.4 2113.9 L1530.1 2110.1 L1530.8 2109.6 L1531.4 2109.4 L1532.1 2110.9 L1532.8 2110.8 L1533.5 2125.4 L1534.2 2117.6 L1534.9 2111.1 L1535.6 2118.4 L1536.3 2115.4 L1536.9 2114.2 L1537.6 2109.6 L1538.3 2109.0 L1539.0 2113.1 L1539.7 2132.7 L1540.4 2114.6 L1541.1 2117.9 L1541.8 2146.2 L1542.5 2108.5 L1543.1 2114.2 L1543.8 2110.9 L1544.5 2113.4 L1545.2 2109.2 L1545.9 2111.6 L1546.6 2110.2 L1547.3 2112.4 L1548.0 2108.5 L1548.7 2118.3 L1549.3 2127.9 L1550.0 2122.2 L1550.7 2109.4 L1551.4 2111.0 L1552.1 2116.9 L1552.8 2108.2 L1553.5 2107.9 L1554.2 2117.2 L1554.9 2112.0 L1555.5 2109.8 L1556.2 2141.4 L1556.9 2110.3 L1557.6 2110.0 L1558.3 2112.7 L1559.0 2110.5 L1559.7 2108.6 L1560.4 2113.3 L1561.0 2183.3 L1561.7 2113.6 L1562.4 2110.4 L1563.1 2114.7 L1563.8 2114.6 L1564.5 2109.1 L1565.2 2114.6 L1565.9 2111.0 L1566.6 2161.6 L1567.2 2110.4 L1567.9 2116.1 L1568.6 2111.5 L1569.3 2116.5 L1570.0 2117.7 L1570.7 2114.2 L1571.4 2112.8 L1572.1 2115.7 L1572.8 2117.5 L1573.4 2108.1 L1574.1 2123.7 L1574.8 2108.2 L1575.5 2114.3 L1576.2 2118.8 L1576.9 2130.0 L1577.6 2112.1 L1578.3 2108.1 L1579.0 2118.5 L1579.6 2147.7 L1580.3 2116.7 L1581.0 2108.6 L1581.7 2113.5 L1582.4 2110.7 L1583.1 2110.7 L1583.8 2110.9 L1584.5 2111.9 L1585.2 2110.9 L1585.8 2108.5 L1586.5 2115.6 L1587.2 2112.1 L1587.9 2113.9 L1588.6 2108.4 L1589.3 2115.4 L1590.0 2112.1 L1590.7 2115.0 L1591.3 2109.3 L1592.0 2113.1 L1592.7 2109.0 L1593.4 2118.8 L1594.1 2114.8 L1594.8 2117.1 L1595.5 2109.3 L1596.2 2107.7 L1596.9 2110.5 L1597.5 2110.3 L1598.2 2115.9 L1598.9 2119.5 L1599.6 2113.2 L1600.3 2116.8 L1601.0 2112.7 L1601.7 2115.0 L1602.4 2134.6 L1603.1 2119.0 L1603.7 2109.0 L1604.4 2115.0 L1605.1 2118.9 L1605.8 2109.1 L1606.5 2109.3 L1607.2 2114.8 L1607.9 2117.9 L1608.6 2117.3 L1609.3 2111.0 L1609.9 2108.0 L1610.6 2116.8 L1611.3 2110.2 L1612.0 2120.4 L1612.7 2111.1 L1613.4 2108.8 L1614.1 2118.9 L1614.8 2112.5 L1615.4 2109.4 L1616.1 2108.1 L1616.8 2118.1 L1617.5 2118.6 L1618.2 2115.8 L1618.9 2109.6 L1619.6 2114.0 L1620.3 2109.3 L1621.0 2119.0 L1621.6 2112.4 L1622.3 2111.8 L1623.0 2115.0 L1623.7 2112.8 L1624.4 2113.9 L1625.1 2108.6 L1625.8 2114.0 L1626.5 2118.5 L1627.2 2110.0 L1627.8 2113.2 L1628.5 2113.9 L1629.2 2109.8 L1629.9 2107.9 L1630.6 2115.5 L1631.3 2115.3 L1632.0 2109.3 L1632.7 2126.5 L1633.4 2109.2 L1634.0 2110.2 L1634.7 2110.8 L1635.4 2115.8 L1636.1 2117.0 L1636.8 2109.4 L1637.5 2108.1 L1638.2 2115.1 L1638.9 2108.7 L1639.5 2115.4 L1640.2 2115.5 L1640.9 2108.4 L1641.6 2108.7 L1642.3 2112.8 L1643.0 2109.2 L1643.7 2107.8 L1644.4 2117.8 L1645.1 2110.5 L1645.7 2113.0 L1646.4 2119.3 L1647.1 2109.7 L1647.8 2111.7 L1648.5 2129.0 L1649.2 2114.1 L1649.9 2112.2 L1650.6 2108.7 L1651.3 2107.8 L1651.9 2113.9 L1652.6 2112.8 L1653.3 2117.8 L1654.0 2116.1 L1654.7 2107.8 L1655.4 2109.0 L1656.1 2112.4 L1656.8 2109.9 L1657.5 2114.6 L1658.1 2117.2 L1658.8 2118.4 L1659.5 2115.3 L1660.2 2116.4 L1660.9 2117.3 L1661.6 2115.6 L1662.3 2109.5 L1663.0 2108.8 L1663.6 2111.9 L1664.3 2112.4 L1665.0 2114.0 L1665.7 2111.5 L1666.4 2110.7 L1667.1 2138.0 L1667.8 2110.4 L1668.5 2112.3 L1669.2 2112.7 L1669.8 2116.0 L1670.5 2111.4 L1671.2 2108.8 L1671.9 2110.8 L1672.6 2107.7 L1673.3 2108.5 L1674.0 2180.3 L1674.7 2110.8 L1675.4 2107.8 L1676.0 2128.0 L1676.7 2108.9 L1677.4 2111.6 L1678.1 2113.6 L1678.8 2108.2 L1679.5 2115.1 L1680.2 2116.1 L1680.9 2118.5 L1681.6 2109.2 L1682.2 2116.5 L1682.9 2110.1 L1683.6 2114.4 L1684.3 2113.7 L1685.0 2108.0 L1685.7 2107.8 L1686.4 2114.0 L1687.1 2141.4 L1687.7 2111.6 L1688.4 2118.2 L1689.1 2107.8 L1689.8 2113.4 L1690.5 2108.0 L1691.2 2117.1 L1691.9 2110.6 L1692.6 2114.4 L1693.3 2108.6 L1693.9 2115.2 L1694.6 2112.6 L1695.3 2110.3 L1696.0 2109.0 L1696.7 2111.7 L1697.4 2108.5 L1698.1 2113.3 L1698.8 2110.6 L1699.5 2108.4 L1700.1 2107.7 L1700.8 2115.6 L1701.5 2108.1 L1702.2 2117.0 L1702.9 2117.6 L1703.6 2111.3 L1704.3 2115.2 L1705.0 2110.4 L1705.7 2110.7 L1706.3 2108.1 L1707.0 2108.1 L1707.7 2114.0 L1708.4 2107.8 L1709.1 2113.9 L1709.8 2107.7 L1710.5 2119.1 L1711.2 2112.7 L1711.8 2116.0 L1712.5 2116.1 L1713.2 2108.7 L1713.9 2108.0 L1714.6 2125.5 L1715.3 2108.8 L1716.0 2108.0 L1716.7 2109.0 L1717.4 2113.5 L1718.0 2115.6 L1718.7 2110.1 L1719.4 2111.3 L1720.1 2116.8 L1720.8 2130.9 L1721.5 2112.4 L1722.2 2115.1 L1722.9 2110.1 L1723.6 2107.9 L1724.2 2115.2 L1724.9 2113.9 L1725.6 2108.9 L1726.3 2119.6 L1727.0 2111.1 L1727.7 2108.9 L1728.4 2118.4 L1729.1 2117.5 L1729.8 2113.4 L1730.4 2112.4 L1731.1 2118.7 L1731.8 2118.8 L1732.5 2115.8 L1733.2 2119.6 L1733.9 2109.6 L1734.6 2108.6 L1735.3 2115.0 L1735.9 2112.2 L1736.6 2107.8 L1737.3 2109.4 L1738.0 2110.1 L1738.7 2115.4 L1739.4 2108.1 L1740.1 2110.8 L1740.8 2108.4 L1741.5 2114.7 L1742.1 2119.3 L1742.8 2110.4 L1743.5 2109.8 L1744.2 2112.3 L1744.9 2110.3 L1745.6 2109.5 L1746.3 2117.7 L1747.0 2109.6 L1747.7 2118.7 L1748.3 2112.3 L1749.0 2108.5 L1749.7 2108.8 L1750.4 2111.5 L1751.1 2116.0 L1751.8 2107.8 L1752.5 2107.7 L1753.2 2110.0 L1753.9 2112.5 L1754.5 2109.8 L1755.2 2116.3 L1755.9 2117.0 L1756.6 2113.6 L1757.3 2118.1 L1758.0 2109.2 L1758.7 2115.6 L1759.4 2112.0 L1760.1 2112.6 L1760.7 2120.1 L1761.4 2117.9 L1762.1 2111.5 L1762.8 2118.4 L1763.5 2113.3 L1764.2 2112.2 L1764.9 2108.6 L1765.6 2119.5 L1766.2 2110.8 L1766.9 2111.4 L1767.6 2111.3 L1768.3 2108.4 L1769.0 2112.2 L1769.7 2117.1 L1770.4 2118.5 L1771.1 2107.8 L1771.8 2112.6 L1772.4 2109.5 L1773.1 2118.1 L1773.8 2114.2 L1774.5 2112.1 L1775.2 2119.0 L1775.9 2108.7 L1776.6 2152.2 L1777.3 2116.7 L1778.0 2109.4 L1778.6 2118.7 L1779.3 2110.6 L1780.0 2108.3 L1780.7 2119.3 L1781.4 2109.0 L1782.1 2108.0 L1782.8 2115.4 L1783.5 2113.7 L1784.2 2107.7 L1784.8 2119.0 L1785.5 2109.4 L1786.2 2109.4 L1786.9 2107.8 L1787.6 2118.9 L1788.3 2118.0 L1789.0 2119.5 L1789.7 2113.9 L1790.3 2107.8 L1791.0 2108.6 L1791.7 2116.6 L1792.4 2107.8 L1793.1 2112.4 L1793.8 2108.1 L1794.5 2119.4 L1795.2 2125.3 L1795.9 2108.2 L1796.5 2118.2 L1797.2 2108.7 L1797.9 2119.6 L1798.6 2109.2 L1799.3 2118.8 L1800.0 2114.8 L1800.7 2107.7 L1801.4 2115.4 L1802.1 2112.8 L1802.7 2112.4 L1803.4 2112.4 L1804.1 2108.8 L1804.8 2118.5 L1805.5 2108.6 L1806.2 2116.9 L1806.9 2109.3 L1807.6 2107.8 L1808.3 2110.8 L1808.9 2123.8 L1809.6 2116.2 L1810.3 2114.5 L1811.0 2115.7 L1811.7 2112.5 L1812.4 2108.4 L1813.1 2109.9 L1813.8 2110.4 L1814.4 2110.3 L1815.1 2119.3 L1815.8 2117.3 L1816.5 2109.5 L1817.2 2109.4 L1817.9 2111.9 L1818.6 2110.1 L1819.3 2109.5 L1820.0 2111.3 L1820.6 2112.3 L1821.3 2119.4 L1822.0 2111.2 L1822.7 2107.9 L1823.4 2117.0 L1824.1 2107.9 L1824.8 2156.7 L1825.5 2110.4 L1826.2 2112.6 L1826.8 2111.1 L1827.5 2114.9 L1828.2 2109.7 L1828.9 2110.7 L1829.6 2114.0 L1830.3 2113.0 L1831.0 2108.9 L1831.7 2113.5 L1832.4 2108.0 L1833.0 2119.2 L1833.7 2118.3 L1834.4 2115.3 L1835.1 2116.9 L1835.8 2111.2 L1836.5 2108.2 L1837.2 2110.5 L1837.9 2117.8 L1838.5 2108.7 L1839.2 2113.2 L1839.9 2107.7 L1840.6 2107.7 L1841.3 2108.6 L1842.0 2110.6 L1842.7 2111.1 L1843.4 2114.1 L1844.1 2108.1 L1844.7 2114.6 L1845.4 2111.2 L1846.1 2119.5 L1846.8 2107.7 L1847.5 2111.0 L1848.2 2116.7 L1848.9 2110.9 L1849.6 2117.6 L1850.3 2110.6 L1850.9 2130.6 L1851.6 2112.2 L1852.3 2108.0 L1853.0 2111.5 L1853.7 2112.4 L1854.4 2119.3 L1855.1 2112.3 L1855.8 2109.6 L1856.5 2108.3 L1857.1 2113.5 L1857.8 2115.8 L1858.5 2117.2 L1859.2 2108.8 L1859.9 2111.1 L1860.6 2108.7 L1861.3 2108.9 L1862.0 2118.6 L1862.6 2118.1 L1863.3 2108.9 L1864.0 2107.8 L1864.7 2110.5 L1865.4 2116.8 L1866.1 2110.7 L1866.8 2108.6 L1867.5 2109.3 L1868.2 2110.1 L1868.8 2108.9 L1869.5 2112.8 L1870.2 2114.7 L1870.9 2114.3 L1871.6 2108.6 L1872.3 2110.7 L1873.0 2113.2 L1873.7 2111.2 L1874.4 2116.0 L1875.0 2111.8 L1875.7 2109.4 L1876.4 2114.5 L1877.1 2116.5 L1877.8 2110.1 L1878.5 2111.7 L1879.2 2115.0 L1879.9 2115.2 L1880.6 2108.1 L1881.2 2117.1 L1881.9 2112.4 L1882.6 2111.3 L1883.3 2113.0 L1884.0 2108.8 L1884.7 2115.6 L1885.4 2109.7 L1886.1 2117.7 L1886.7 2119.5 L1887.4 2130.9 L1888.1 2107.7 L1888.8 2115.2 L1889.5 2111.7 L1890.2 2109.2 L1890.9 2112.7 L1891.6 2108.1 L1892.3 2109.9 L1892.9 2108.6 L1893.6 2108.7 L1894.3 2112.9 L1895.0 2107.8 L1895.7 2108.8 L1896.4 2108.5 L1897.1 2112.4 L1897.8 2117.4 L1898.5 2110.7 L1899.1 2109.4 L1899.8 2118.6 L1900.5 2118.7 L1901.2 2111.1 L1901.9 2119.0 L1902.6 2112.9 L1903.3 2108.8 L1904.0 2119.4 L1904.7 2154.1 L1905.3 2108.1 L1906.0 2115.5 L1906.7 2111.4 L1907.4 2109.9 L1908.1 2108.5 L1908.8 2109.4 L1909.5 2110.4 L1910.2 2115.4 L1910.9 2114.5 L1911.5 2116.3 L1912.2 2112.5 L1912.9 2113.6 L1913.6 2113.8 L1914.3 2115.6 L1915.0 2118.8 L1915.7 2115.1 L1916.4 2107.8 L1917.0 2115.4 L1917.7 2108.8 L1918.4 2119.3 L1919.1 2111.7 L1919.8 2108.4 L1920.5 2114.2 L1921.2 2108.5 L1921.9 2113.6 L1922.6 2109.8 L1923.2 2116.0 L1923.9 2111.4 L1924.6 2113.4 L1925.3 2119.8 L1926.0 2114.7 L1926.7 2107.8 L1927.4 2109.9 L1928.1 2108.1 L1928.8 2110.6 L1929.4 2111.2 L1930.1 2109.9 L1930.8 2111.3 L1931.5 2110.1 L1932.2 2110.9 L1932.9 2109.8 L1933.6 2112.5 L1934.3 2110.0 L1935.0 2110.1 L1935.6 2112.8 L1936.3 2115.7 L1937.0 2114.1 L1937.7 2112.2 L1938.4 2109.7 L1939.1 2116.2 L1939.8 2108.1 L1940.5 2113.0 L1941.1 2127.2 L1942.5 2168.3 L1943.9 2170.4 L1944.6 2184.8 L1945.3 2169.1 L1946.0 2165.4 L1946.7 2171.3 L1947.3 2182.5 L1948.0 2164.6 L1948.7 2164.6 L1949.4 2180.9 L1950.1 2164.8 L1950.8 2168.0 L1951.5 2167.9 L1952.2 2165.5 L1952.9 2130.9 L1953.5 2164.8 L1954.2 2166.3 L1954.9 2177.6 L1955.6 2178.2 L1956.3 2174.7 L1957.0 2175.7 L1957.7 2183.6 L1958.4 2164.9 L1959.1 2182.6 L1959.7 2176.7 L1960.4 2169.5 L1961.1 2174.0 L1961.8 2168.0 L1962.5 2167.2 L1963.2 2167.2 L1963.9 2175.2 L1964.6 2183.5 L1965.2 2166.4 L1965.9 2164.9 L1966.6 2173.6 L1967.3 2167.0 L1968.0 2165.2 L1968.7 2171.7 L1969.4 2181.4 L1970.1 2168.6 L1970.8 2164.7 L1971.4 2177.7 L1972.1 2177.1 L1972.8 2166.7 L1973.5 2166.3 L1974.2 2175.0 L1974.9 2165.2 L1975.6 2171.3 L1976.3 2171.8 L1977.0 2166.4 L1977.6 2175.1 L1978.3 2182.3 L1979.0 2181.6 L1979.7 2176.7 L1980.4 2165.6 L1981.1 2181.8 L1981.8 2173.8 L1982.5 2167.8 L1983.2 2182.0 L1983.8 2127.2 L1985.2 2110.7 L1987.3 2111.4 L1989.3 2166.8 L1993.5 2187.4 L1994.9 2217.0 L1997.6 2265.6 L1999.0 2208.0 L2000.4 2224.4 L2001.7 2162.0 L2003.1 2165.3 L2003.8 2174.2 L2004.5 2166.8 L2005.2 2175.9 L2005.9 2164.6 L2006.6 2166.8 L2007.3 2176.8 L2007.9 2164.9 L2008.6 2166.1 L2009.3 2176.1 L2010.0 2175.5 L2010.7 2166.7 L2011.4 2169.7 L2012.1 2167.8 L2012.8 2166.6 L2013.4 2176.1 L2014.1 2174.0 L2014.8 2166.2 L2015.5 2165.3 L2016.2 2175.5 L2016.9 2169.9 L2017.6 2168.1 L2018.3 2175.5 L2019.0 2166.5 L2019.6 2165.7 L2020.3 2166.8 L2021.0 2165.0 L2021.7 2167.8 L2022.4 2171.3 L2023.1 2166.2 L2023.8 2170.1 L2024.5 2174.9 L2025.2 2165.5 L2025.8 2165.1 L2026.5 2169.7 L2027.9 2109.2 L2033.4 2108.4 L2038.9 2109.2 L2039.6 2109.9 L2051.7 2118.0 L2063.7 2126.0 L2066.5 2111.8 L2067.8 2143.1 L2068.5 2145.3 L2069.2 2144.6 L2069.9 2145.3 L2070.6 2141.3 L2071.3 2145.2 L2072.0 2145.8 L2072.7 2143.7 L2073.4 2155.8 L2074.0 2145.2 L2074.7 2144.8 L2075.4 2149.3 L2076.1 2174.3 L2076.8 2141.3 L2077.5 2154.4 L2078.2 2151.8 L2078.9 2152.5 L2079.6 2140.4 L2080.2 2140.8 L2080.9 2144.8 L2081.6 2150.9 L2082.3 2148.6 L2083.0 2181.4 L2083.7 2159.3 L2084.4 2142.5 L2085.1 2140.3 L2085.8 2160.8 L2086.4 2153.8 L2087.1 2149.1 L2087.8 2147.6 L2088.5 2153.3 L2089.2 2146.1 L2089.9 2141.8 L2090.6 2140.9 L2091.3 2144.7 L2091.9 2148.4 L2092.6 2149.6 L2093.3 2152.2 L2094.0 2141.9 L2094.7 2153.0 L2095.4 2143.9 L2096.1 2149.0 L2096.8 2143.2 L2097.5 2150.5 L2098.1 2140.5 L2098.8 2149.6 L2099.5 2144.1 L2100.2 2144.5 L2100.9 2140.7 L2101.6 2147.2 L2102.3 2154.0 L2103.0 2144.9 L2103.7 2147.2 L2104.3 2145.5 L2105.0 2182.2 L2105.7 2141.5 L2106.4 2142.7 L2107.1 2140.5 L2107.8 2144.7 L2108.5 2141.6 L2109.2 2141.0 L2109.9 2150.8 L2110.5 2141.6 L2111.2 2144.8 L2111.9 2142.6 L2112.6 2151.2 L2113.3 2140.2 L2114.0 2163.1 L2114.7 2179.5 L2115.4 2147.6 L2116.0 2145.5 L2116.7 2145.8 L2117.4 2178.8 L2118.1 2143.5 L2118.8 2144.2 L2119.5 2160.3 L2120.2 2146.9 L2120.9 2149.2 L2121.6 2140.5 L2122.2 2141.9 L2122.9 2141.0 L2123.6 2142.1 L2124.3 2151.3 L2125.0 2141.1 L2125.7 2169.7 L2126.4 2151.8 L2127.1 2149.0 L2127.8 2154.7 L2128.4 2142.8 L2129.1 2141.4 L2129.8 2140.7 L2130.5 2142.1 L2131.2 2107.5 L2132.6 2108.4 L2143.6 2112.0 L2154.6 2115.6 L2156.0 2115.6 L2178.7 2116.3 L2201.4 2117.0 L2201.4 2104.7 Z" fill="rgba(96,146,192,0.32)"/>
<line x1="1289.7" y1="2104.7" x2="2201.4" y2="2104.7" stroke="#7fbfa8" stroke-width="2"/>
<path d="M1289.7 2114.1 L1303.5 2115.6 L1317.3 2117.0 L1318.7 2121.5 L1320.0 2115.9 L1321.4 2123.4 L1322.8 2114.1 L1324.2 2109.2 L1340.4 2108.8 L1362.6 2110.8 L1384.8 2112.7 L1386.1 2112.9 L1408.5 2118.2 L1430.9 2123.4 L1431.6 2124.2 L1440.2 2130.3 L1448.8 2136.5 L1449.5 2185.2 L1450.9 2115.9 L1451.6 2110.0 L1452.3 2111.4 L1452.9 2114.9 L1453.6 2108.5 L1454.3 2110.2 L1455.0 2121.5 L1455.7 2118.5 L1456.4 2115.1 L1457.1 2115.1 L1457.8 2113.4 L1458.5 2115.6 L1459.1 2142.9 L1459.8 2127.6 L1460.5 2112.7 L1461.2 2119.2 L1461.9 2120.0 L1462.6 2117.8 L1463.3 2120.3 L1464.0 2108.8 L1464.6 2109.8 L1465.3 2112.2 L1466.0 2110.6 L1466.7 2111.6 L1467.4 2114.3 L1468.1 2119.7 L1468.8 2120.2 L1469.5 2121.4 L1470.2 2109.3 L1470.8 2120.9 L1471.5 2114.1 L1472.2 2109.7 L1472.9 2135.4 L1473.6 2108.7 L1474.3 2121.3 L1475.0 2117.8 L1475.7 2109.2 L1476.4 2117.3 L1477.0 2108.6 L1477.7 2108.6 L1478.4 2110.9 L1479.1 2121.2 L1479.8 2121.5 L1480.5 2108.7 L1481.2 2108.5 L1481.9 2111.9 L1482.6 2126.3 L1483.2 2110.7 L1483.9 2119.6 L1484.6 2112.5 L1485.3 2115.2 L1486.0 2113.9 L1486.7 2120.4 L1487.4 2112.2 L1488.1 2110.0 L1488.7 2121.1 L1489.4 2121.9 L1490.1 2126.3 L1490.8 2134.6 L1491.5 2114.9 L1492.2 2115.8 L1492.9 2116.2 L1493.6 2108.5 L1494.3 2115.7 L1494.9 2110.1 L1495.6 2114.4 L1496.3 2111.3 L1497.0 2111.4 L1497.7 2110.6 L1498.4 2128.5 L1499.1 2116.7 L1499.8 2109.8 L1500.5 2110.0 L1501.1 2112.2 L1501.8 2108.9 L1502.5 2111.0 L1503.2 2112.2 L1503.9 2109.4 L1504.6 2115.3 L1505.3 2112.4 L1506.0 2109.0 L1506.7 2109.2 L1515.1 2123.6 L1523.6 2138.0 L1525.2 2127.2 L1526.6 2110.3 L1527.3 2108.7 L1528.0 2116.9 L1528.7 2109.5 L1529.4 2113.9 L1530.1 2110.1 L1530.8 2109.6 L1531.4 2109.4 L1532.1 2110.9 L1532.8 2110.8 L1533.5 2125.4 L1534.2 2117.6 L1534.9 2111.1 L1535.6 2118.4 L1536.3 2115.4 L1536.9 2114.2 L1537.6 2109.6 L1538.3 2109.0 L1539.0 2113.1 L1539.7 2132.7 L1540.4 2114.6 L1541.1 2117.9 L1541.8 2146.2 L1542.5 2108.5 L1543.1 2114.2 L1543.8 2110.9 L1544.5 2113.4 L1545.2 2109.2 L1545.9 2111.6 L1546.6 2110.2 L1547.3 2112.4 L1548.0 2108.5 L1548.7 2118.3 L1549.3 2127.9 L1550.0 2122.2 L1550.7 2109.4 L1551.4 2111.0 L1552.1 2116.9 L1552.8 2108.2 L1553.5 2107.9 L1554.2 2117.2 L1554.9 2112.0 L1555.5 2109.8 L1556.2 2141.4 L1556.9 2110.3 L1557.6 2110.0 L1558.3 2112.7 L1559.0 2110.5 L1559.7 2108.6 L1560.4 2113.3 L1561.0 2183.3 L1561.7 2113.6 L1562.4 2110.4 L1563.1 2114.7 L1563.8 2114.6 L1564.5 2109.1 L1565.2 2114.6 L1565.9 2111.0 L1566.6 2161.6 L1567.2 2110.4 L1567.9 2116.1 L1568.6 2111.5 L1569.3 2116.5 L1570.0 2117.7 L1570.7 2114.2 L1571.4 2112.8 L1572.1 2115.7 L1572.8 2117.5 L1573.4 2108.1 L1574.1 2123.7 L1574.8 2108.2 L1575.5 2114.3 L1576.2 2118.8 L1576.9 2130.0 L1577.6 2112.1 L1578.3 2108.1 L1579.0 2118.5 L1579.6 2147.7 L1580.3 2116.7 L1581.0 2108.6 L1581.7 2113.5 L1582.4 2110.7 L1583.1 2110.7 L1583.8 2110.9 L1584.5 2111.9 L1585.2 2110.9 L1585.8 2108.5 L1586.5 2115.6 L1587.2 2112.1 L1587.9 2113.9 L1588.6 2108.4 L1589.3 2115.4 L1590.0 2112.1 L1590.7 2115.0 L1591.3 2109.3 L1592.0 2113.1 L1592.7 2109.0 L1593.4 2118.8 L1594.1 2114.8 L1594.8 2117.1 L1595.5 2109.3 L1596.2 2107.7 L1596.9 2110.5 L1597.5 2110.3 L1598.2 2115.9 L1598.9 2119.5 L1599.6 2113.2 L1600.3 2116.8 L1601.0 2112.7 L1601.7 2115.0 L1602.4 2134.6 L1603.1 2119.0 L1603.7 2109.0 L1604.4 2115.0 L1605.1 2118.9 L1605.8 2109.1 L1606.5 2109.3 L1607.2 2114.8 L1607.9 2117.9 L1608.6 2117.3 L1609.3 2111.0 L1609.9 2108.0 L1610.6 2116.8 L1611.3 2110.2 L1612.0 2120.4 L1612.7 2111.1 L1613.4 2108.8 L1614.1 2118.9 L1614.8 2112.5 L1615.4 2109.4 L1616.1 2108.1 L1616.8 2118.1 L1617.5 2118.6 L1618.2 2115.8 L1618.9 2109.6 L1619.6 2114.0 L1620.3 2109.3 L1621.0 2119.0 L1621.6 2112.4 L1622.3 2111.8 L1623.0 2115.0 L1623.7 2112.8 L1624.4 2113.9 L1625.1 2108.6 L1625.8 2114.0 L1626.5 2118.5 L1627.2 2110.0 L1627.8 2113.2 L1628.5 2113.9 L1629.2 2109.8 L1629.9 2107.9 L1630.6 2115.5 L1631.3 2115.3 L1632.0 2109.3 L1632.7 2126.5 L1633.4 2109.2 L1634.0 2110.2 L1634.7 2110.8 L1635.4 2115.8 L1636.1 2117.0 L1636.8 2109.4 L1637.5 2108.1 L1638.2 2115.1 L1638.9 2108.7 L1639.5 2115.4 L1640.2 2115.5 L1640.9 2108.4 L1641.6 2108.7 L1642.3 2112.8 L1643.0 2109.2 L1643.7 2107.8 L1644.4 2117.8 L1645.1 2110.5 L1645.7 2113.0 L1646.4 2119.3 L1647.1 2109.7 L1647.8 2111.7 L1648.5 2129.0 L1649.2 2114.1 L1649.9 2112.2 L1650.6 2108.7 L1651.3 2107.8 L1651.9 2113.9 L1652.6 2112.8 L1653.3 2117.8 L1654.0 2116.1 L1654.7 2107.8 L1655.4 2109.0 L1656.1 2112.4 L1656.8 2109.9 L1657.5 2114.6 L1658.1 2117.2 L1658.8 2118.4 L1659.5 2115.3 L1660.2 2116.4 L1660.9 2117.3 L1661.6 2115.6 L1662.3 2109.5 L1663.0 2108.8 L1663.6 2111.9 L1664.3 2112.4 L1665.0 2114.0 L1665.7 2111.5 L1666.4 2110.7 L1667.1 2138.0 L1667.8 2110.4 L1668.5 2112.3 L1669.2 2112.7 L1669.8 2116.0 L1670.5 2111.4 L1671.2 2108.8 L1671.9 2110.8 L1672.6 2107.7 L1673.3 2108.5 L1674.0 2180.3 L1674.7 2110.8 L1675.4 2107.8 L1676.0 2128.0 L1676.7 2108.9 L1677.4 2111.6 L1678.1 2113.6 L1678.8 2108.2 L1679.5 2115.1 L1680.2 2116.1 L1680.9 2118.5 L1681.6 2109.2 L1682.2 2116.5 L1682.9 2110.1 L1683.6 2114.4 L1684.3 2113.7 L1685.0 2108.0 L1685.7 2107.8 L1686.4 2114.0 L1687.1 2141.4 L1687.7 2111.6 L1688.4 2118.2 L1689.1 2107.8 L1689.8 2113.4 L1690.5 2108.0 L1691.2 2117.1 L1691.9 2110.6 L1692.6 2114.4 L1693.3 2108.6 L1693.9 2115.2 L1694.6 2112.6 L1695.3 2110.3 L1696.0 2109.0 L1696.7 2111.7 L1697.4 2108.5 L1698.1 2113.3 L1698.8 2110.6 L1699.5 2108.4 L1700.1 2107.7 L1700.8 2115.6 L1701.5 2108.1 L1702.2 2117.0 L1702.9 2117.6 L1703.6 2111.3 L1704.3 2115.2 L1705.0 2110.4 L1705.7 2110.7 L1706.3 2108.1 L1707.0 2108.1 L1707.7 2114.0 L1708.4 2107.8 L1709.1 2113.9 L1709.8 2107.7 L1710.5 2119.1 L1711.2 2112.7 L1711.8 2116.0 L1712.5 2116.1 L1713.2 2108.7 L1713.9 2108.0 L1714.6 2125.5 L1715.3 2108.8 L1716.0 2108.0 L1716.7 2109.0 L1717.4 2113.5 L1718.0 2115.6 L1718.7 2110.1 L1719.4 2111.3 L1720.1 2116.8 L1720.8 2130.9 L1721.5 2112.4 L1722.2 2115.1 L1722.9 2110.1 L1723.6 2107.9 L1724.2 2115.2 L1724.9 2113.9 L1725.6 2108.9 L1726.3 2119.6 L1727.0 2111.1 L1727.7 2108.9 L1728.4 2118.4 L1729.1 2117.5 L1729.8 2113.4 L1730.4 2112.4 L1731.1 2118.7 L1731.8 2118.8 L1732.5 2115.8 L1733.2 2119.6 L1733.9 2109.6 L1734.6 2108.6 L1735.3 2115.0 L1735.9 2112.2 L1736.6 2107.8 L1737.3 2109.4 L1738.0 2110.1 L1738.7 2115.4 L1739.4 2108.1 L1740.1 2110.8 L1740.8 2108.4 L1741.5 2114.7 L1742.1 2119.3 L1742.8 2110.4 L1743.5 2109.8 L1744.2 2112.3 L1744.9 2110.3 L1745.6 2109.5 L1746.3 2117.7 L1747.0 2109.6 L1747.7 2118.7 L1748.3 2112.3 L1749.0 2108.5 L1749.7 2108.8 L1750.4 2111.5 L1751.1 2116.0 L1751.8 2107.8 L1752.5 2107.7 L1753.2 2110.0 L1753.9 2112.5 L1754.5 2109.8 L1755.2 2116.3 L1755.9 2117.0 L1756.6 2113.6 L1757.3 2118.1 L1758.0 2109.2 L1758.7 2115.6 L1759.4 2112.0 L1760.1 2112.6 L1760.7 2120.1 L1761.4 2117.9 L1762.1 2111.5 L1762.8 2118.4 L1763.5 2113.3 L1764.2 2112.2 L1764.9 2108.6 L1765.6 2119.5 L1766.2 2110.8 L1766.9 2111.4 L1767.6 2111.3 L1768.3 2108.4 L1769.0 2112.2 L1769.7 2117.1 L1770.4 2118.5 L1771.1 2107.8 L1771.8 2112.6 L1772.4 2109.5 L1773.1 2118.1 L1773.8 2114.2 L1774.5 2112.1 L1775.2 2119.0 L1775.9 2108.7 L1776.6 2152.2 L1777.3 2116.7 L1778.0 2109.4 L1778.6 2118.7 L1779.3 2110.6 L1780.0 2108.3 L1780.7 2119.3 L1781.4 2109.0 L1782.1 2108.0 L1782.8 2115.4 L1783.5 2113.7 L1784.2 2107.7 L1784.8 2119.0 L1785.5 2109.4 L1786.2 2109.4 L1786.9 2107.8 L1787.6 2118.9 L1788.3 2118.0 L1789.0 2119.5 L1789.7 2113.9 L1790.3 2107.8 L1791.0 2108.6 L1791.7 2116.6 L1792.4 2107.8 L1793.1 2112.4 L1793.8 2108.1 L1794.5 2119.4 L1795.2 2125.3 L1795.9 2108.2 L1796.5 2118.2 L1797.2 2108.7 L1797.9 2119.6 L1798.6 2109.2 L1799.3 2118.8 L1800.0 2114.8 L1800.7 2107.7 L1801.4 2115.4 L1802.1 2112.8 L1802.7 2112.4 L1803.4 2112.4 L1804.1 2108.8 L1804.8 2118.5 L1805.5 2108.6 L1806.2 2116.9 L1806.9 2109.3 L1807.6 2107.8 L1808.3 2110.8 L1808.9 2123.8 L1809.6 2116.2 L1810.3 2114.5 L1811.0 2115.7 L1811.7 2112.5 L1812.4 2108.4 L1813.1 2109.9 L1813.8 2110.4 L1814.4 2110.3 L1815.1 2119.3 L1815.8 2117.3 L1816.5 2109.5 L1817.2 2109.4 L1817.9 2111.9 L1818.6 2110.1 L1819.3 2109.5 L1820.0 2111.3 L1820.6 2112.3 L1821.3 2119.4 L1822.0 2111.2 L1822.7 2107.9 L1823.4 2117.0 L1824.1 2107.9 L1824.8 2156.7 L1825.5 2110.4 L1826.2 2112.6 L1826.8 2111.1 L1827.5 2114.9 L1828.2 2109.7 L1828.9 2110.7 L1829.6 2114.0 L1830.3 2113.0 L1831.0 2108.9 L1831.7 2113.5 L1832.4 2108.0 L1833.0 2119.2 L1833.7 2118.3 L1834.4 2115.3 L1835.1 2116.9 L1835.8 2111.2 L1836.5 2108.2 L1837.2 2110.5 L1837.9 2117.8 L1838.5 2108.7 L1839.2 2113.2 L1839.9 2107.7 L1840.6 2107.7 L1841.3 2108.6 L1842.0 2110.6 L1842.7 2111.1 L1843.4 2114.1 L1844.1 2108.1 L1844.7 2114.6 L1845.4 2111.2 L1846.1 2119.5 L1846.8 2107.7 L1847.5 2111.0 L1848.2 2116.7 L1848.9 2110.9 L1849.6 2117.6 L1850.3 2110.6 L1850.9 2130.6 L1851.6 2112.2 L1852.3 2108.0 L1853.0 2111.5 L1853.7 2112.4 L1854.4 2119.3 L1855.1 2112.3 L1855.8 2109.6 L1856.5 2108.3 L1857.1 2113.5 L1857.8 2115.8 L1858.5 2117.2 L1859.2 2108.8 L1859.9 2111.1 L1860.6 2108.7 L1861.3 2108.9 L1862.0 2118.6 L1862.6 2118.1 L1863.3 2108.9 L1864.0 2107.8 L1864.7 2110.5 L1865.4 2116.8 L1866.1 2110.7 L1866.8 2108.6 L1867.5 2109.3 L1868.2 2110.1 L1868.8 2108.9 L1869.5 2112.8 L1870.2 2114.7 L1870.9 2114.3 L1871.6 2108.6 L1872.3 2110.7 L1873.0 2113.2 L1873.7 2111.2 L1874.4 2116.0 L1875.0 2111.8 L1875.7 2109.4 L1876.4 2114.5 L1877.1 2116.5 L1877.8 2110.1 L1878.5 2111.7 L1879.2 2115.0 L1879.9 2115.2 L1880.6 2108.1 L1881.2 2117.1 L1881.9 2112.4 L1882.6 2111.3 L1883.3 2113.0 L1884.0 2108.8 L1884.7 2115.6 L1885.4 2109.7 L1886.1 2117.7 L1886.7 2119.5 L1887.4 2130.9 L1888.1 2107.7 L1888.8 2115.2 L1889.5 2111.7 L1890.2 2109.2 L1890.9 2112.7 L1891.6 2108.1 L1892.3 2109.9 L1892.9 2108.6 L1893.6 2108.7 L1894.3 2112.9 L1895.0 2107.8 L1895.7 2108.8 L1896.4 2108.5 L1897.1 2112.4 L1897.8 2117.4 L1898.5 2110.7 L1899.1 2109.4 L1899.8 2118.6 L1900.5 2118.7 L1901.2 2111.1 L1901.9 2119.0 L1902.6 2112.9 L1903.3 2108.8 L1904.0 2119.4 L1904.7 2154.1 L1905.3 2108.1 L1906.0 2115.5 L1906.7 2111.4 L1907.4 2109.9 L1908.1 2108.5 L1908.8 2109.4 L1909.5 2110.4 L1910.2 2115.4 L1910.9 2114.5 L1911.5 2116.3 L1912.2 2112.5 L1912.9 2113.6 L1913.6 2113.8 L1914.3 2115.6 L1915.0 2118.8 L1915.7 2115.1 L1916.4 2107.8 L1917.0 2115.4 L1917.7 2108.8 L1918.4 2119.3 L1919.1 2111.7 L1919.8 2108.4 L1920.5 2114.2 L1921.2 2108.5 L1921.9 2113.6 L1922.6 2109.8 L1923.2 2116.0 L1923.9 2111.4 L1924.6 2113.4 L1925.3 2119.8 L1926.0 2114.7 L1926.7 2107.8 L1927.4 2109.9 L1928.1 2108.1 L1928.8 2110.6 L1929.4 2111.2 L1930.1 2109.9 L1930.8 2111.3 L1931.5 2110.1 L1932.2 2110.9 L1932.9 2109.8 L1933.6 2112.5 L1934.3 2110.0 L1935.0 2110.1 L1935.6 2112.8 L1936.3 2115.7 L1937.0 2114.1 L1937.7 2112.2 L1938.4 2109.7 L1939.1 2116.2 L1939.8 2108.1 L1940.5 2113.0 L1941.1 2127.2 L1942.5 2168.3 L1943.9 2170.4 L1944.6 2184.8 L1945.3 2169.1 L1946.0 2165.4 L1946.7 2171.3 L1947.3 2182.5 L1948.0 2164.6 L1948.7 2164.6 L1949.4 2180.9 L1950.1 2164.8 L1950.8 2168.0 L1951.5 2167.9 L1952.2 2165.5 L1952.9 2130.9 L1953.5 2164.8 L1954.2 2166.3 L1954.9 2177.6 L1955.6 2178.2 L1956.3 2174.7 L1957.0 2175.7 L1957.7 2183.6 L1958.4 2164.9 L1959.1 2182.6 L1959.7 2176.7 L1960.4 2169.5 L1961.1 2174.0 L1961.8 2168.0 L1962.5 2167.2 L1963.2 2167.2 L1963.9 2175.2 L1964.6 2183.5 L1965.2 2166.4 L1965.9 2164.9 L1966.6 2173.6 L1967.3 2167.0 L1968.0 2165.2 L1968.7 2171.7 L1969.4 2181.4 L1970.1 2168.6 L1970.8 2164.7 L1971.4 2177.7 L1972.1 2177.1 L1972.8 2166.7 L1973.5 2166.3 L1974.2 2175.0 L1974.9 2165.2 L1975.6 2171.3 L1976.3 2171.8 L1977.0 2166.4 L1977.6 2175.1 L1978.3 2182.3 L1979.0 2181.6 L1979.7 2176.7 L1980.4 2165.6 L1981.1 2181.8 L1981.8 2173.8 L1982.5 2167.8 L1983.2 2182.0 L1983.8 2127.2 L1985.2 2110.7 L1987.3 2111.4 L1989.3 2166.8 L1993.5 2187.4 L1994.9 2217.0 L1997.6 2265.6 L1999.0 2208.0 L2000.4 2224.4 L2001.7 2162.0 L2003.1 2165.3 L2003.8 2174.2 L2004.5 2166.8 L2005.2 2175.9 L2005.9 2164.6 L2006.6 2166.8 L2007.3 2176.8 L2007.9 2164.9 L2008.6 2166.1 L2009.3 2176.1 L2010.0 2175.5 L2010.7 2166.7 L2011.4 2169.7 L2012.1 2167.8 L2012.8 2166.6 L2013.4 2176.1 L2014.1 2174.0 L2014.8 2166.2 L2015.5 2165.3 L2016.2 2175.5 L2016.9 2169.9 L2017.6 2168.1 L2018.3 2175.5 L2019.0 2166.5 L2019.6 2165.7 L2020.3 2166.8 L2021.0 2165.0 L2021.7 2167.8 L2022.4 2171.3 L2023.1 2166.2 L2023.8 2170.1 L2024.5 2174.9 L2025.2 2165.5 L2025.8 2165.1 L2026.5 2169.7 L2027.9 2109.2 L2033.4 2108.4 L2038.9 2109.2 L2039.6 2109.9 L2051.7 2118.0 L2063.7 2126.0 L2066.5 2111.8 L2067.8 2143.1 L2068.5 2145.3 L2069.2 2144.6 L2069.9 2145.3 L2070.6 2141.3 L2071.3 2145.2 L2072.0 2145.8 L2072.7 2143.7 L2073.4 2155.8 L2074.0 2145.2 L2074.7 2144.8 L2075.4 2149.3 L2076.1 2174.3 L2076.8 2141.3 L2077.5 2154.4 L2078.2 2151.8 L2078.9 2152.5 L2079.6 2140.4 L2080.2 2140.8 L2080.9 2144.8 L2081.6 2150.9 L2082.3 2148.6 L2083.0 2181.4 L2083.7 2159.3 L2084.4 2142.5 L2085.1 2140.3 L2085.8 2160.8 L2086.4 2153.8 L2087.1 2149.1 L2087.8 2147.6 L2088.5 2153.3 L2089.2 2146.1 L2089.9 2141.8 L2090.6 2140.9 L2091.3 2144.7 L2091.9 2148.4 L2092.6 2149.6 L2093.3 2152.2 L2094.0 2141.9 L2094.7 2153.0 L2095.4 2143.9 L2096.1 2149.0 L2096.8 2143.2 L2097.5 2150.5 L2098.1 2140.5 L2098.8 2149.6 L2099.5 2144.1 L2100.2 2144.5 L2100.9 2140.7 L2101.6 2147.2 L2102.3 2154.0 L2103.0 2144.9 L2103.7 2147.2 L2104.3 2145.5 L2105.0 2182.2 L2105.7 2141.5 L2106.4 2142.7 L2107.1 2140.5 L2107.8 2144.7 L2108.5 2141.6 L2109.2 2141.0 L2109.9 2150.8 L2110.5 2141.6 L2111.2 2144.8 L2111.9 2142.6 L2112.6 2151.2 L2113.3 2140.2 L2114.0 2163.1 L2114.7 2179.5 L2115.4 2147.6 L2116.0 2145.5 L2116.7 2145.8 L2117.4 2178.8 L2118.1 2143.5 L2118.8 2144.2 L2119.5 2160.3 L2120.2 2146.9 L2120.9 2149.2 L2121.6 2140.5 L2122.2 2141.9 L2122.9 2141.0 L2123.6 2142.1 L2124.3 2151.3 L2125.0 2141.1 L2125.7 2169.7 L2126.4 2151.8 L2127.1 2149.0 L2127.8 2154.7 L2128.4 2142.8 L2129.1 2141.4 L2129.8 2140.7 L2130.5 2142.1 L2131.2 2107.5 L2132.6 2108.4 L2143.6 2112.0 L2154.6 2115.6 L2156.0 2115.6 L2178.7 2116.3 L2201.4 2117.0" fill="none" stroke="#5e8bb9" stroke-width="2" stroke-linejoin="round"/>
<line x1="1263.5" y1="2412.7" x2="2215.5" y2="2412.7" stroke="#e6e9ef" stroke-width="1" stroke-dasharray="4 4"/>
<line x1="1263.5" y1="2459.2" x2="2215.5" y2="2459.2" stroke="#e6e9ef" stroke-width="1" stroke-dasharray="4 4"/>
<line x1="1263.5" y1="2505.7" x2="2215.5" y2="2505.7" stroke="#e6e9ef" stroke-width="1" stroke-dasharray="4 4"/>
<line x1="1263.5" y1="2552.2" x2="2215.5" y2="2552.2" stroke="#e6e9ef" stroke-width="1" stroke-dasharray="4 4"/>
<line x1="1263.5" y1="2412.7" x2="1263.5" y2="2600" stroke="#e4e7ed"/>
<line x1="1263.5" y1="2600" x2="2215.5" y2="2600" stroke="#e4e7ed"/>
<line x1="1327.4" y1="2412.7" x2="1327.4" y2="2612.0" stroke="#aeb3bb" stroke-width="1"/>
<line x1="1409.6" y1="2412.7" x2="1409.6" y2="2612.0" stroke="#aeb3bb" stroke-width="1"/>
<line x1="1491.8" y1="2412.7" x2="1491.8" y2="2612.0" stroke="#aeb3bb" stroke-width="1"/>
<line x1="1574.0" y1="2412.7" x2="1574.0" y2="2612.0" stroke="#aeb3bb" stroke-width="1"/>
<line x1="1656.2" y1="2412.7" x2="1656.2" y2="2612.0" stroke="#aeb3bb" stroke-width="1"/>
<line x1="1738.4" y1="2412.7" x2="1738.4" y2="2612.0" stroke="#aeb3bb" stroke-width="1"/>
<line x1="1820.6" y1="2412.7" x2="1820.6" y2="2612.0" stroke="#aeb3bb" stroke-width="1"/>
<line x1="1902.8" y1="2412.7" x2="1902.8" y2="2612.0" stroke="#aeb3bb" stroke-width="1"/>
<line x1="1985.0" y1="2412.7" x2="1985.0" y2="2612.0" stroke="#aeb3bb" stroke-width="1"/>
<line x1="2067.2" y1="2412.7" x2="2067.2" y2="2612.0" stroke="#aeb3bb" stroke-width="1"/>
<line x1="2149.4" y1="2412.7" x2="2149.4" y2="2612.0" stroke="#aeb3bb" stroke-width="1"/>
<clipPath id="cl76"><rect x="1189.5" y="2365" width="1175.5" height="153"/></clipPath><g clip-path="url(#cl76)"><path d="M1294.5 2412.7 L1294.5 2417.3 L1308.2 2418.3 L1321.9 2419.2 L1323.3 2422.9 L1324.7 2418.3 L1326.0 2422.0 L1327.4 2416.4 L1328.8 2414.1 L1331.5 2414.1 L1360.3 2414.8 L1389.1 2415.5 L1390.4 2416.0 L1411.2 2418.9 L1432.0 2421.8 L1452.8 2424.8 L1453.4 2482.9 L1454.8 2422.0 L1455.5 2415.7 L1456.2 2423.8 L1456.9 2416.4 L1457.5 2413.9 L1458.2 2418.0 L1458.9 2413.7 L1459.6 2413.7 L1460.3 2432.7 L1461.0 2424.8 L1461.7 2417.8 L1462.3 2413.6 L1463.0 2413.7 L1463.7 2420.6 L1464.4 2415.6 L1465.1 2416.5 L1465.8 2416.3 L1466.5 2415.8 L1467.1 2425.7 L1467.8 2421.9 L1468.5 2414.6 L1469.2 2414.4 L1469.9 2420.4 L1470.6 2422.0 L1471.2 2424.6 L1471.9 2413.6 L1472.6 2423.5 L1473.3 2425.2 L1474.0 2413.7 L1474.7 2420.6 L1475.4 2413.7 L1476.0 2424.8 L1476.7 2413.7 L1477.4 2424.8 L1478.1 2413.9 L1478.8 2415.7 L1479.5 2419.7 L1480.2 2418.2 L1480.8 2415.4 L1481.5 2414.3 L1482.2 2421.1 L1482.9 2422.9 L1483.6 2415.2 L1484.3 2418.2 L1484.9 2425.4 L1485.6 2414.2 L1486.3 2414.7 L1487.0 2413.7 L1487.7 2417.3 L1488.4 2417.6 L1489.1 2444.8 L1489.7 2416.1 L1490.4 2422.5 L1491.1 2413.8 L1491.8 2421.4 L1492.5 2413.9 L1493.2 2424.2 L1493.9 2424.4 L1494.5 2417.6 L1495.2 2427.1 L1495.9 2414.1 L1496.6 2414.2 L1497.3 2417.5 L1498.0 2413.9 L1498.6 2413.7 L1499.3 2417.0 L1500.0 2417.8 L1500.7 2423.6 L1501.4 2413.6 L1502.1 2415.7 L1502.8 2413.9 L1503.4 2417.2 L1504.1 2414.9 L1504.8 2425.2 L1505.5 2419.0 L1506.2 2414.0 L1506.9 2423.5 L1507.6 2433.6 L1508.2 2451.8 L1508.9 2414.6 L1509.6 2413.7 L1510.3 2442.0 L1514.7 2422.0 L1519.2 2426.6 L1520.6 2417.3 L1521.9 2418.7 L1522.6 2418.7 L1523.3 2419.7 L1524.0 2414.4 L1524.7 2422.1 L1525.4 2414.8 L1526.0 2421.2 L1526.7 2416.9 L1527.4 2434.1 L1528.1 2413.6 L1528.8 2424.6 L1529.5 2418.5 L1530.2 2418.6 L1530.8 2415.0 L1531.5 2413.6 L1532.2 2413.6 L1532.9 2415.3 L1533.6 2418.0 L1534.3 2416.8 L1535.0 2416.8 L1535.6 2417.7 L1536.3 2413.7 L1537.0 2417.4 L1537.7 2421.9 L1538.4 2417.5 L1539.1 2414.9 L1539.7 2434.6 L1540.4 2414.6 L1541.1 2414.2 L1541.8 2415.4 L1542.5 2420.9 L1543.2 2423.4 L1543.9 2413.7 L1544.5 2414.0 L1545.2 2436.4 L1545.9 2415.4 L1546.6 2420.7 L1547.3 2415.0 L1548.0 2413.6 L1548.7 2413.6 L1549.3 2416.2 L1550.0 2421.0 L1550.7 2422.8 L1551.4 2413.9 L1552.1 2413.6 L1552.8 2415.0 L1553.4 2417.3 L1554.1 2423.6 L1554.8 2413.8 L1555.5 2418.1 L1556.2 2435.5 L1556.9 2414.0 L1557.6 2418.0 L1558.2 2416.8 L1558.9 2414.6 L1559.6 2422.3 L1560.3 2422.9 L1561.0 2413.7 L1561.7 2416.9 L1562.4 2414.5 L1563.0 2421.6 L1563.7 2423.2 L1564.4 2417.3 L1565.1 2418.4 L1565.8 2417.2 L1566.5 2413.8 L1567.1 2424.2 L1567.8 2415.8 L1568.5 2414.2 L1569.2 2421.1 L1569.9 2413.6 L1570.6 2416.0 L1571.3 2422.9 L1571.9 2413.6 L1572.6 2413.7 L1573.3 2419.6 L1574.0 2413.7 L1574.7 2418.4 L1575.4 2417.9 L1576.1 2415.4 L1576.7 2413.6 L1577.4 2415.7 L1578.1 2418.5 L1578.8 2415.7 L1579.5 2416.1 L1580.2 2414.5 L1580.8 2437.8 L1581.5 2421.0 L1582.2 2415.7 L1582.9 2413.8 L1583.6 2415.5 L1584.3 2413.6 L1585.0 2437.8 L1585.6 2419.9 L1586.3 2415.4 L1587.0 2413.6 L1587.7 2414.8 L1588.4 2422.7 L1589.1 2415.2 L1589.8 2414.9 L1590.4 2422.1 L1591.1 2414.2 L1591.8 2416.8 L1592.5 2413.7 L1593.2 2413.6 L1593.9 2413.9 L1594.5 2414.2 L1595.2 2416.8 L1595.9 2418.6 L1596.6 2415.6 L1597.3 2413.8 L1598.0 2414.9 L1598.7 2414.8 L1599.3 2413.7 L1600.0 2417.0 L1600.7 2415.8 L1601.4 2416.7 L1602.1 2413.9 L1602.8 2420.1 L1603.5 2414.2 L1604.1 2422.7 L1604.8 2424.7 L1605.5 2413.7 L1606.2 2418.5 L1606.9 2436.4 L1607.6 2414.8 L1608.2 2437.3 L1608.9 2419.7 L1609.6 2417.8 L1610.3 2423.9 L1611.0 2415.5 L1611.7 2415.5 L1612.4 2413.8 L1613.0 2418.8 L1613.7 2415.6 L1614.4 2413.7 L1615.1 2413.8 L1615.8 2424.5 L1616.5 2413.7 L1617.2 2423.4 L1617.8 2419.2 L1618.5 2415.2 L1619.2 2414.9 L1619.9 2413.6 L1620.6 2420.8 L1621.3 2415.1 L1621.9 2414.7 L1622.6 2413.7 L1623.3 2413.6 L1624.0 2419.9 L1624.7 2421.2 L1625.4 2414.7 L1626.1 2415.5 L1626.7 2420.0 L1627.4 2422.4 L1628.1 2419.4 L1628.8 2414.7 L1629.5 2421.6 L1630.2 2419.2 L1630.9 2414.7 L1631.5 2413.6 L1632.2 2418.5 L1632.9 2417.1 L1633.6 2413.9 L1634.3 2417.5 L1635.0 2417.4 L1635.6 2415.8 L1636.3 2424.8 L1637.0 2418.1 L1637.7 2429.9 L1638.4 2418.7 L1639.1 2414.7 L1639.8 2413.8 L1640.4 2413.7 L1641.1 2422.3 L1641.8 2415.5 L1642.5 2416.2 L1643.2 2417.1 L1643.9 2413.6 L1644.6 2419.1 L1645.2 2422.9 L1645.9 2415.2 L1646.6 2415.4 L1647.3 2413.6 L1648.0 2414.8 L1648.7 2416.6 L1649.3 2414.1 L1650.0 2416.1 L1650.7 2418.3 L1651.4 2413.6 L1652.1 2413.6 L1652.8 2419.0 L1653.5 2422.1 L1654.1 2413.6 L1654.8 2423.2 L1655.5 2422.3 L1656.2 2415.3 L1656.9 2413.9 L1657.6 2423.1 L1658.3 2415.2 L1658.9 2420.2 L1659.6 2413.7 L1660.3 2415.1 L1661.0 2413.6 L1661.7 2413.7 L1662.4 2417.5 L1663.0 2414.0 L1663.7 2414.8 L1664.4 2415.8 L1665.1 2423.5 L1665.8 2413.9 L1666.5 2421.9 L1667.2 2416.9 L1667.8 2414.0 L1668.5 2416.2 L1669.2 2417.0 L1669.9 2413.8 L1670.6 2424.2 L1671.3 2422.2 L1672.0 2414.0 L1672.6 2416.9 L1673.3 2415.9 L1674.0 2413.6 L1674.7 2416.0 L1675.4 2414.5 L1676.1 2413.8 L1676.7 2418.8 L1677.4 2413.6 L1678.1 2420.1 L1678.8 2419.3 L1679.5 2414.8 L1680.2 2420.1 L1680.9 2417.3 L1681.5 2414.2 L1682.2 2418.8 L1682.9 2414.9 L1683.6 2413.7 L1684.3 2413.6 L1685.0 2416.2 L1685.7 2417.8 L1686.3 2419.4 L1687.0 2413.8 L1687.7 2413.6 L1688.4 2418.5 L1689.1 2414.0 L1689.8 2414.4 L1690.4 2414.5 L1691.1 2418.2 L1691.8 2422.6 L1692.5 2422.4 L1693.2 2419.9 L1693.9 2414.2 L1694.6 2423.0 L1695.2 2413.9 L1695.9 2414.4 L1696.6 2414.6 L1697.3 2413.8 L1698.0 2419.8 L1698.7 2420.6 L1699.4 2413.8 L1700.0 2421.7 L1700.7 2413.6 L1701.4 2415.9 L1702.1 2423.8 L1702.8 2420.0 L1703.5 2416.0 L1704.1 2413.6 L1704.8 2418.7 L1705.5 2413.6 L1706.2 2413.7 L1706.9 2417.3 L1707.6 2413.8 L1708.3 2415.7 L1708.9 2414.6 L1709.6 2423.9 L1710.3 2415.4 L1711.0 2418.4 L1711.7 2422.5 L1712.4 2420.4 L1713.1 2421.0 L1713.7 2420.6 L1714.4 2423.6 L1715.1 2415.7 L1715.8 2419.9 L1716.5 2414.8 L1717.2 2418.8 L1717.8 2414.5 L1718.5 2413.8 L1719.2 2414.1 L1719.9 2413.6 L1720.6 2413.7 L1721.3 2419.4 L1722.0 2413.6 L1722.6 2416.4 L1723.3 2413.6 L1724.0 2413.8 L1724.7 2413.9 L1725.4 2416.5 L1726.1 2413.8 L1726.8 2413.7 L1727.4 2414.2 L1728.1 2420.2 L1728.8 2414.0 L1729.5 2422.5 L1730.2 2416.0 L1730.9 2415.3 L1731.5 2413.6 L1732.2 2419.9 L1732.9 2415.7 L1733.6 2414.0 L1734.3 2417.4 L1735.0 2413.6 L1735.7 2414.5 L1736.3 2418.3 L1737.0 2413.7 L1737.7 2414.2 L1738.4 2421.4 L1739.1 2417.1 L1739.8 2414.0 L1740.5 2413.7 L1741.1 2413.6 L1741.8 2420.9 L1742.5 2413.6 L1743.2 2418.3 L1743.9 2415.3 L1744.6 2423.5 L1745.2 2421.1 L1745.9 2419.7 L1746.6 2422.5 L1747.3 2420.4 L1748.0 2415.9 L1748.7 2413.7 L1749.4 2414.2 L1750.0 2413.6 L1750.7 2415.2 L1751.4 2414.4 L1752.1 2413.7 L1752.8 2415.1 L1753.5 2420.5 L1754.2 2413.6 L1754.8 2418.2 L1755.5 2416.1 L1756.2 2413.6 L1756.9 2419.9 L1757.6 2416.8 L1758.3 2414.5 L1758.9 2414.1 L1759.6 2414.6 L1760.3 2414.0 L1761.0 2418.6 L1761.7 2423.3 L1762.4 2418.4 L1763.1 2420.4 L1763.7 2413.7 L1764.4 2417.7 L1765.1 2413.8 L1765.8 2420.7 L1766.5 2413.7 L1767.2 2413.7 L1767.9 2414.7 L1768.5 2422.6 L1769.2 2415.6 L1769.9 2419.2 L1770.6 2414.6 L1771.3 2418.5 L1772.0 2418.0 L1772.6 2419.7 L1773.3 2419.8 L1774.0 2414.3 L1774.7 2413.7 L1775.4 2415.6 L1776.1 2420.4 L1776.8 2413.7 L1777.4 2422.2 L1778.1 2414.4 L1778.8 2413.7 L1779.5 2437.3 L1780.2 2418.3 L1780.9 2413.8 L1781.6 2416.9 L1782.2 2413.6 L1782.9 2416.3 L1783.6 2414.3 L1784.3 2414.4 L1785.0 2413.7 L1785.7 2413.7 L1786.3 2415.9 L1787.0 2416.1 L1787.7 2422.3 L1788.4 2420.2 L1789.1 2413.7 L1789.8 2414.1 L1790.5 2413.9 L1791.1 2420.5 L1791.8 2416.0 L1792.5 2413.6 L1793.2 2424.4 L1793.9 2417.4 L1794.6 2417.6 L1795.3 2414.5 L1795.9 2421.8 L1796.6 2415.2 L1797.3 2414.6 L1798.0 2413.7 L1798.7 2414.0 L1799.4 2414.3 L1800.0 2413.6 L1800.7 2413.7 L1801.4 2416.6 L1802.1 2414.7 L1802.8 2417.9 L1803.5 2418.9 L1804.2 2424.6 L1804.8 2421.1 L1805.5 2414.9 L1806.2 2422.2 L1806.9 2415.7 L1807.6 2422.2 L1808.3 2413.6 L1809.0 2422.1 L1809.6 2416.6 L1810.3 2414.1 L1811.0 2413.6 L1811.7 2415.0 L1812.4 2414.6 L1813.1 2418.0 L1813.7 2413.9 L1814.4 2414.6 L1815.1 2413.6 L1815.8 2423.8 L1816.5 2421.3 L1817.2 2420.0 L1817.9 2418.9 L1818.5 2422.2 L1819.2 2419.7 L1819.9 2415.9 L1820.6 2413.6 L1821.3 2414.1 L1822.0 2413.6 L1822.7 2420.2 L1823.3 2414.4 L1824.0 2422.0 L1824.7 2414.2 L1825.4 2423.0 L1826.1 2439.7 L1826.8 2414.1 L1827.4 2422.0 L1828.1 2420.7 L1828.8 2415.2 L1829.5 2421.6 L1830.2 2413.8 L1830.9 2413.8 L1831.6 2413.6 L1832.2 2418.5 L1832.9 2422.1 L1833.6 2418.3 L1834.3 2418.0 L1835.0 2415.0 L1835.7 2413.9 L1836.4 2418.2 L1837.0 2413.8 L1837.7 2417.5 L1838.4 2414.5 L1839.1 2421.7 L1839.8 2413.9 L1840.5 2422.8 L1841.1 2414.0 L1841.8 2413.7 L1842.5 2415.0 L1843.2 2415.8 L1843.9 2416.6 L1844.6 2413.9 L1845.3 2413.6 L1845.9 2419.0 L1846.6 2414.0 L1847.3 2413.8 L1848.0 2428.7 L1848.7 2418.9 L1849.4 2422.9 L1850.1 2413.8 L1850.7 2417.2 L1851.4 2417.4 L1852.1 2415.6 L1852.8 2420.8 L1853.5 2415.7 L1854.2 2413.7 L1854.8 2413.7 L1855.5 2413.9 L1856.2 2419.3 L1856.9 2419.7 L1857.6 2415.4 L1858.3 2416.3 L1859.0 2413.6 L1859.6 2418.3 L1860.3 2421.5 L1861.0 2418.3 L1861.7 2414.9 L1862.4 2414.0 L1863.1 2413.6 L1863.8 2416.2 L1864.4 2419.7 L1865.1 2413.7 L1865.8 2413.6 L1866.5 2416.9 L1867.2 2414.0 L1867.9 2413.7 L1868.5 2413.7 L1869.2 2413.7 L1869.9 2420.5 L1870.6 2413.6 L1871.3 2414.4 L1872.0 2424.0 L1872.7 2415.4 L1873.3 2424.4 L1874.0 2415.1 L1874.7 2413.6 L1875.4 2421.9 L1876.1 2414.6 L1876.8 2414.8 L1877.5 2413.6 L1878.1 2419.2 L1878.8 2413.9 L1879.5 2416.0 L1880.2 2415.1 L1880.9 2414.4 L1881.6 2424.3 L1882.2 2413.6 L1882.9 2417.3 L1883.6 2414.3 L1884.3 2421.3 L1885.0 2421.8 L1885.7 2414.6 L1886.4 2414.5 L1887.0 2413.8 L1887.7 2413.8 L1888.4 2413.7 L1889.1 2413.8 L1889.8 2414.2 L1890.5 2424.6 L1891.2 2421.2 L1891.8 2414.6 L1892.5 2417.9 L1893.2 2415.7 L1893.9 2414.0 L1894.6 2422.7 L1895.3 2414.0 L1895.9 2413.7 L1896.6 2414.4 L1897.3 2418.4 L1898.0 2413.6 L1898.7 2414.6 L1899.4 2421.7 L1900.1 2419.3 L1900.7 2413.6 L1901.4 2413.9 L1902.1 2413.7 L1902.8 2443.4 L1903.5 2414.8 L1904.2 2413.7 L1904.9 2414.0 L1905.5 2417.5 L1906.2 2413.8 L1906.9 2418.3 L1907.6 2414.6 L1908.3 2413.9 L1909.0 2414.3 L1909.6 2419.5 L1910.3 2416.2 L1911.0 2424.1 L1911.7 2417.6 L1912.4 2413.8 L1913.1 2417.5 L1913.8 2421.4 L1914.4 2417.0 L1915.1 2414.9 L1915.8 2413.6 L1916.5 2414.2 L1917.2 2414.0 L1917.9 2414.7 L1918.6 2413.7 L1919.2 2413.9 L1919.9 2414.3 L1920.6 2413.7 L1921.3 2418.1 L1922.0 2421.7 L1922.7 2414.4 L1923.3 2414.7 L1924.0 2415.4 L1924.7 2415.2 L1925.4 2417.2 L1926.1 2421.9 L1926.8 2414.0 L1927.5 2413.8 L1928.1 2416.8 L1928.8 2414.4 L1929.5 2423.2 L1930.2 2417.0 L1930.9 2414.7 L1931.6 2414.0 L1932.3 2421.6 L1932.9 2423.6 L1933.6 2415.5 L1934.3 2414.4 L1935.0 2413.7 L1935.7 2413.9 L1936.4 2418.9 L1937.0 2414.6 L1937.7 2415.4 L1938.4 2416.0 L1939.1 2416.1 L1939.8 2423.9 L1940.5 2414.3 L1941.2 2414.2 L1941.8 2418.0 L1942.5 2440.6 L1943.9 2482.4 L1945.3 2502.4 L1946.0 2479.5 L1946.6 2486.7 L1947.3 2483.6 L1948.0 2494.7 L1948.7 2480.8 L1949.4 2482.6 L1950.1 2487.4 L1950.8 2478.2 L1951.4 2478.7 L1952.1 2478.8 L1952.8 2495.5 L1953.5 2479.5 L1954.2 2435.9 L1954.9 2481.1 L1955.5 2496.3 L1956.2 2493.6 L1956.9 2493.6 L1957.6 2482.8 L1958.3 2497.9 L1959.0 2488.9 L1959.7 2493.3 L1960.3 2497.5 L1961.0 2479.0 L1961.7 2492.1 L1962.4 2479.9 L1963.1 2489.5 L1963.8 2502.7 L1964.4 2492.6 L1965.1 2490.9 L1965.8 2501.3 L1966.5 2478.1 L1967.2 2478.9 L1967.9 2481.8 L1968.6 2503.6 L1969.2 2482.7 L1969.9 2488.2 L1970.6 2483.7 L1971.3 2496.4 L1972.0 2481.7 L1972.7 2490.4 L1973.4 2503.1 L1974.0 2492.9 L1974.7 2496.4 L1975.4 2479.7 L1976.1 2501.3 L1976.8 2486.7 L1977.5 2482.6 L1978.1 2488.9 L1978.8 2490.7 L1979.5 2480.6 L1980.2 2483.6 L1980.9 2478.1 L1981.6 2499.8 L1982.3 2478.4 L1982.9 2486.6 L1983.6 2480.2 L1984.3 2486.6 L1985.0 2431.3 L1986.4 2417.8 L1988.4 2419.2 L1990.5 2468.5 L1994.6 2491.8 L1996.0 2524.3 L1998.7 2566.1 L2000.1 2528.9 L2001.4 2519.6 L2002.8 2477.8 L2004.2 2482.0 L2004.9 2473.8 L2005.6 2479.8 L2006.2 2475.3 L2006.9 2483.0 L2007.6 2477.0 L2008.3 2480.8 L2009.0 2473.7 L2009.7 2474.1 L2010.3 2476.1 L2011.0 2475.6 L2011.7 2473.6 L2012.4 2484.5 L2013.1 2478.1 L2013.8 2481.8 L2014.5 2476.5 L2015.1 2482.4 L2015.8 2485.0 L2016.5 2484.4 L2017.2 2480.5 L2017.9 2483.7 L2018.6 2478.7 L2019.2 2476.4 L2019.9 2479.8 L2020.6 2476.2 L2021.3 2476.1 L2022.0 2483.6 L2022.7 2474.0 L2023.4 2481.0 L2024.0 2481.1 L2024.7 2480.1 L2025.4 2474.0 L2026.1 2476.0 L2027.5 2417.8 L2034.3 2416.9 L2039.8 2417.3 L2040.5 2418.3 L2052.5 2425.0 L2064.5 2431.8 L2067.2 2417.3 L2068.6 2433.6 L2069.3 2435.7 L2069.9 2436.7 L2070.6 2434.4 L2071.3 2435.1 L2072.0 2433.9 L2072.7 2435.9 L2073.4 2434.4 L2074.0 2450.4 L2074.7 2438.0 L2075.4 2435.1 L2076.1 2435.3 L2076.8 2434.1 L2077.5 2435.5 L2078.2 2434.4 L2078.8 2440.2 L2079.5 2437.6 L2080.2 2474.0 L2080.9 2438.2 L2081.6 2437.9 L2082.3 2435.5 L2083.0 2437.3 L2083.6 2464.3 L2084.3 2436.0 L2085.0 2437.2 L2085.7 2434.1 L2086.4 2441.4 L2087.1 2435.0 L2087.7 2441.4 L2088.4 2483.7 L2089.1 2436.3 L2089.8 2439.7 L2090.5 2440.8 L2091.2 2439.3 L2091.9 2479.9 L2092.5 2438.4 L2093.2 2439.4 L2093.9 2436.7 L2094.6 2434.3 L2095.3 2462.2 L2096.0 2439.1 L2096.7 2434.6 L2097.3 2439.9 L2098.0 2436.8 L2098.7 2455.4 L2099.4 2449.2 L2100.1 2440.0 L2100.8 2433.9 L2101.4 2435.5 L2102.1 2437.5 L2102.8 2433.8 L2103.5 2434.4 L2104.2 2440.1 L2104.9 2434.3 L2105.6 2450.9 L2106.2 2435.0 L2106.9 2434.8 L2107.6 2438.2 L2108.3 2434.0 L2109.0 2441.3 L2109.7 2440.8 L2110.4 2435.3 L2111.0 2441.5 L2111.7 2438.6 L2112.4 2435.0 L2113.1 2434.1 L2113.8 2435.8 L2114.5 2435.7 L2115.1 2436.5 L2115.8 2435.2 L2116.5 2434.5 L2117.2 2434.8 L2117.9 2434.8 L2118.6 2438.0 L2119.3 2440.8 L2119.9 2438.7 L2120.6 2454.5 L2121.3 2434.8 L2122.0 2441.0 L2122.7 2438.2 L2123.4 2434.6 L2124.1 2434.0 L2124.7 2434.6 L2125.4 2435.2 L2126.1 2439.8 L2126.8 2476.4 L2127.5 2433.8 L2128.2 2435.4 L2128.8 2438.0 L2129.5 2440.4 L2130.2 2433.7 L2130.9 2440.6 L2131.6 2415.5 L2133.0 2416.4 L2143.9 2419.7 L2154.9 2422.9 L2156.2 2422.9 L2178.9 2423.9 L2201.5 2424.8 L2201.5 2412.7 Z" fill="rgba(96,146,192,0.32)"/><line x1="1294.5" y1="2412.7" x2="2201.5" y2="2412.7" stroke="#7fbfa8" stroke-width="2"/><path d="M1294.5 2417.3 L1308.2 2418.3 L1321.9 2419.2 L1323.3 2422.9 L1324.7 2418.3 L1326.0 2422.0 L1327.4 2416.4 L1328.8 2414.1 L1331.5 2414.1 L1360.3 2414.8 L1389.1 2415.5 L1390.4 2416.0 L1411.2 2418.9 L1432.0 2421.8 L1452.8 2424.8 L1453.4 2482.9 L1454.8 2422.0 L1455.5 2415.7 L1456.2 2423.8 L1456.9 2416.4 L1457.5 2413.9 L1458.2 2418.0 L1458.9 2413.7 L1459.6 2413.7 L1460.3 2432.7 L1461.0 2424.8 L1461.7 2417.8 L1462.3 2413.6 L1463.0 2413.7 L1463.7 2420.6 L1464.4 2415.6 L1465.1 2416.5 L1465.8 2416.3 L1466.5 2415.8 L1467.1 2425.7 L1467.8 2421.9 L1468.5 2414.6 L1469.2 2414.4 L1469.9 2420.4 L1470.6 2422.0 L1471.2 2424.6 L1471.9 2413.6 L1472.6 2423.5 L1473.3 2425.2 L1474.0 2413.7 L1474.7 2420.6 L1475.4 2413.7 L1476.0 2424.8 L1476.7 2413.7 L1477.4 2424.8 L1478.1 2413.9 L1478.8 2415.7 L1479.5 2419.7 L1480.2 2418.2 L1480.8 2415.4 L1481.5 2414.3 L1482.2 2421.1 L1482.9 2422.9 L1483.6 2415.2 L1484.3 2418.2 L1484.9 2425.4 L1485.6 2414.2 L1486.3 2414.7 L1487.0 2413.7 L1487.7 2417.3 L1488.4 2417.6 L1489.1 2444.8 L1489.7 2416.1 L1490.4 2422.5 L1491.1 2413.8 L1491.8 2421.4 L1492.5 2413.9 L1493.2 2424.2 L1493.9 2424.4 L1494.5 2417.6 L1495.2 2427.1 L1495.9 2414.1 L1496.6 2414.2 L1497.3 2417.5 L1498.0 2413.9 L1498.6 2413.7 L1499.3 2417.0 L1500.0 2417.8 L1500.7 2423.6 L1501.4 2413.6 L1502.1 2415.7 L1502.8 2413.9 L1503.4 2417.2 L1504.1 2414.9 L1504.8 2425.2 L1505.5 2419.0 L1506.2 2414.0 L1506.9 2423.5 L1507.6 2433.6 L1508.2 2451.8 L1508.9 2414.6 L1509.6 2413.7 L1510.3 2442.0 L1514.7 2422.0 L1519.2 2426.6 L1520.6 2417.3 L1521.9 2418.7 L1522.6 2418.7 L1523.3 2419.7 L1524.0 2414.4 L1524.7 2422.1 L1525.4 2414.8 L1526.0 2421.2 L1526.7 2416.9 L1527.4 2434.1 L1528.1 2413.6 L1528.8 2424.6 L1529.5 2418.5 L1530.2 2418.6 L1530.8 2415.0 L1531.5 2413.6 L1532.2 2413.6 L1532.9 2415.3 L1533.6 2418.0 L1534.3 2416.8 L1535.0 2416.8 L1535.6 2417.7 L1536.3 2413.7 L1537.0 2417.4 L1537.7 2421.9 L1538.4 2417.5 L1539.1 2414.9 L1539.7 2434.6 L1540.4 2414.6 L1541.1 2414.2 L1541.8 2415.4 L1542.5 2420.9 L1543.2 2423.4 L1543.9 2413.7 L1544.5 2414.0 L1545.2 2436.4 L1545.9 2415.4 L1546.6 2420.7 L1547.3 2415.0 L1548.0 2413.6 L1548.7 2413.6 L1549.3 2416.2 L1550.0 2421.0 L1550.7 2422.8 L1551.4 2413.9 L1552.1 2413.6 L1552.8 2415.0 L1553.4 2417.3 L1554.1 2423.6 L1554.8 2413.8 L1555.5 2418.1 L1556.2 2435.5 L1556.9 2414.0 L1557.6 2418.0 L1558.2 2416.8 L1558.9 2414.6 L1559.6 2422.3 L1560.3 2422.9 L1561.0 2413.7 L1561.7 2416.9 L1562.4 2414.5 L1563.0 2421.6 L1563.7 2423.2 L1564.4 2417.3 L1565.1 2418.4 L1565.8 2417.2 L1566.5 2413.8 L1567.1 2424.2 L1567.8 2415.8 L1568.5 2414.2 L1569.2 2421.1 L1569.9 2413.6 L1570.6 2416.0 L1571.3 2422.9 L1571.9 2413.6 L1572.6 2413.7 L1573.3 2419.6 L1574.0 2413.7 L1574.7 2418.4 L1575.4 2417.9 L1576.1 2415.4 L1576.7 2413.6 L1577.4 2415.7 L1578.1 2418.5 L1578.8 2415.7 L1579.5 2416.1 L1580.2 2414.5 L1580.8 2437.8 L1581.5 2421.0 L1582.2 2415.7 L1582.9 2413.8 L1583.6 2415.5 L1584.3 2413.6 L1585.0 2437.8 L1585.6 2419.9 L1586.3 2415.4 L1587.0 2413.6 L1587.7 2414.8 L1588.4 2422.7 L1589.1 2415.2 L1589.8 2414.9 L1590.4 2422.1 L1591.1 2414.2 L1591.8 2416.8 L1592.5 2413.7 L1593.2 2413.6 L1593.9 2413.9 L1594.5 2414.2 L1595.2 2416.8 L1595.9 2418.6 L1596.6 2415.6 L1597.3 2413.8 L1598.0 2414.9 L1598.7 2414.8 L1599.3 2413.7 L1600.0 2417.0 L1600.7 2415.8 L1601.4 2416.7 L1602.1 2413.9 L1602.8 2420.1 L1603.5 2414.2 L1604.1 2422.7 L1604.8 2424.7 L1605.5 2413.7 L1606.2 2418.5 L1606.9 2436.4 L1607.6 2414.8 L1608.2 2437.3 L1608.9 2419.7 L1609.6 2417.8 L1610.3 2423.9 L1611.0 2415.5 L1611.7 2415.5 L1612.4 2413.8 L1613.0 2418.8 L1613.7 2415.6 L1614.4 2413.7 L1615.1 2413.8 L1615.8 2424.5 L1616.5 2413.7 L1617.2 2423.4 L1617.8 2419.2 L1618.5 2415.2 L1619.2 2414.9 L1619.9 2413.6 L1620.6 2420.8 L1621.3 2415.1 L1621.9 2414.7 L1622.6 2413.7 L1623.3 2413.6 L1624.0 2419.9 L1624.7 2421.2 L1625.4 2414.7 L1626.1 2415.5 L1626.7 2420.0 L1627.4 2422.4 L1628.1 2419.4 L1628.8 2414.7 L1629.5 2421.6 L1630.2 2419.2 L1630.9 2414.7 L1631.5 2413.6 L1632.2 2418.5 L1632.9 2417.1 L1633.6 2413.9 L1634.3 2417.5 L1635.0 2417.4 L1635.6 2415.8 L1636.3 2424.8 L1637.0 2418.1 L1637.7 2429.9 L1638.4 2418.7 L1639.1 2414.7 L1639.8 2413.8 L1640.4 2413.7 L1641.1 2422.3 L1641.8 2415.5 L1642.5 2416.2 L1643.2 2417.1 L1643.9 2413.6 L1644.6 2419.1 L1645.2 2422.9 L1645.9 2415.2 L1646.6 2415.4 L1647.3 2413.6 L1648.0 2414.8 L1648.7 2416.6 L1649.3 2414.1 L1650.0 2416.1 L1650.7 2418.3 L1651.4 2413.6 L1652.1 2413.6 L1652.8 2419.0 L1653.5 2422.1 L1654.1 2413.6 L1654.8 2423.2 L1655.5 2422.3 L1656.2 2415.3 L1656.9 2413.9 L1657.6 2423.1 L1658.3 2415.2 L1658.9 2420.2 L1659.6 2413.7 L1660.3 2415.1 L1661.0 2413.6 L1661.7 2413.7 L1662.4 2417.5 L1663.0 2414.0 L1663.7 2414.8 L1664.4 2415.8 L1665.1 2423.5 L1665.8 2413.9 L1666.5 2421.9 L1667.2 2416.9 L1667.8 2414.0 L1668.5 2416.2 L1669.2 2417.0 L1669.9 2413.8 L1670.6 2424.2 L1671.3 2422.2 L1672.0 2414.0 L1672.6 2416.9 L1673.3 2415.9 L1674.0 2413.6 L1674.7 2416.0 L1675.4 2414.5 L1676.1 2413.8 L1676.7 2418.8 L1677.4 2413.6 L1678.1 2420.1 L1678.8 2419.3 L1679.5 2414.8 L1680.2 2420.1 L1680.9 2417.3 L1681.5 2414.2 L1682.2 2418.8 L1682.9 2414.9 L1683.6 2413.7 L1684.3 2413.6 L1685.0 2416.2 L1685.7 2417.8 L1686.3 2419.4 L1687.0 2413.8 L1687.7 2413.6 L1688.4 2418.5 L1689.1 2414.0 L1689.8 2414.4 L1690.4 2414.5 L1691.1 2418.2 L1691.8 2422.6 L1692.5 2422.4 L1693.2 2419.9 L1693.9 2414.2 L1694.6 2423.0 L1695.2 2413.9 L1695.9 2414.4 L1696.6 2414.6 L1697.3 2413.8 L1698.0 2419.8 L1698.7 2420.6 L1699.4 2413.8 L1700.0 2421.7 L1700.7 2413.6 L1701.4 2415.9 L1702.1 2423.8 L1702.8 2420.0 L1703.5 2416.0 L1704.1 2413.6 L1704.8 2418.7 L1705.5 2413.6 L1706.2 2413.7 L1706.9 2417.3 L1707.6 2413.8 L1708.3 2415.7 L1708.9 2414.6 L1709.6 2423.9 L1710.3 2415.4 L1711.0 2418.4 L1711.7 2422.5 L1712.4 2420.4 L1713.1 2421.0 L1713.7 2420.6 L1714.4 2423.6 L1715.1 2415.7 L1715.8 2419.9 L1716.5 2414.8 L1717.2 2418.8 L1717.8 2414.5 L1718.5 2413.8 L1719.2 2414.1 L1719.9 2413.6 L1720.6 2413.7 L1721.3 2419.4 L1722.0 2413.6 L1722.6 2416.4 L1723.3 2413.6 L1724.0 2413.8 L1724.7 2413.9 L1725.4 2416.5 L1726.1 2413.8 L1726.8 2413.7 L1727.4 2414.2 L1728.1 2420.2 L1728.8 2414.0 L1729.5 2422.5 L1730.2 2416.0 L1730.9 2415.3 L1731.5 2413.6 L1732.2 2419.9 L1732.9 2415.7 L1733.6 2414.0 L1734.3 2417.4 L1735.0 2413.6 L1735.7 2414.5 L1736.3 2418.3 L1737.0 2413.7 L1737.7 2414.2 L1738.4 2421.4 L1739.1 2417.1 L1739.8 2414.0 L1740.5 2413.7 L1741.1 2413.6 L1741.8 2420.9 L1742.5 2413.6 L1743.2 2418.3 L1743.9 2415.3 L1744.6 2423.5 L1745.2 2421.1 L1745.9 2419.7 L1746.6 2422.5 L1747.3 2420.4 L1748.0 2415.9 L1748.7 2413.7 L1749.4 2414.2 L1750.0 2413.6 L1750.7 2415.2 L1751.4 2414.4 L1752.1 2413.7 L1752.8 2415.1 L1753.5 2420.5 L1754.2 2413.6 L1754.8 2418.2 L1755.5 2416.1 L1756.2 2413.6 L1756.9 2419.9 L1757.6 2416.8 L1758.3 2414.5 L1758.9 2414.1 L1759.6 2414.6 L1760.3 2414.0 L1761.0 2418.6 L1761.7 2423.3 L1762.4 2418.4 L1763.1 2420.4 L1763.7 2413.7 L1764.4 2417.7 L1765.1 2413.8 L1765.8 2420.7 L1766.5 2413.7 L1767.2 2413.7 L1767.9 2414.7 L1768.5 2422.6 L1769.2 2415.6 L1769.9 2419.2 L1770.6 2414.6 L1771.3 2418.5 L1772.0 2418.0 L1772.6 2419.7 L1773.3 2419.8 L1774.0 2414.3 L1774.7 2413.7 L1775.4 2415.6 L1776.1 2420.4 L1776.8 2413.7 L1777.4 2422.2 L1778.1 2414.4 L1778.8 2413.7 L1779.5 2437.3 L1780.2 2418.3 L1780.9 2413.8 L1781.6 2416.9 L1782.2 2413.6 L1782.9 2416.3 L1783.6 2414.3 L1784.3 2414.4 L1785.0 2413.7 L1785.7 2413.7 L1786.3 2415.9 L1787.0 2416.1 L1787.7 2422.3 L1788.4 2420.2 L1789.1 2413.7 L1789.8 2414.1 L1790.5 2413.9 L1791.1 2420.5 L1791.8 2416.0 L1792.5 2413.6 L1793.2 2424.4 L1793.9 2417.4 L1794.6 2417.6 L1795.3 2414.5 L1795.9 2421.8 L1796.6 2415.2 L1797.3 2414.6 L1798.0 2413.7 L1798.7 2414.0 L1799.4 2414.3 L1800.0 2413.6 L1800.7 2413.7 L1801.4 2416.6 L1802.1 2414.7 L1802.8 2417.9 L1803.5 2418.9 L1804.2 2424.6 L1804.8 2421.1 L1805.5 2414.9 L1806.2 2422.2 L1806.9 2415.7 L1807.6 2422.2 L1808.3 2413.6 L1809.0 2422.1 L1809.6 2416.6 L1810.3 2414.1 L1811.0 2413.6 L1811.7 2415.0 L1812.4 2414.6 L1813.1 2418.0 L1813.7 2413.9 L1814.4 2414.6 L1815.1 2413.6 L1815.8 2423.8 L1816.5 2421.3 L1817.2 2420.0 L1817.9 2418.9 L1818.5 2422.2 L1819.2 2419.7 L1819.9 2415.9 L1820.6 2413.6 L1821.3 2414.1 L1822.0 2413.6 L1822.7 2420.2 L1823.3 2414.4 L1824.0 2422.0 L1824.7 2414.2 L1825.4 2423.0 L1826.1 2439.7 L1826.8 2414.1 L1827.4 2422.0 L1828.1 2420.7 L1828.8 2415.2 L1829.5 2421.6 L1830.2 2413.8 L1830.9 2413.8 L1831.6 2413.6 L1832.2 2418.5 L1832.9 2422.1 L1833.6 2418.3 L1834.3 2418.0 L1835.0 2415.0 L1835.7 2413.9 L1836.4 2418.2 L1837.0 2413.8 L1837.7 2417.5 L1838.4 2414.5 L1839.1 2421.7 L1839.8 2413.9 L1840.5 2422.8 L1841.1 2414.0 L1841.8 2413.7 L1842.5 2415.0 L1843.2 2415.8 L1843.9 2416.6 L1844.6 2413.9 L1845.3 2413.6 L1845.9 2419.0 L1846.6 2414.0 L1847.3 2413.8 L1848.0 2428.7 L1848.7 2418.9 L1849.4 2422.9 L1850.1 2413.8 L1850.7 2417.2 L1851.4 2417.4 L1852.1 2415.6 L1852.8 2420.8 L1853.5 2415.7 L1854.2 2413.7 L1854.8 2413.7 L1855.5 2413.9 L1856.2 2419.3 L1856.9 2419.7 L1857.6 2415.4 L1858.3 2416.3 L1859.0 2413.6 L1859.6 2418.3 L1860.3 2421.5 L1861.0 2418.3 L1861.7 2414.9 L1862.4 2414.0 L1863.1 2413.6 L1863.8 2416.2 L1864.4 2419.7 L1865.1 2413.7 L1865.8 2413.6 L1866.5 2416.9 L1867.2 2414.0 L1867.9 2413.7 L1868.5 2413.7 L1869.2 2413.7 L1869.9 2420.5 L1870.6 2413.6 L1871.3 2414.4 L1872.0 2424.0 L1872.7 2415.4 L1873.3 2424.4 L1874.0 2415.1 L1874.7 2413.6 L1875.4 2421.9 L1876.1 2414.6 L1876.8 2414.8 L1877.5 2413.6 L1878.1 2419.2 L1878.8 2413.9 L1879.5 2416.0 L1880.2 2415.1 L1880.9 2414.4 L1881.6 2424.3 L1882.2 2413.6 L1882.9 2417.3 L1883.6 2414.3 L1884.3 2421.3 L1885.0 2421.8 L1885.7 2414.6 L1886.4 2414.5 L1887.0 2413.8 L1887.7 2413.8 L1888.4 2413.7 L1889.1 2413.8 L1889.8 2414.2 L1890.5 2424.6 L1891.2 2421.2 L1891.8 2414.6 L1892.5 2417.9 L1893.2 2415.7 L1893.9 2414.0 L1894.6 2422.7 L1895.3 2414.0 L1895.9 2413.7 L1896.6 2414.4 L1897.3 2418.4 L1898.0 2413.6 L1898.7 2414.6 L1899.4 2421.7 L1900.1 2419.3 L1900.7 2413.6 L1901.4 2413.9 L1902.1 2413.7 L1902.8 2443.4 L1903.5 2414.8 L1904.2 2413.7 L1904.9 2414.0 L1905.5 2417.5 L1906.2 2413.8 L1906.9 2418.3 L1907.6 2414.6 L1908.3 2413.9 L1909.0 2414.3 L1909.6 2419.5 L1910.3 2416.2 L1911.0 2424.1 L1911.7 2417.6 L1912.4 2413.8 L1913.1 2417.5 L1913.8 2421.4 L1914.4 2417.0 L1915.1 2414.9 L1915.8 2413.6 L1916.5 2414.2 L1917.2 2414.0 L1917.9 2414.7 L1918.6 2413.7 L1919.2 2413.9 L1919.9 2414.3 L1920.6 2413.7 L1921.3 2418.1 L1922.0 2421.7 L1922.7 2414.4 L1923.3 2414.7 L1924.0 2415.4 L1924.7 2415.2 L1925.4 2417.2 L1926.1 2421.9 L1926.8 2414.0 L1927.5 2413.8 L1928.1 2416.8 L1928.8 2414.4 L1929.5 2423.2 L1930.2 2417.0 L1930.9 2414.7 L1931.6 2414.0 L1932.3 2421.6 L1932.9 2423.6 L1933.6 2415.5 L1934.3 2414.4 L1935.0 2413.7 L1935.7 2413.9 L1936.4 2418.9 L1937.0 2414.6 L1937.7 2415.4 L1938.4 2416.0 L1939.1 2416.1 L1939.8 2423.9 L1940.5 2414.3 L1941.2 2414.2 L1941.8 2418.0 L1942.5 2440.6 L1943.9 2482.4 L1945.3 2502.4 L1946.0 2479.5 L1946.6 2486.7 L1947.3 2483.6 L1948.0 2494.7 L1948.7 2480.8 L1949.4 2482.6 L1950.1 2487.4 L1950.8 2478.2 L1951.4 2478.7 L1952.1 2478.8 L1952.8 2495.5 L1953.5 2479.5 L1954.2 2435.9 L1954.9 2481.1 L1955.5 2496.3 L1956.2 2493.6 L1956.9 2493.6 L1957.6 2482.8 L1958.3 2497.9 L1959.0 2488.9 L1959.7 2493.3 L1960.3 2497.5 L1961.0 2479.0 L1961.7 2492.1 L1962.4 2479.9 L1963.1 2489.5 L1963.8 2502.7 L1964.4 2492.6 L1965.1 2490.9 L1965.8 2501.3 L1966.5 2478.1 L1967.2 2478.9 L1967.9 2481.8 L1968.6 2503.6 L1969.2 2482.7 L1969.9 2488.2 L1970.6 2483.7 L1971.3 2496.4 L1972.0 2481.7 L1972.7 2490.4 L1973.4 2503.1 L1974.0 2492.9 L1974.7 2496.4 L1975.4 2479.7 L1976.1 2501.3 L1976.8 2486.7 L1977.5 2482.6 L1978.1 2488.9 L1978.8 2490.7 L1979.5 2480.6 L1980.2 2483.6 L1980.9 2478.1 L1981.6 2499.8 L1982.3 2478.4 L1982.9 2486.6 L1983.6 2480.2 L1984.3 2486.6 L1985.0 2431.3 L1986.4 2417.8 L1988.4 2419.2 L1990.5 2468.5 L1994.6 2491.8 L1996.0 2524.3 L1998.7 2566.1 L2000.1 2528.9 L2001.4 2519.6 L2002.8 2477.8 L2004.2 2482.0 L2004.9 2473.8 L2005.6 2479.8 L2006.2 2475.3 L2006.9 2483.0 L2007.6 2477.0 L2008.3 2480.8 L2009.0 2473.7 L2009.7 2474.1 L2010.3 2476.1 L2011.0 2475.6 L2011.7 2473.6 L2012.4 2484.5 L2013.1 2478.1 L2013.8 2481.8 L2014.5 2476.5 L2015.1 2482.4 L2015.8 2485.0 L2016.5 2484.4 L2017.2 2480.5 L2017.9 2483.7 L2018.6 2478.7 L2019.2 2476.4 L2019.9 2479.8 L2020.6 2476.2 L2021.3 2476.1 L2022.0 2483.6 L2022.7 2474.0 L2023.4 2481.0 L2024.0 2481.1 L2024.7 2480.1 L2025.4 2474.0 L2026.1 2476.0 L2027.5 2417.8 L2034.3 2416.9 L2039.8 2417.3 L2040.5 2418.3 L2052.5 2425.0 L2064.5 2431.8 L2067.2 2417.3 L2068.6 2433.6 L2069.3 2435.7 L2069.9 2436.7 L2070.6 2434.4 L2071.3 2435.1 L2072.0 2433.9 L2072.7 2435.9 L2073.4 2434.4 L2074.0 2450.4 L2074.7 2438.0 L2075.4 2435.1 L2076.1 2435.3 L2076.8 2434.1 L2077.5 2435.5 L2078.2 2434.4 L2078.8 2440.2 L2079.5 2437.6 L2080.2 2474.0 L2080.9 2438.2 L2081.6 2437.9 L2082.3 2435.5 L2083.0 2437.3 L2083.6 2464.3 L2084.3 2436.0 L2085.0 2437.2 L2085.7 2434.1 L2086.4 2441.4 L2087.1 2435.0 L2087.7 2441.4 L2088.4 2483.7 L2089.1 2436.3 L2089.8 2439.7 L2090.5 2440.8 L2091.2 2439.3 L2091.9 2479.9 L2092.5 2438.4 L2093.2 2439.4 L2093.9 2436.7 L2094.6 2434.3 L2095.3 2462.2 L2096.0 2439.1 L2096.7 2434.6 L2097.3 2439.9 L2098.0 2436.8 L2098.7 2455.4 L2099.4 2449.2 L2100.1 2440.0 L2100.8 2433.9 L2101.4 2435.5 L2102.1 2437.5 L2102.8 2433.8 L2103.5 2434.4 L2104.2 2440.1 L2104.9 2434.3 L2105.6 2450.9 L2106.2 2435.0 L2106.9 2434.8 L2107.6 2438.2 L2108.3 2434.0 L2109.0 2441.3 L2109.7 2440.8 L2110.4 2435.3 L2111.0 2441.5 L2111.7 2438.6 L2112.4 2435.0 L2113.1 2434.1 L2113.8 2435.8 L2114.5 2435.7 L2115.1 2436.5 L2115.8 2435.2 L2116.5 2434.5 L2117.2 2434.8 L2117.9 2434.8 L2118.6 2438.0 L2119.3 2440.8 L2119.9 2438.7 L2120.6 2454.5 L2121.3 2434.8 L2122.0 2441.0 L2122.7 2438.2 L2123.4 2434.6 L2124.1 2434.0 L2124.7 2434.6 L2125.4 2435.2 L2126.1 2439.8 L2126.8 2476.4 L2127.5 2433.8 L2128.2 2435.4 L2128.8 2438.0 L2129.5 2440.4 L2130.2 2433.7 L2130.9 2440.6 L2131.6 2415.5 L2133.0 2416.4 L2143.9 2419.7 L2154.9 2422.9 L2156.2 2422.9 L2178.9 2423.9 L2201.5 2424.8" fill="none" stroke="#5e8bb9" stroke-width="2" stroke-linejoin="round"/></g></svg><div class="t" style="left:557.09px;top:747.40px;font-size:12px;font-weight:700;color:#1a1c21;transform:scaleX(1.0200);transform-origin:0 0;">CPU usage over time</div>
<div class="t" style="left:575.86px;top:784.10px;font-size:10px;color:#535966;transform:scaleX(1.0250);transform-origin:0 0;">50.00%</div>
<div class="t" style="left:575.86px;top:848.30px;font-size:10px;color:#535966;transform:scaleX(1.0250);transform-origin:0 0;">40.00%</div>
<div class="t" style="left:575.86px;top:912.50px;font-size:10px;color:#535966;transform:scaleX(1.0250);transform-origin:0 0;">30.00%</div>
<div class="t" style="left:575.86px;top:976.70px;font-size:10px;color:#535966;transform:scaleX(1.0250);transform-origin:0 0;">20.00%</div>
<div class="t" style="left:575.86px;top:1040.90px;font-size:10px;color:#535966;transform:scaleX(1.0250);transform-origin:0 0;">10.00%</div>
<div class="t" style="left:581.50px;top:1105.10px;font-size:10px;color:#535966;transform:scaleX(1.0250);transform-origin:0 0;">0.00%</div>
<div class="t" style="left:622.88px;top:1114.30px;font-size:10px;color:#535966;transform:scaleX(1.0400);transform-origin:0 0;">07:00</div>
<div class="t" style="left:675.78px;top:1114.30px;font-size:10px;color:#535966;transform:scaleX(1.0400);transform-origin:0 0;">08:00</div>
<div class="t" style="left:739.40px;top:1114.30px;font-size:10px;color:#535966;transform:scaleX(1.0400);transform-origin:0 0;">09:00</div>
<div class="t" style="left:802.61px;top:1114.30px;font-size:10px;color:#535966;transform:scaleX(1.0400);transform-origin:0 0;">10:00</div>
<div class="t" style="left:866.23px;top:1114.30px;font-size:10px;color:#535966;transform:scaleX(1.0400);transform-origin:0 0;">11:00</div>
<div class="t" style="left:929.85px;top:1114.30px;font-size:10px;color:#535966;transform:scaleX(1.0400);transform-origin:0 0;">12:00</div>
<div class="t" style="left:993.47px;top:1114.30px;font-size:10px;color:#535966;transform:scaleX(1.0400);transform-origin:0 0;">13:00</div>
<div class="t" style="left:1057.09px;top:1114.30px;font-size:10px;color:#535966;transform:scaleX(1.0400);transform-origin:0 0;">14:00</div>
<div class="t" style="left:1120.71px;top:1114.30px;font-size:10px;color:#535966;transform:scaleX(1.0400);transform-origin:0 0;">15:00</div>
<div class="t" style="left:1184.33px;top:1114.30px;font-size:10px;color:#535966;transform:scaleX(1.0400);transform-origin:0 0;">16:00</div>
<div class="t" style="left:1247.95px;top:1114.30px;font-size:10px;color:#535966;transform:scaleX(1.0400);transform-origin:0 0;">17:00</div>
<div class="t" style="left:1311.57px;top:1114.30px;font-size:10px;color:#535966;transform:scaleX(1.0400);transform-origin:0 0;">18:00</div>
<div class="t" style="left:623.09px;top:1124.30px;font-size:10px;color:#535966;transform:scaleX(1.0334);transform-origin:0 0;">June 10, 2024</div>
<div class="a" style="left:1382.0px;top:792.4px;width:8px;height:8px;border-radius:50%;background:#5ba68c;"></div>
<div class="t" style="left:1397.12px;top:790.50px;font-size:12px;color:#343741;transform:scaleX(1.1000);transform-origin:0 0;">user</div>
<div class="a" style="left:1382.0px;top:814.4px;width:8px;height:8px;border-radius:50%;background:#5e8bb9;"></div>
<div class="t" style="left:1397.67px;top:812.50px;font-size:12px;color:#343741;transform:scaleX(1.1000);transform-origin:0 0;">system</div>
<div class="a" style="left:1382.0px;top:836.4px;width:8px;height:8px;border-radius:50%;background:#d36086;"></div>
<div class="t" style="left:1397.12px;top:834.50px;font-size:12px;color:#343741;transform:scaleX(1.1000);transform-origin:0 0;">nice</div>
<div class="a" style="left:1382.0px;top:858.4px;width:8px;height:8px;border-radius:50%;background:#9170b8;"></div>
<div class="t" style="left:1397.12px;top:856.50px;font-size:12px;color:#343741;transform:scaleX(1.1000);transform-origin:0 0;">irq</div>
<div class="a" style="left:1382.0px;top:880.4px;width:8px;height:8px;border-radius:50%;background:#ca8eae;"></div>
<div class="t" style="left:1397.67px;top:878.50px;font-size:12px;color:#343741;transform:scaleX(1.1000);transform-origin:0 0;">softirq</div>
<div class="a" style="left:1382.0px;top:902.4px;width:8px;height:8px;border-radius:50%;background:#d6bf57;"></div>
<div class="t" style="left:1397.12px;top:900.50px;font-size:12px;color:#343741;transform:scaleX(1.1000);transform-origin:0 0;">iowait</div>
<div class="t" style="left:1495.09px;top:747.40px;font-size:12px;font-weight:700;color:#1a1c21;transform:scaleX(1.0200);transform-origin:0 0;">System load</div>
<div class="t" style="left:1513.93px;top:783.90px;font-size:10px;color:#535966;transform:scaleX(1.0250);transform-origin:0 0;">20</div>
<div class="t" style="left:1513.93px;top:864.02px;font-size:10px;color:#535966;transform:scaleX(1.0250);transform-origin:0 0;">15</div>
<div class="t" style="left:1513.93px;top:944.15px;font-size:10px;color:#535966;transform:scaleX(1.0250);transform-origin:0 0;">10</div>
<div class="t" style="left:1519.67px;top:1024.27px;font-size:10px;color:#535966;transform:scaleX(1.0250);transform-origin:0 0;">5</div>
<div class="t" style="left:1519.67px;top:1104.40px;font-size:10px;color:#535966;transform:scaleX(1.0250);transform-origin:0 0;">0</div>
<div class="t" style="left:1538.58px;top:1113.60px;font-size:10px;color:#535966;transform:scaleX(1.0400);transform-origin:0 0;">07:00</div>
<div class="t" style="left:1588.98px;top:1113.60px;font-size:10px;color:#535966;transform:scaleX(1.0400);transform-origin:0 0;">08:00</div>
<div class="t" style="left:1651.80px;top:1113.60px;font-size:10px;color:#535966;transform:scaleX(1.0400);transform-origin:0 0;">09:00</div>
<div class="t" style="left:1714.21px;top:1113.60px;font-size:10px;color:#535966;transform:scaleX(1.0400);transform-origin:0 0;">10:00</div>
<div class="t" style="left:1777.03px;top:1113.60px;font-size:10px;color:#535966;transform:scaleX(1.0400);transform-origin:0 0;">11:00</div>
<div class="t" style="left:1839.85px;top:1113.60px;font-size:10px;color:#535966;transform:scaleX(1.0400);transform-origin:0 0;">12:00</div>
<div class="t" style="left:1902.67px;top:1113.60px;font-size:10px;color:#535966;transform:scaleX(1.0400);transform-origin:0 0;">13:00</div>
<div class="t" style="left:1965.49px;top:1113.60px;font-size:10px;color:#535966;transform:scaleX(1.0400);transform-origin:0 0;">14:00</div>
<div class="t" style="left:2028.31px;top:1113.60px;font-size:10px;color:#535966;transform:scaleX(1.0400);transform-origin:0 0;">15:00</div>
<div class="t" style="left:2091.13px;top:1113.60px;font-size:10px;color:#535966;transform:scaleX(1.0400);transform-origin:0 0;">16:00</div>
<div class="t" style="left:2153.95px;top:1113.60px;font-size:10px;color:#535966;transform:scaleX(1.0400);transform-origin:0 0;">17:00</div>
<div class="t" style="left:2216.77px;top:1113.60px;font-size:10px;color:#535966;transform:scaleX(1.0400);transform-origin:0 0;">18:00</div>
<div class="t" style="left:1538.79px;top:1123.60px;font-size:10px;color:#535966;transform:scaleX(1.0334);transform-origin:0 0;">June 10, 2024</div>
<div class="a" style="left:2285.8px;top:792.5px;width:8px;height:8px;border-radius:50%;background:#3a8270;"></div>
<div class="t" style="left:2300.81px;top:790.60px;font-size:12px;color:#343741;transform:scaleX(1.1000);transform-origin:0 0;">1m</div>
<div class="a" style="left:2285.8px;top:814.5px;width:8px;height:8px;border-radius:50%;background:#6fa997;"></div>
<div class="t" style="left:2301.25px;top:812.60px;font-size:12px;color:#343741;transform:scaleX(1.1000);transform-origin:0 0;">5m</div>
<div class="a" style="left:2285.8px;top:836.5px;width:8px;height:8px;border-radius:50%;background:#aacfc2;"></div>
<div class="t" style="left:2300.81px;top:834.60px;font-size:12px;color:#343741;transform:scaleX(1.1000);transform-origin:0 0;">15m</div>
<div class="t" style="left:556.78px;top:1252.40px;font-size:12px;font-weight:700;color:#1a1c21;transform:scaleX(1.0200);transform-origin:0 0;">Memory usage over time</div>
<div class="t" style="left:574.42px;top:1288.10px;font-size:10px;color:#535966;transform:scaleX(1.0250);transform-origin:0 0;">16.00GB</div>
<div class="t" style="left:574.42px;top:1347.35px;font-size:10px;color:#535966;transform:scaleX(1.0250);transform-origin:0 0;">12.00GB</div>
<div class="t" style="left:580.16px;top:1406.60px;font-size:10px;color:#535966;transform:scaleX(1.0250);transform-origin:0 0;">8.00GB</div>
<div class="t" style="left:580.16px;top:1465.85px;font-size:10px;color:#535966;transform:scaleX(1.0250);transform-origin:0 0;">4.00GB</div>
<div class="t" style="left:588.06px;top:1525.10px;font-size:10px;color:#535966;transform:scaleX(1.0250);transform-origin:0 0;">0.00B</div>
<div class="t" style="left:626.58px;top:1534.30px;font-size:10px;color:#535966;transform:scaleX(1.0400);transform-origin:0 0;">07:00</div>
<div class="t" style="left:742.98px;top:1534.30px;font-size:10px;color:#535966;transform:scaleX(1.0400);transform-origin:0 0;">08:00</div>
<div class="t" style="left:882.64px;top:1534.30px;font-size:10px;color:#535966;transform:scaleX(1.0400);transform-origin:0 0;">09:00</div>
<div class="t" style="left:1021.89px;top:1534.30px;font-size:10px;color:#535966;transform:scaleX(1.0400);transform-origin:0 0;">10:00</div>
<div class="t" style="left:1161.55px;top:1534.30px;font-size:10px;color:#535966;transform:scaleX(1.0400);transform-origin:0 0;">11:00</div>
<div class="t" style="left:1301.21px;top:1534.30px;font-size:10px;color:#535966;transform:scaleX(1.0400);transform-origin:0 0;">12:00</div>
<div class="t" style="left:1440.87px;top:1534.30px;font-size:10px;color:#535966;transform:scaleX(1.0400);transform-origin:0 0;">13:00</div>
<div class="t" style="left:1580.53px;top:1534.30px;font-size:10px;color:#535966;transform:scaleX(1.0400);transform-origin:0 0;">14:00</div>
<div class="t" style="left:1720.19px;top:1534.30px;font-size:10px;color:#535966;transform:scaleX(1.0400);transform-origin:0 0;">15:00</div>
<div class="t" style="left:1859.85px;top:1534.30px;font-size:10px;color:#535966;transform:scaleX(1.0400);transform-origin:0 0;">16:00</div>
<div class="t" style="left:1999.51px;top:1534.30px;font-size:10px;color:#535966;transform:scaleX(1.0400);transform-origin:0 0;">17:00</div>
<div class="t" style="left:2139.17px;top:1534.30px;font-size:10px;color:#535966;transform:scaleX(1.0400);transform-origin:0 0;">18:00</div>
<div class="t" style="left:626.79px;top:1544.30px;font-size:10px;color:#535966;transform:scaleX(1.0334);transform-origin:0 0;">June 10, 2024</div>
<div class="a" style="left:2273.0px;top:1296.0px;width:8px;height:8px;border-radius:50%;background:#5ba68c;"></div>
<div class="t" style="left:2288.01px;top:1294.10px;font-size:12px;color:#343741;transform:scaleX(1.1000);transform-origin:0 0;">Used</div>
<div class="a" style="left:2273.0px;top:1318.0px;width:8px;height:8px;border-radius:50%;background:#5e8bb9;"></div>
<div class="t" style="left:2288.34px;top:1316.10px;font-size:12px;color:#343741;transform:scaleX(1.1000);transform-origin:0 0;">Cache</div>
<div class="a" style="left:2273.0px;top:1340.0px;width:8px;height:8px;border-radius:50%;background:#d36086;"></div>
<div class="t" style="left:2287.90px;top:1338.10px;font-size:12px;color:#343741;transform:scaleX(1.1000);transform-origin:0 0;">Free</div>
<div class="t" style="left:556.78px;top:1671.80px;font-size:12px;font-weight:700;color:#1a1c21;transform:scaleX(1.0200);transform-origin:0 0;">Rate of disk IO</div>
<div class="t" style="left:579.81px;top:1707.49px;font-size:10px;color:#535966;transform:scaleX(1.0250);transform-origin:0 0;">76.29MB/s</div>
<div class="t" style="left:579.81px;top:1744.96px;font-size:10px;color:#535966;transform:scaleX(1.0250);transform-origin:0 0;">57.22MB/s</div>
<div class="t" style="left:579.81px;top:1782.44px;font-size:10px;color:#535966;transform:scaleX(1.0250);transform-origin:0 0;">38.15MB/s</div>
<div class="t" style="left:579.81px;top:1819.93px;font-size:10px;color:#535966;transform:scaleX(1.0250);transform-origin:0 0;">19.07MB/s</div>
<div class="t" style="left:594.06px;top:1857.40px;font-size:10px;color:#535966;transform:scaleX(1.0250);transform-origin:0 0;">0.00B/s</div>
<div class="t" style="left:576.43px;top:1894.87px;font-size:10px;color:#535966;transform:scaleX(1.0250);transform-origin:0 0;">-19.07MB/s</div>
<div class="t" style="left:640.58px;top:1904.07px;font-size:10px;color:#535966;transform:scaleX(1.0400);transform-origin:0 0;">07:00</div>
<div class="t" style="left:749.08px;top:1904.07px;font-size:10px;color:#535966;transform:scaleX(1.0400);transform-origin:0 0;">08:00</div>
<div class="t" style="left:889.57px;top:1904.07px;font-size:10px;color:#535966;transform:scaleX(1.0400);transform-origin:0 0;">09:00</div>
<div class="t" style="left:1029.65px;top:1904.07px;font-size:10px;color:#535966;transform:scaleX(1.0400);transform-origin:0 0;">10:00</div>
<div class="t" style="left:1170.14px;top:1904.07px;font-size:10px;color:#535966;transform:scaleX(1.0400);transform-origin:0 0;">11:00</div>
<div class="t" style="left:1310.63px;top:1904.07px;font-size:10px;color:#535966;transform:scaleX(1.0400);transform-origin:0 0;">12:00</div>
<div class="t" style="left:1451.12px;top:1904.07px;font-size:10px;color:#535966;transform:scaleX(1.0400);transform-origin:0 0;">13:00</div>
<div class="t" style="left:1591.61px;top:1904.07px;font-size:10px;color:#535966;transform:scaleX(1.0400);transform-origin:0 0;">14:00</div>
<div class="t" style="left:1732.10px;top:1904.07px;font-size:10px;color:#535966;transform:scaleX(1.0400);transform-origin:0 0;">15:00</div>
<div class="t" style="left:1872.59px;top:1904.07px;font-size:10px;color:#535966;transform:scaleX(1.0400);transform-origin:0 0;">16:00</div>
<div class="t" style="left:2013.08px;top:1904.07px;font-size:10px;color:#535966;transform:scaleX(1.0400);transform-origin:0 0;">17:00</div>
<div class="t" style="left:2153.57px;top:1904.07px;font-size:10px;color:#535966;transform:scaleX(1.0400);transform-origin:0 0;">18:00</div>
<div class="t" style="left:640.79px;top:1914.07px;font-size:10px;color:#535966;transform:scaleX(1.0334);transform-origin:0 0;">June 10, 2024</div>
<div class="t" style="left:1366.77px;top:1932.80px;font-size:12px;font-weight:700;color:#1a1c21;transform:scaleX(1.0477);transform-origin:0 0;">@timestamp per 30 seconds</div>
<div class="a" style="left:2283.0px;top:1715.8px;width:8px;height:8px;border-radius:50%;background:#5ba68c;"></div>
<div class="t" style="left:2297.90px;top:1713.90px;font-size:12px;color:#343741;transform:scaleX(1.1000);transform-origin:0 0;">Reads</div>
<div class="a" style="left:2283.0px;top:1737.6px;width:8px;height:8px;border-radius:50%;background:#5e8bb9;"></div>
<div class="t" style="left:2298.89px;top:1735.70px;font-size:12px;color:#343741;transform:scaleX(1.1000);transform-origin:0 0;">Writes</div>
<div class="t" style="left:1197.38px;top:2064.30px;font-size:12px;font-weight:700;color:#1a1c21;transform:scaleX(1.0200);transform-origin:0 0;">Network traffic (packets)</div>
<div class="t" style="left:1235.38px;top:2099.80px;font-size:10px;color:#535966;transform:scaleX(1.0250);transform-origin:0 0;">0/s</div>
<div class="t" style="left:1220.51px;top:2137.22px;font-size:10px;color:#535966;transform:scaleX(1.0250);transform-origin:0 0;">-100/s</div>
<div class="t" style="left:1220.51px;top:2174.64px;font-size:10px;color:#535966;transform:scaleX(1.0250);transform-origin:0 0;">-200/s</div>
<div class="t" style="left:1220.51px;top:2212.06px;font-size:10px;color:#535966;transform:scaleX(1.0250);transform-origin:0 0;">-300/s</div>
<div class="t" style="left:1220.51px;top:2249.48px;font-size:10px;color:#535966;transform:scaleX(1.0250);transform-origin:0 0;">-400/s</div>
<div class="t" style="left:1220.51px;top:2286.90px;font-size:10px;color:#535966;transform:scaleX(1.0250);transform-origin:0 0;">-500/s</div>
<div class="t" style="left:1261.58px;top:2296.10px;font-size:10px;color:#535966;transform:scaleX(1.0400);transform-origin:0 0;">07:00</div>
<div class="t" style="left:1324.38px;top:2296.10px;font-size:10px;color:#535966;transform:scaleX(1.0400);transform-origin:0 0;">08:00</div>
<div class="t" style="left:1407.01px;top:2296.10px;font-size:10px;color:#535966;transform:scaleX(1.0400);transform-origin:0 0;">09:00</div>
<div class="t" style="left:1489.23px;top:2296.10px;font-size:10px;color:#535966;transform:scaleX(1.0400);transform-origin:0 0;">10:00</div>
<div class="t" style="left:1571.86px;top:2296.10px;font-size:10px;color:#535966;transform:scaleX(1.0400);transform-origin:0 0;">11:00</div>
<div class="t" style="left:1654.49px;top:2296.10px;font-size:10px;color:#535966;transform:scaleX(1.0400);transform-origin:0 0;">12:00</div>
<div class="t" style="left:1737.12px;top:2296.10px;font-size:10px;color:#535966;transform:scaleX(1.0400);transform-origin:0 0;">13:00</div>
<div class="t" style="left:1819.75px;top:2296.10px;font-size:10px;color:#535966;transform:scaleX(1.0400);transform-origin:0 0;">14:00</div>
<div class="t" style="left:1902.38px;top:2296.10px;font-size:10px;color:#535966;transform:scaleX(1.0400);transform-origin:0 0;">15:00</div>
<div class="t" style="left:1985.01px;top:2296.10px;font-size:10px;color:#535966;transform:scaleX(1.0400);transform-origin:0 0;">16:00</div>
<div class="t" style="left:2067.64px;top:2296.10px;font-size:10px;color:#535966;transform:scaleX(1.0400);transform-origin:0 0;">17:00</div>
<div class="t" style="left:2150.27px;top:2296.10px;font-size:10px;color:#535966;transform:scaleX(1.0400);transform-origin:0 0;">18:00</div>
<div class="t" style="left:1261.79px;top:2306.10px;font-size:10px;color:#535966;transform:scaleX(1.0334);transform-origin:0 0;">June 10, 2024</div>
<div class="a" style="left:2233.0px;top:2107.8px;width:8px;height:8px;border-radius:50%;background:#5ba68c;"></div>
<div class="t" style="left:2247.79px;top:2105.90px;font-size:12px;color:#343741;transform:scaleX(1.1000);transform-origin:0 0;">Inbound</div>
<div class="a" style="left:2233.0px;top:2129.5px;width:8px;height:8px;border-radius:50%;background:#5e8bb9;"></div>
<div class="t" style="left:2248.34px;top:2127.60px;font-size:12px;color:#343741;transform:scaleX(1.1000);transform-origin:0 0;">Outbound</div>
<div class="t" style="left:1651.67px;top:2324.80px;font-size:12px;font-weight:700;color:#1a1c21;transform:scaleX(1.0477);transform-origin:0 0;">@timestamp per 30 seconds</div>
<div class="t" style="left:1197.38px;top:2372.00px;font-size:12px;font-weight:700;color:#1a1c21;transform:scaleX(1.0200);transform-origin:0 0;">Network traffic (bytes)</div>
<div class="t" style="left:1240.78px;top:2407.80px;font-size:10px;color:#535966;transform:scaleX(1.0250);transform-origin:0 0;">0/s</div>
<div class="t" style="left:1220.79px;top:2454.30px;font-size:10px;color:#535966;transform:scaleX(1.0250);transform-origin:0 0;">-100k/s</div>
<div class="t" style="left:1220.79px;top:2500.80px;font-size:10px;color:#535966;transform:scaleX(1.0250);transform-origin:0 0;">-200k/s</div>
<div class="t" style="left:1220.79px;top:2547.30px;font-size:10px;color:#535966;transform:scaleX(1.0250);transform-origin:0 0;">-300k/s</div>
<div class="t" style="left:1266.08px;top:2604.30px;font-size:10px;color:#535966;transform:scaleX(1.0400);transform-origin:0 0;">07:00</div>
<div class="t" style="left:1328.98px;top:2604.30px;font-size:10px;color:#535966;transform:scaleX(1.0400);transform-origin:0 0;">08:00</div>
<div class="t" style="left:1411.18px;top:2604.30px;font-size:10px;color:#535966;transform:scaleX(1.0400);transform-origin:0 0;">09:00</div>
<div class="t" style="left:1492.97px;top:2604.30px;font-size:10px;color:#535966;transform:scaleX(1.0400);transform-origin:0 0;">10:00</div>
<div class="t" style="left:1575.17px;top:2604.30px;font-size:10px;color:#535966;transform:scaleX(1.0400);transform-origin:0 0;">11:00</div>
<div class="t" style="left:1657.37px;top:2604.30px;font-size:10px;color:#535966;transform:scaleX(1.0400);transform-origin:0 0;">12:00</div>
<div class="t" style="left:1739.57px;top:2604.30px;font-size:10px;color:#535966;transform:scaleX(1.0400);transform-origin:0 0;">13:00</div>
<div class="t" style="left:1821.77px;top:2604.30px;font-size:10px;color:#535966;transform:scaleX(1.0400);transform-origin:0 0;">14:00</div>
<div class="t" style="left:1903.97px;top:2604.30px;font-size:10px;color:#535966;transform:scaleX(1.0400);transform-origin:0 0;">15:00</div>
<div class="t" style="left:1986.17px;top:2604.30px;font-size:10px;color:#535966;transform:scaleX(1.0400);transform-origin:0 0;">16:00</div>
<div class="t" style="left:2068.37px;top:2604.30px;font-size:10px;color:#535966;transform:scaleX(1.0400);transform-origin:0 0;">17:00</div>
<div class="t" style="left:2150.57px;top:2604.30px;font-size:10px;color:#535966;transform:scaleX(1.0400);transform-origin:0 0;">18:00</div>
<div class="t" style="left:1266.29px;top:2614.30px;font-size:10px;color:#535966;transform:scaleX(1.0334);transform-origin:0 0;">June 10, 2024</div>
<div class="a" style="left:2233.0px;top:2416.2px;width:8px;height:8px;border-radius:50%;background:#5ba68c;"></div>
<div class="t" style="left:2247.79px;top:2414.30px;font-size:12px;color:#343741;transform:scaleX(1.1000);transform-origin:0 0;">Inbound</div>
<div class="a" style="left:2233.0px;top:2437.9px;width:8px;height:8px;border-radius:50%;background:#5e8bb9;"></div>
<div class="t" style="left:2248.34px;top:2436.00px;font-size:12px;color:#343741;transform:scaleX(1.1000);transform-origin:0 0;">Outbound</div>
<div class="a" style="left:0;top:2330px;width:2374px;height:188px;background:radial-gradient(ellipse 700px 140px at 1320px 198px, rgba(0,0,0,0.085), rgba(0,0,0,0) 100%);pointer-events:none;"></div>
<div class="a" style="left:2372px;top:80px;width:1px;height:2438px;background:#a9abae;"></div><div class="a" style="left:2373px;top:80px;width:1px;height:2438px;background:#e4e5e8;"></div></body></html>
